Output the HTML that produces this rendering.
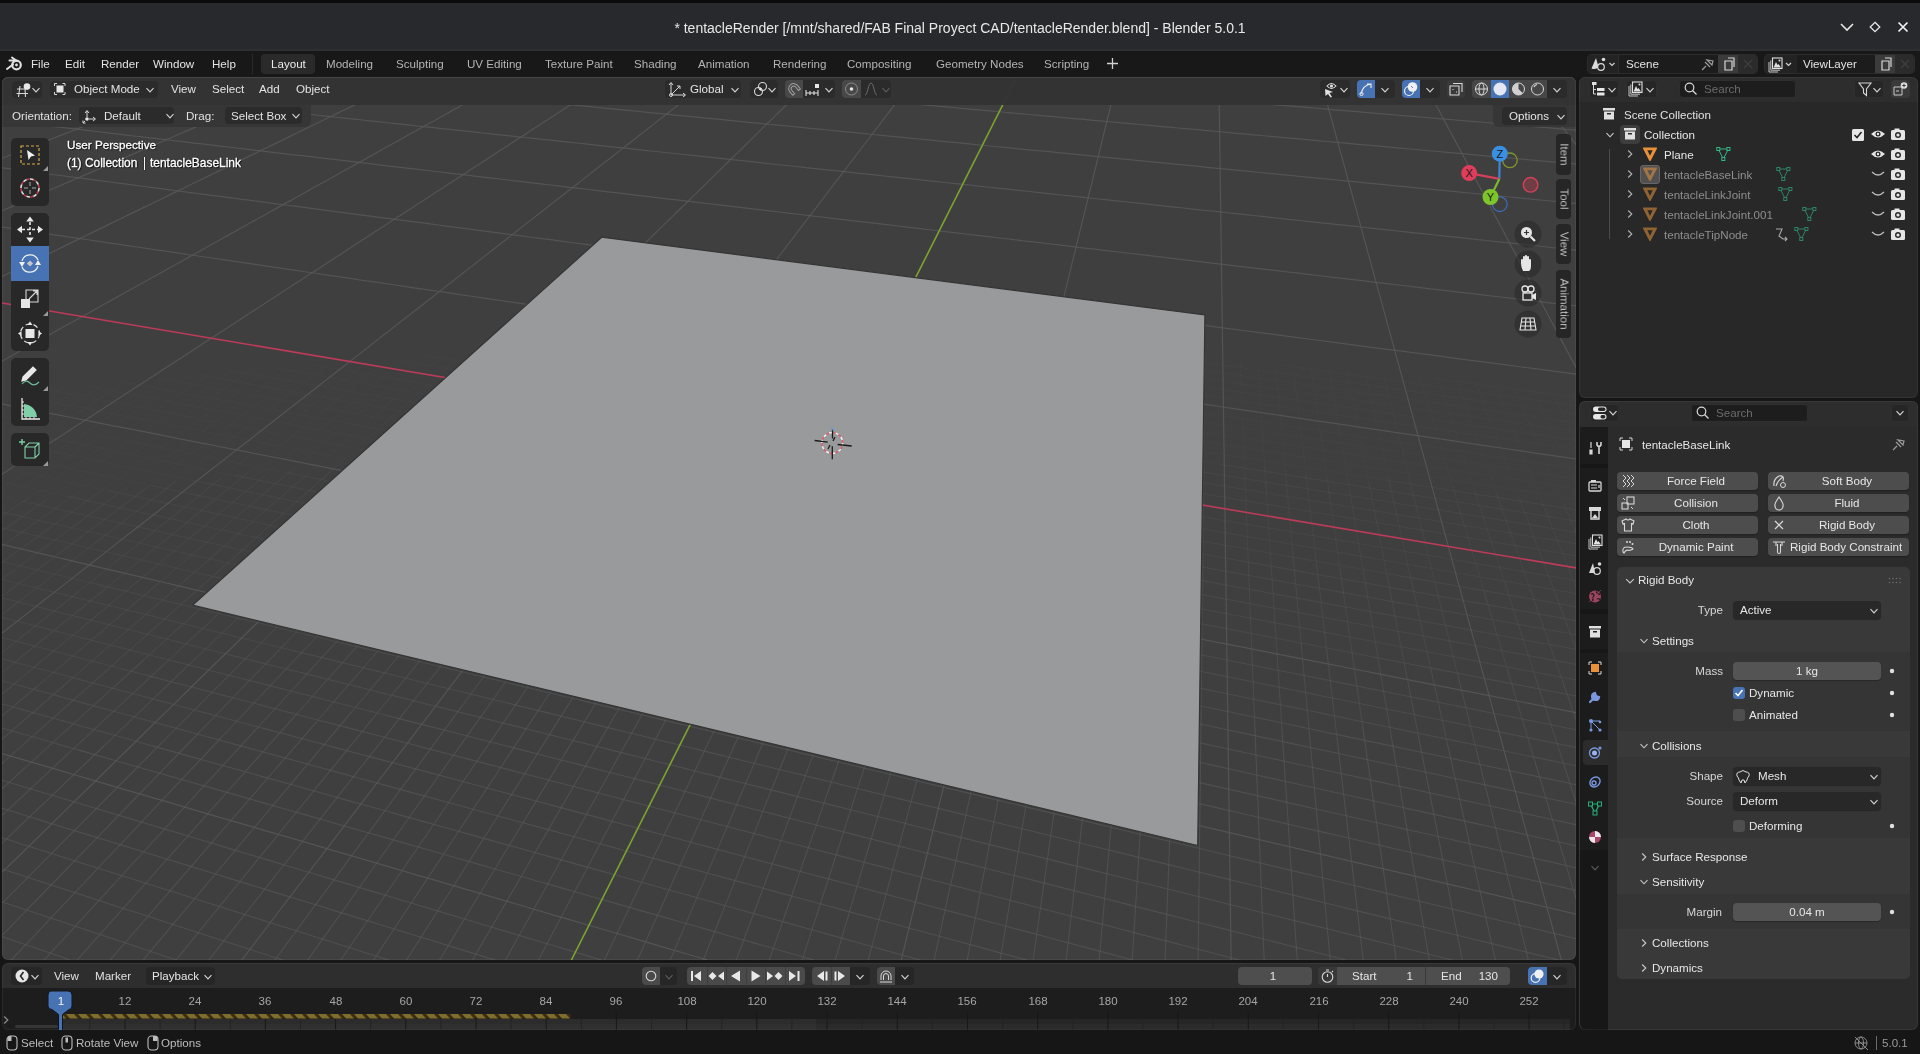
<!DOCTYPE html>
<html><head><meta charset="utf-8"><style>
html,body{margin:0;padding:0;width:1920px;height:1054px;overflow:hidden;background:#161616}
.t{position:absolute;white-space:pre;line-height:20px;font-family:"Liberation Sans", sans-serif;will-change:transform}
svg{overflow:visible}
</style></head><body style="position:relative">
<div style="position:absolute;left:0px;top:0px;width:1920px;height:1054px;background:#161616;border-radius:0px;"></div><div style="position:absolute;left:0px;top:0px;width:1920px;height:51px;background:#27292c;border-radius:0px;"></div><div style="position:absolute;left:0px;top:49px;width:1920px;height:2px;background:#2d2f32;border-radius:0px;"></div><div style="position:absolute;left:0px;top:0px;width:1920px;height:3px;background:#0b0b0b;border-radius:0px;"></div><div class="t" style="left:510.0px;width:900px;text-align:center;top:17.65px;font-size:14px;color:#e8e8e8;">* tentacleRender [/mnt/shared/FAB Final Proyect CAD/tentacleRender.blend] - Blender 5.0.1</div><svg style="position:absolute;left:1838px;top:20px;" width="18" height="14" viewBox="0 0 18 14"><path d="M3 4 L9 10 L15 4" stroke="#e6e6e6" stroke-width="1.6" fill="none"/></svg><svg style="position:absolute;left:1866px;top:18px;" width="18" height="18" viewBox="0 0 18 18"><path d="M9 4.3 L13.8 9 L9 13.7 L4.2 9 Z" stroke="#e6e6e6" stroke-width="1.3" fill="none"/></svg><svg style="position:absolute;left:1894px;top:18px;" width="18" height="18" viewBox="0 0 18 18"><path d="M4.5 4.5 L13.5 13.5 M13.5 4.5 L4.5 13.5" stroke="#f0f0f0" stroke-width="1.7" fill="none"/></svg><div style="position:absolute;left:0px;top:51px;width:1920px;height:26px;background:#181818;border-radius:0px;"></div><svg style="position:absolute;left:5px;top:55px;" width="20" height="18" viewBox="0 0 20 18"><g fill="none" stroke="#e0e0e0"><circle cx="11.5" cy="10" r="4.3" stroke-width="2.2"/><circle cx="11.5" cy="10" r="1.4" fill="#e0e0e0" stroke="none"/><path d="M2 14 L8 9.5 M4.5 5.5 L10 5.5 M7 2.5 L12 6" stroke-width="2" stroke-linecap="round"/></g></svg><div class="t" style="left:31px;top:54.28px;font-size:11.6px;color:#e3e3e3;">File</div><div class="t" style="left:65px;top:54.28px;font-size:11.6px;color:#e3e3e3;">Edit</div><div class="t" style="left:101px;top:54.28px;font-size:11.6px;color:#e3e3e3;">Render</div><div class="t" style="left:153px;top:54.28px;font-size:11.6px;color:#e3e3e3;">Window</div><div class="t" style="left:212px;top:54.28px;font-size:11.6px;color:#e3e3e3;">Help</div><div style="position:absolute;left:252px;top:54px;width:1px;height:20px;background:#2a2a2a;border-radius:0px;"></div><div style="position:absolute;left:261px;top:54px;width:54px;height:20px;background:#2a2a2a;border-radius:4px;"></div><div class="t" style="left:270.6px;top:54.28px;font-size:11.6px;color:#eaeaea;">Layout</div><div class="t" style="left:326.4px;top:54.28px;font-size:11.6px;color:#b4b4b4;">Modeling</div><div class="t" style="left:396.2px;top:54.28px;font-size:11.6px;color:#b4b4b4;">Sculpting</div><div class="t" style="left:467px;top:54.28px;font-size:11.6px;color:#b4b4b4;">UV Editing</div><div class="t" style="left:544.5px;top:54.28px;font-size:11.6px;color:#b4b4b4;">Texture Paint</div><div class="t" style="left:634px;top:54.28px;font-size:11.6px;color:#b4b4b4;">Shading</div><div class="t" style="left:698px;top:54.28px;font-size:11.6px;color:#b4b4b4;">Animation</div><div class="t" style="left:773px;top:54.28px;font-size:11.6px;color:#b4b4b4;">Rendering</div><div class="t" style="left:846.7px;top:54.28px;font-size:11.6px;color:#b4b4b4;">Compositing</div><div class="t" style="left:936.4px;top:54.28px;font-size:11.6px;color:#b4b4b4;">Geometry Nodes</div><div class="t" style="left:1044px;top:54.28px;font-size:11.6px;color:#b4b4b4;">Scripting</div><svg style="position:absolute;left:1106px;top:57px;" width="13" height="13" viewBox="0 0 13 13"><path d="M6.5 1 V12 M1 6.5 H12" stroke="#d0d0d0" stroke-width="1.3"/></svg><div style="position:absolute;left:1587px;top:54px;width:171px;height:20px;background:#232323;border-radius:5px;box-shadow:inset 0 0 0 1px #2c2c2c"></div><div style="position:absolute;left:1619px;top:55px;width:99px;height:18px;background:#1c1c1c;border-radius:0px;"></div><div style="position:absolute;left:1618px;top:55px;width:1px;height:18px;background:#2f2f2f;border-radius:0px;"></div><div style="position:absolute;left:1718px;top:55px;width:20px;height:18px;background:#3b3b3b;border-radius:0px;"></div><div style="position:absolute;left:1738px;top:55px;width:19px;height:18px;background:#2b2b2b;border-radius:0px;border-radius:0 4px 4px 0"></div><div class="t" style="left:1626.4px;top:53.68px;font-size:11.6px;color:#e3e3e3;">Scene</div><div style="position:absolute;left:1764px;top:54px;width:151px;height:20px;background:#232323;border-radius:5px;box-shadow:inset 0 0 0 1px #2c2c2c"></div><div style="position:absolute;left:1797px;top:55px;width:78px;height:18px;background:#1c1c1c;border-radius:0px;"></div><div style="position:absolute;left:1875px;top:55px;width:20px;height:18px;background:#3b3b3b;border-radius:0px;"></div><div style="position:absolute;left:1895px;top:55px;width:19px;height:18px;background:#2b2b2b;border-radius:0px;border-radius:0 4px 4px 0"></div><div class="t" style="left:1802.8px;top:53.68px;font-size:11.6px;color:#e3e3e3;">ViewLayer</div><svg style="position:absolute;left:1590px;top:55px;" width="34" height="18" viewBox="0 0 34 18"><path d="M1.5 13.5 L6 3 L8.5 12 Q6 15 1.5 13.5 Z" fill="#dcdcdc"/><circle cx="11" cy="12" r="3.3" fill="#232323" stroke="#dcdcdc" stroke-width="1.2"/><circle cx="13.5" cy="4.5" r="1.8" fill="#dcdcdc"/><path d="M19.5 8 L22 10.5 L24.5 8" stroke="#d0d0d0" stroke-width="1.2" fill="none"/></svg><svg style="position:absolute;left:1700px;top:56px;" width="16" height="16" viewBox="0 0 16 16"><path d="M2 14 L6 10 M5 6 L10 11 M7 4 L12 9 L13 5 Z" stroke="#9a9a9a" stroke-width="1.2" fill="none"/></svg><svg style="position:absolute;left:1720px;top:56px;" width="17" height="16" viewBox="0 0 17 16"><path d="M5 5 H12 V14 H5 Z M8 2 H14 V11" stroke="#d8d8d8" stroke-width="1.2" fill="none"/></svg><svg style="position:absolute;left:1877px;top:56px;" width="17" height="16" viewBox="0 0 17 16"><path d="M5 5 H12 V14 H5 Z M8 2 H14 V11" stroke="#d8d8d8" stroke-width="1.2" fill="none"/></svg><svg style="position:absolute;left:1741px;top:57px;" width="14" height="14" viewBox="0 0 14 14"><path d="M3 3 L11 11 M11 3 L3 11" stroke="#3e3e3e" stroke-width="1.3"/></svg><svg style="position:absolute;left:1898px;top:57px;" width="14" height="14" viewBox="0 0 14 14"><path d="M3 3 L11 11 M11 3 L3 11" stroke="#3e3e3e" stroke-width="1.3"/></svg><svg style="position:absolute;left:1767px;top:56px;" width="34" height="17" viewBox="0 0 34 17"><path d="M2 6 V16 H11 M3.8 4.5 V14.2 H13" stroke="#d8d8d8" stroke-width="0.9" fill="none"/><rect x="5.5" y="2" width="9.5" height="10.5" stroke="#e0e0e0" stroke-width="1.1" fill="none"/><path d="M6.5 11.5 L9 6 L10.5 9 L11.5 8 L14 11.5 Z" fill="#e0e0e0"/><circle cx="12.5" cy="4.5" r="1" fill="#e0e0e0"/><path d="M19 7 L21.5 9.5 L24 7" stroke="#d0d0d0" stroke-width="1.2" fill="none"/></svg><div style="position:absolute;left:2px;top:77px;width:1574px;height:883px;background:#3f3f3f;border-radius:6px;overflow:hidden"><svg style="position:absolute;left:-2px;top:-77px" width="1580" height="960" viewBox="0 0 1580 960"><path d="M1572.1 394.7L1575.9 402.1L1576.0 402.4M1552.5 392.0L1556.0 399.4L1559.6 406.9L1563.3 414.5L1567.0 422.3L1570.9 430.3L1574.8 438.4L1576.0 441.0M1533.0 389.4L1536.3 396.7L1539.7 404.1L1543.1 411.7L1546.6 419.4L1550.2 427.4L1553.9 435.4L1557.7 443.7L1561.5 452.2L1565.5 460.8L1569.5 469.6L1573.6 478.7L1576.0 484.0M1513.6 386.8L1516.7 394.0L1519.9 401.4L1523.1 408.9L1526.4 416.6L1529.8 424.5L1533.2 432.5L1536.7 440.7L1540.3 449.1L1544.0 457.6L1547.8 466.4L1551.6 475.4L1555.6 484.5L1559.6 493.9L1563.7 503.6M1494.4 384.2L1497.3 391.4L1500.2 398.7L1503.3 406.1L1506.3 413.8L1509.5 421.6L1512.7 429.5L1516.0 437.7L1519.3 446.0L1522.7 454.5L1526.2 463.2L1529.8 472.1L1533.5 481.2L1537.3 490.5L1541.1 500.0M1475.3 381.6L1478.0 388.7L1480.8 396.0L1483.6 403.4L1486.4 411.0L1489.3 418.7L1492.3 426.6L1495.4 434.7L1498.5 442.9L1501.6 451.4L1504.9 460.0L1508.2 468.8L1511.6 477.8L1515.1 487.1L1518.7 496.5M1456.4 379.1L1458.9 386.1L1461.4 393.3L1464.0 400.7L1466.7 408.2L1469.3 415.9L1472.1 423.7L1474.9 431.7L1477.8 439.9L1480.7 448.3L1483.7 456.8L1486.8 465.6L1489.9 474.5L1493.2 483.7L1496.4 493.0M1437.6 376.5L1439.9 383.5L1442.2 390.7L1444.6 398.0L1447.0 405.4L1449.5 413.1L1452.0 420.8L1454.6 428.8L1457.3 436.9L1460.0 445.2L1462.7 453.7L1465.6 462.4L1468.4 471.2L1471.4 480.3L1474.4 489.6M1419.0 374.0L1421.1 381.0L1423.2 388.1L1425.4 395.3L1427.6 402.7L1429.8 410.3L1432.2 418.0L1434.5 425.9L1436.9 433.9L1439.4 442.1L1441.9 450.6L1444.5 459.2L1447.1 468.0L1449.8 477.0L1452.6 486.2M1383.8 375.9L1385.5 382.9L1387.3 390.0L1389.1 397.3L1390.9 404.7L1392.8 412.3L1394.7 420.1L1396.7 428.0L1398.7 436.1L1400.8 444.4L1402.9 452.9L1405.0 461.5L1407.2 470.4L1409.4 479.4M1365.4 373.4L1366.9 380.3L1368.5 387.4L1370.1 394.6L1371.7 402.0L1373.4 409.6L1375.1 417.3L1376.8 425.1L1378.6 433.2L1380.4 441.4L1382.3 449.8L1384.2 458.4L1386.1 467.1L1388.1 476.1M1347.1 370.9L1348.4 377.8L1349.8 384.8L1351.2 392.0L1352.6 399.3L1354.1 406.8L1355.6 414.4L1357.1 422.2L1358.7 430.2L1360.3 438.4L1361.9 446.7L1363.6 455.2L1365.3 463.9L1367.0 472.8L1368.8 481.9M1328.9 368.4L1330.1 375.2L1331.3 382.2L1332.5 389.3L1333.7 396.6L1335.0 404.0L1336.3 411.6L1337.6 419.4L1338.9 427.3L1340.3 435.4L1341.7 443.6L1343.1 452.1L1344.6 460.7L1346.1 469.5L1347.6 478.6M1310.9 365.9L1311.9 372.7L1312.9 379.7L1313.9 386.7L1314.9 394.0L1316.0 401.3L1317.1 408.8L1318.2 416.5L1319.3 424.4L1320.4 432.4L1321.6 440.6L1322.8 449.0L1324.1 457.5L1325.3 466.3L1326.6 475.3M1293.0 363.5L1293.8 370.2L1294.6 377.1L1295.4 384.1L1296.3 391.3L1297.1 398.6L1298.0 406.1L1298.9 413.7L1299.8 421.5L1300.8 429.5L1301.7 437.6L1302.7 445.9L1303.7 454.4L1304.7 463.1L1305.8 472.0M1275.9 367.8L1276.5 374.6L1277.1 381.6L1277.8 388.7L1278.4 395.9L1279.1 403.3L1279.8 410.9L1280.5 418.6L1281.2 426.5L1282.0 434.6L1282.7 442.8L1283.5 451.3L1284.3 459.9L1285.1 468.7M1258.0 365.3L1258.5 372.1L1258.9 379.0L1259.4 386.1L1259.9 393.3L1260.4 400.6L1260.9 408.1L1261.4 415.8L1261.9 423.6L1262.4 431.6L1262.9 439.8L1263.5 448.2L1264.1 456.7L1264.6 465.5M1240.4 362.9L1240.6 369.6L1240.9 376.5L1241.2 383.5L1241.5 390.6L1241.8 397.9L1242.1 405.4L1242.4 413.0L1242.7 420.8L1243.0 428.7L1243.3 436.8L1243.6 445.1L1244.0 453.6L1244.3 462.3L1244.7 471.1M1205.4 358.1L1205.3 364.7L1205.2 371.5L1205.1 378.4L1205.0 385.4L1205.0 392.6L1204.9 399.9L1204.8 407.4L1204.7 415.1L1204.6 422.9L1204.5 430.9L1204.4 439.0L1204.3 447.4L1204.2 455.9L1204.1 464.6M1188.1 355.7L1187.8 362.3L1187.6 369.0L1187.3 375.8L1187.0 382.8L1186.8 390.0L1186.5 397.2L1186.2 404.7L1185.9 412.3L1185.6 420.0L1185.3 428.0L1185.0 436.1L1184.7 444.3L1184.4 452.8L1184.0 461.4M1170.5 359.9L1170.0 366.5L1169.6 373.3L1169.2 380.3L1168.7 387.3L1168.2 394.6L1167.8 402.0L1167.3 409.5L1166.8 417.2L1166.3 425.0L1165.8 433.1L1165.3 441.3L1164.7 449.7L1164.2 458.3M1153.2 357.5L1152.6 364.1L1152.0 370.8L1151.4 377.7L1150.8 384.8L1150.1 391.9L1149.5 399.2L1148.8 406.7L1148.1 414.4L1147.4 422.2L1146.7 430.1L1146.0 438.3L1145.2 446.6L1144.5 455.1M1136.1 355.1L1135.4 361.7L1134.6 368.4L1133.8 375.2L1133.0 382.2L1132.2 389.3L1131.3 396.6L1130.5 404.0L1129.6 411.6L1128.7 419.3L1127.8 427.2L1126.8 435.3L1125.9 443.5L1124.9 452.0L1123.9 460.6M1119.1 352.7L1118.2 359.2L1117.3 365.9L1116.3 372.7L1115.3 379.6L1114.3 386.7L1113.3 393.9L1112.3 401.3L1111.2 408.8L1110.1 416.5L1109.0 424.3L1107.9 432.3L1106.7 440.5L1105.5 448.9L1104.3 457.4M1102.3 350.4L1101.2 356.8L1100.1 363.5L1099.0 370.2L1097.8 377.1L1096.6 384.1L1095.4 391.3L1094.2 398.6L1093.0 406.0L1091.7 413.6L1090.4 421.4L1089.0 429.4L1087.7 437.5L1086.3 445.8L1084.9 454.3M1084.3 354.5L1083.0 361.0L1081.7 367.7L1080.4 374.6L1079.1 381.5L1077.7 388.6L1076.3 395.9L1074.9 403.3L1073.4 410.8L1071.9 418.6L1070.4 426.5L1068.8 434.5L1067.2 442.8L1065.6 451.2M1067.5 352.1L1066.1 358.6L1064.6 365.3L1063.1 372.1L1061.6 379.0L1060.1 386.0L1058.5 393.2L1056.9 400.6L1055.2 408.1L1053.6 415.7L1051.8 423.6L1050.1 431.6L1048.3 439.7L1046.5 448.1L1044.6 456.6M1034.3 347.5L1032.6 353.9L1030.8 360.4L1029.0 367.1L1027.1 373.9L1025.3 380.9L1023.3 388.0L1021.4 395.2L1019.4 402.6L1017.3 410.1L1015.2 417.8L1013.1 425.7L1010.9 433.8L1008.7 442.0L1006.4 450.4M1016.0 351.5L1014.1 358.0L1012.1 364.7L1010.1 371.4L1008.0 378.3L1005.9 385.4L1003.8 392.5L1001.6 399.9L999.4 407.4L997.1 415.0L994.8 422.8L992.4 430.8L990.0 439.0L987.5 447.3M999.5 349.2L997.4 355.6L995.3 362.2L993.2 368.9L990.9 375.8L988.7 382.8L986.4 389.9L984.0 397.2L981.6 404.6L979.2 412.2L976.7 420.0L974.1 427.9L971.5 436.0L968.8 444.2L966.1 452.7M983.2 346.9L981.0 353.3L978.7 359.8L976.3 366.5L974.0 373.3L971.6 380.2L969.1 387.3L966.6 394.5L964.0 401.9L961.4 409.4L958.7 417.1L955.9 425.0L953.1 433.0L950.3 441.2L947.3 449.6M967.0 344.6L964.6 350.9L962.1 357.4L959.7 364.0L957.1 370.8L954.5 377.7L951.9 384.7L949.2 391.9L946.5 399.2L943.7 406.7L940.8 414.3L937.9 422.1L934.9 430.1L931.9 438.2L928.7 446.5M948.3 348.6L945.7 355.0L943.1 361.6L940.4 368.3L937.7 375.1L934.9 382.1L932.0 389.2L929.1 396.5L926.1 403.9L923.1 411.5L920.0 419.2L916.8 427.1L913.6 435.2L910.3 443.5L906.9 451.9M932.2 346.3L929.4 352.7L926.6 359.2L923.8 365.9L920.9 372.6L918.0 379.6L914.9 386.6L911.9 393.8L908.7 401.2L905.5 408.7L902.2 416.4L898.9 424.2L895.5 432.2L892.0 440.4L888.4 448.8M916.1 344.0L913.3 350.3L910.3 356.8L907.3 363.4L904.3 370.2L901.2 377.0L898.0 384.0L894.8 391.2L891.5 398.5L888.1 406.0L884.6 413.6L881.1 421.4L877.5 429.3L873.8 437.4L870.1 445.7M897.2 348.0L894.1 354.4L891.0 361.0L887.8 367.7L884.5 374.5L881.2 381.5L877.8 388.6L874.3 395.8L870.8 403.2L867.2 410.8L863.5 418.5L859.7 426.4L855.8 434.4L851.9 442.7L847.9 451.1M865.4 343.4L862.0 349.7L858.6 356.2L855.1 362.8L851.5 369.5L847.9 376.4L844.2 383.4L840.4 390.5L836.5 397.8L832.6 405.3L828.6 412.9L824.4 420.6L820.2 428.6L815.9 436.7L811.6 444.9M846.2 347.4L842.6 353.8L839.0 360.4L835.2 367.1L831.5 373.9L827.6 380.8L823.6 387.9L819.6 395.1L815.5 402.5L811.3 410.1L807.0 417.8L802.7 425.6L798.2 433.7L793.6 441.9L788.9 450.3M830.4 345.1L826.7 351.5L822.9 358.0L819.1 364.6L815.1 371.4L811.1 378.3L807.0 385.3L802.8 392.5L798.6 399.8L794.2 407.3L789.8 414.9L785.2 422.8L780.6 430.7L775.8 438.9L771.0 447.2M814.8 342.8L810.9 349.1L807.0 355.6L803.0 362.2L798.9 368.9L794.8 375.7L790.5 382.7L786.2 389.9L781.7 397.1L777.2 404.6L772.6 412.1L767.9 419.9L763.1 427.8L758.2 435.9L753.2 444.2M795.2 346.8L791.2 353.2L787.0 359.8L782.8 366.4L778.5 373.2L774.1 380.2L769.6 387.2L765.1 394.5L760.4 401.8L755.6 409.4L750.7 417.0L745.8 424.9L740.7 432.9L735.5 441.1L730.2 449.5M779.7 344.5L775.5 350.9L771.2 357.4L766.8 364.0L762.4 370.7L757.8 377.6L753.2 384.6L748.5 391.8L743.7 399.1L738.7 406.6L733.7 414.2L728.6 422.0L723.3 430.0L717.9 438.1L712.5 446.4M764.2 342.2L759.9 348.6L755.5 355.0L751.0 361.6L746.4 368.3L741.7 375.1L736.9 382.1L732.0 389.2L727.1 396.4L722.0 403.9L716.8 411.4L711.5 419.2L706.1 427.1L700.5 435.1L694.9 443.4L689.1 451.8M744.4 346.2L739.9 352.6L735.2 359.2L730.5 365.8L725.7 372.6L720.8 379.5L715.7 386.6L710.6 393.8L705.4 401.1L700.0 408.7L694.6 416.3L689.0 424.2L683.3 432.2L677.5 440.3L671.5 448.7M729.1 343.9L724.4 350.3L719.6 356.8L714.7 363.4L709.8 370.1L704.7 377.0L699.5 384.0L694.3 391.1L688.9 398.4L683.4 405.9L677.8 413.5L672.0 421.3L666.2 429.2L660.2 437.3L654.1 445.6M693.7 345.7L688.7 352.0L683.5 358.6L678.3 365.2L672.9 372.0L667.5 378.9L661.9 385.9L656.3 393.1L650.5 400.4L644.5 407.9L638.5 415.6L632.3 423.4L626.0 431.4L619.6 439.6L613.0 447.9M678.5 343.4L673.4 349.7L668.1 356.2L662.7 362.8L657.2 369.5L651.7 376.3L646.0 383.3L640.1 390.5L634.2 397.8L628.1 405.2L621.9 412.8L615.6 420.6L609.2 428.5L602.6 436.6L595.8 444.9L588.9 453.3M658.2 347.4L652.8 353.8L647.3 360.3L641.7 367.0L635.9 373.8L630.1 380.8L624.1 387.9L618.1 395.1L611.8 402.5L605.5 410.0L599.0 417.7L592.4 425.6L585.7 433.6L578.8 441.8L571.7 450.2M643.1 345.1L637.6 351.4L631.9 357.9L626.2 364.6L620.3 371.3L614.3 378.2L608.3 385.3L602.0 392.4L595.7 399.8L589.2 407.2L582.6 414.9L575.8 422.7L568.9 430.7L561.8 438.8L554.6 447.1L547.2 455.6M622.4 349.1L616.7 355.6L610.8 362.1L604.8 368.8L598.7 375.7L592.5 382.7L586.1 389.8L579.6 397.1L573.0 404.5L566.2 412.1L559.3 419.8L552.3 427.7L545.1 435.8L537.7 444.1L530.1 452.5M607.4 346.8L601.6 353.2L595.6 359.7L589.4 366.4L583.2 373.2L576.8 380.1L570.3 387.2L563.7 394.4L556.9 401.8L550.0 409.3L543.0 417.0L535.8 424.8L528.4 432.8L520.9 441.0L513.2 449.4L505.3 458.0M586.5 350.9L580.4 357.3L574.2 363.9L567.8 370.7L561.3 377.6L554.7 384.6L547.9 391.8L541.0 399.1L534.0 406.5L526.8 414.2L519.4 421.9L511.9 429.9L504.2 438.0L496.4 446.3L488.3 454.8M571.6 348.5L565.4 355.0L559.0 361.5L552.5 368.2L545.9 375.1L539.1 382.0L532.2 389.1L525.2 396.4L518.0 403.8L510.7 411.4L503.2 419.1L495.5 427.0L487.7 435.1L479.7 443.3L471.5 451.7L463.1 460.3M550.5 352.6L544.0 359.1L537.3 365.8L530.6 372.5L523.7 379.5L516.7 386.5L509.5 393.7L502.2 401.1L494.7 408.6L487.1 416.3L479.3 424.1L471.3 432.1L463.1 440.3L454.8 448.6L446.3 457.2M514.2 354.4L507.3 360.9L500.3 367.6L493.2 374.4L485.9 381.4L478.5 388.5L470.9 395.7L463.1 403.1L455.2 410.7L447.1 418.4L438.9 426.2L430.4 434.3L421.8 442.5L413.0 450.9L404.0 459.5M499.5 352.0L492.5 358.5L485.4 365.1L478.1 371.9L470.7 378.8L463.1 385.9L455.4 393.1L447.5 400.4L439.5 407.9L431.3 415.5L422.9 423.3L414.3 431.3L405.5 439.5L396.6 447.8L387.4 456.4L378.0 465.1M477.7 356.1L470.5 362.7L463.1 369.4L455.6 376.3L447.9 383.3L440.0 390.4L432.0 397.7L423.8 405.1L415.5 412.7L407.0 420.5L398.3 428.4L389.4 436.5L380.3 444.8L371.0 453.2L361.4 461.9M463.1 353.8L455.7 360.3L448.2 367.0L440.6 373.8L432.8 380.7L424.8 387.8L416.7 395.0L408.3 402.4L399.9 409.9L391.2 417.6L382.4 425.5L373.3 433.5L364.1 441.7L354.6 450.1L345.0 458.7L335.1 467.5M441.1 357.9L433.5 364.5L425.7 371.3L417.8 378.2L409.7 385.2L401.4 392.4L393.0 399.7L384.4 407.2L375.6 414.8L366.6 422.6L357.4 430.6L348.0 438.7L338.5 447.0L328.7 455.6L318.6 464.3L308.4 473.2M426.5 355.5L418.8 362.1L410.9 368.8L402.9 375.6L394.6 382.6L386.3 389.7L377.7 397.0L369.0 404.4L360.0 412.0L350.9 419.8L341.6 427.7L332.1 435.7L322.4 444.0L312.5 452.4L302.3 461.1L291.9 469.9M404.2 359.7L396.2 366.3L388.1 373.1L379.7 380.1L371.2 387.1L362.6 394.3L353.7 401.7L344.6 409.2L335.4 416.9L326.0 424.8L316.3 432.8L306.5 441.0L296.4 449.3L286.1 457.9L275.6 466.7L264.8 475.6M389.8 357.3L381.7 363.9L373.4 370.6L364.9 377.5L356.3 384.5L347.5 391.7L338.5 399.0L329.4 406.5L320.0 414.1L310.4 421.9L300.7 429.8L290.7 438.0L280.5 446.3L270.0 454.8L259.4 463.4L248.5 472.3M367.2 361.5L358.8 368.2L350.3 375.0L341.5 382.0L332.6 389.1L323.5 396.3L314.2 403.7L304.7 411.3L295.0 419.0L285.1 426.9L275.0 435.0L264.7 443.2L254.1 451.6L243.3 460.2L232.2 469.1L220.9 478.1M330.0 363.3L321.2 370.0L312.2 376.9L303.1 383.9L293.8 391.0L284.2 398.3L274.5 405.8L264.6 413.4L254.4 421.1L244.0 429.1L233.5 437.2L222.6 445.5L211.6 453.9L200.2 462.6L188.7 471.5L176.8 480.5M306.8 367.6L297.8 374.4L288.5 381.3L279.0 388.4L269.4 395.6L259.6 403.0L249.5 410.6L239.2 418.3L228.7 426.2L218.0 434.2L207.1 442.4L195.9 450.8L184.4 459.4L172.7 468.2L160.7 477.2L148.5 486.4M292.6 365.1L283.4 371.9L274.0 378.8L264.5 385.8L254.7 393.0L244.7 400.3L234.6 407.8L224.2 415.5L213.6 423.3L202.7 431.3L191.7 439.4L180.3 447.8L168.8 456.3L156.9 465.0L144.8 473.9L132.4 483.0L119.7 492.4M269.1 369.4L259.6 376.2L250.0 383.2L240.1 390.4L230.0 397.6L219.7 405.1L209.2 412.7L198.5 420.4L187.5 428.3L176.3 436.4L164.9 444.7L153.2 453.1L141.2 461.8L129.0 470.6L116.5 479.7L103.7 488.9M255.0 366.9L245.4 373.7L235.6 380.7L225.6 387.7L215.4 395.0L205.0 402.3L194.4 409.9L183.6 417.6L172.5 425.4L161.2 433.5L149.6 441.7L137.8 450.0L125.7 458.6L113.3 467.4L100.7 476.4L87.7 485.5L74.5 494.9M231.2 371.2L221.3 378.1L211.2 385.1L200.9 392.3L190.4 399.6L179.7 407.1L168.7 414.7L157.5 422.5L146.1 430.5L134.4 438.6L122.5 447.0L110.3 455.5L97.8 464.2L85.0 473.1L71.9 482.2L58.6 491.5L44.9 501.0M207.2 375.6L197.0 382.6L186.6 389.7L175.9 397.0L165.1 404.4L154.0 411.9L142.7 419.7L131.2 427.6L119.4 435.7L107.3 443.9L95.0 452.3L82.4 461.0L69.5 469.8L56.3 478.8L42.8 488.1L29.0 497.5M193.1 373.1L182.8 380.0L172.3 387.1L161.6 394.3L150.6 401.7L139.4 409.2L128.0 416.8L116.4 424.7L104.4 432.7L92.3 440.9L79.8 449.2L67.1 457.8L54.1 466.6L40.8 475.5L27.1 484.7L13.2 494.0L2.0 501.6M168.7 377.5L158.1 384.5L147.3 391.6L136.2 399.0L124.9 406.4L113.4 414.0L101.7 421.8L89.6 429.8L77.3 437.9L64.8 446.2L51.9 454.7L38.8 463.3L25.4 472.2L11.6 481.3L2.0 487.7M130.1 379.4L119.1 386.4L107.8 393.6L96.3 401.0L84.6 408.5L72.6 416.1L60.3 423.9L47.8 431.9L35.1 440.1L22.0 448.5L8.6 457.0L2.0 461.2M105.1 383.8L93.8 391.0L82.2 398.3L70.3 405.7L58.2 413.3L45.9 421.1L33.3 429.0L20.4 437.1L7.2 445.4L2.0 448.7M79.8 388.4L68.1 395.6L56.2 403.0L44.0 410.5L31.5 418.2L18.8 426.1L5.8 434.1L2.0 436.5M66.0 385.8L54.2 392.9L42.1 400.3L29.8 407.8L17.3 415.4L4.5 423.2L2.0 424.7M40.3 390.3L28.2 397.6L15.8 405.0L3.1 412.6L2.0 413.3M14.4 394.9L2.0 402.2" stroke="#5a5a5a" stroke-opacity="0.120" stroke-width="1.1" fill="none"/>
<path d="M1563.7 503.6L1567.9 513.4L1572.3 523.5L1576.0 532.2M1541.1 500.0L1545.0 509.8L1549.1 519.8L1553.2 530.0L1557.4 540.5L1561.8 551.3L1566.2 562.3L1570.8 573.7L1575.5 585.3L1576.0 586.6M1518.7 496.5L1522.3 506.2L1526.1 516.1L1529.9 526.3L1533.8 536.7L1537.8 547.3L1542.0 558.3L1546.2 569.5L1550.5 581.0L1555.0 592.8M1496.4 493.0L1499.8 502.6L1503.3 512.5L1506.8 522.5L1510.4 532.8L1514.1 543.4L1517.9 554.3L1521.8 565.4L1525.9 576.8L1530.0 588.5M1474.4 489.6L1477.5 499.1L1480.7 508.9L1483.9 518.8L1487.2 529.1L1490.6 539.5L1494.1 550.3L1497.7 561.3L1501.4 572.6L1505.2 584.2M1452.6 486.2L1455.4 495.6L1458.3 505.3L1461.2 515.2L1464.3 525.3L1467.4 535.7L1470.6 546.3L1473.8 557.2L1477.2 568.4L1480.6 579.9L1484.1 591.7M1409.4 479.4L1411.7 488.7L1414.1 498.2L1416.5 507.9L1418.9 517.9L1421.5 528.1L1424.0 538.5L1426.7 549.2L1429.4 560.2L1432.2 571.5L1435.1 583.1M1388.1 476.1L1390.2 485.3L1392.3 494.7L1394.4 504.4L1396.6 514.2L1398.8 524.3L1401.1 534.7L1403.5 545.3L1405.9 556.2L1408.3 567.4L1410.9 578.8M1368.8 481.9L1370.6 491.3L1372.5 500.8L1374.4 510.6L1376.4 520.6L1378.4 530.9L1380.4 541.4L1382.5 552.2L1384.7 563.2L1386.9 574.6M1347.6 478.6L1349.2 487.8L1350.8 497.3L1352.4 507.0L1354.1 516.9L1355.8 527.1L1357.6 537.5L1359.4 548.2L1361.3 559.2L1363.2 570.4M1326.6 475.3L1327.9 484.4L1329.3 493.8L1330.7 503.4L1332.1 513.3L1333.5 523.4L1335.0 533.7L1336.5 544.3L1338.1 555.1L1339.7 566.3M1305.8 472.0L1306.8 481.1L1307.9 490.4L1309.1 499.9L1310.2 509.7L1311.4 519.7L1312.6 529.9L1313.8 540.4L1315.1 551.2L1316.4 562.2M1285.1 468.7L1285.9 477.7L1286.8 487.0L1287.7 496.4L1288.5 506.1L1289.5 516.0L1290.4 526.1L1291.3 536.5L1292.3 547.2L1293.3 558.1M1264.6 465.5L1265.2 474.4L1265.8 483.6L1266.4 492.9L1267.1 502.5L1267.7 512.3L1268.4 522.4L1269.1 532.7L1269.8 543.3L1270.5 554.1L1271.2 565.2M1244.7 471.1L1245.0 480.2L1245.4 489.5L1245.8 499.0L1246.2 508.7L1246.6 518.7L1247.0 528.9L1247.4 539.4L1247.8 550.1L1248.3 561.1M1204.1 464.6L1204.0 473.6L1203.9 482.7L1203.8 492.0L1203.6 501.6L1203.5 511.4L1203.4 521.4L1203.3 531.7L1203.2 542.3L1203.0 553.1M1184.0 461.4L1183.7 470.3L1183.4 479.3L1183.0 488.6L1182.7 498.1L1182.3 507.8L1181.9 517.8L1181.5 527.9L1181.1 538.4L1180.7 549.1M1164.2 458.3L1163.6 467.0L1163.0 476.0L1162.5 485.2L1161.9 494.6L1161.2 504.2L1160.6 514.1L1160.0 524.2L1159.3 534.5L1158.6 545.2L1157.9 556.0M1144.5 455.1L1143.7 463.8L1142.9 472.7L1142.1 481.8L1141.2 491.2L1140.4 500.7L1139.5 510.5L1138.6 520.5L1137.7 530.7L1136.7 541.3L1135.8 552.0M1123.9 460.6L1122.9 469.4L1121.8 478.5L1120.8 487.7L1119.7 497.2L1118.6 506.9L1117.4 516.8L1116.2 527.0L1115.0 537.4L1113.8 548.1M1104.3 457.4L1103.1 466.2L1101.8 475.2L1100.5 484.3L1099.2 493.7L1097.8 503.3L1096.4 513.2L1095.0 523.2L1093.5 533.6L1092.0 544.1M1084.9 454.3L1083.4 463.0L1081.9 471.9L1080.4 481.0L1078.8 490.3L1077.3 499.8L1075.6 509.5L1073.9 519.5L1072.2 529.8L1070.5 540.2M1065.6 451.2L1063.9 459.8L1062.2 468.6L1060.5 477.6L1058.7 486.8L1056.9 496.3L1055.0 506.0L1053.1 515.9L1051.1 526.0L1049.1 536.4L1047.0 547.0M1044.6 456.6L1042.7 465.4L1040.7 474.3L1038.7 483.5L1036.7 492.8L1034.6 502.4L1032.4 512.2L1030.2 522.3L1027.9 532.6L1025.6 543.1M1006.4 450.4L1004.1 459.0L1001.7 467.8L999.2 476.8L996.7 486.0L994.2 495.4L991.6 505.0L988.9 514.9L986.2 525.0L983.3 535.4M987.5 447.3L985.0 455.8L982.4 464.5L979.8 473.5L977.1 482.6L974.3 491.9L971.4 501.5L968.5 511.3L965.5 521.3L962.5 531.6L959.4 542.1M966.1 452.7L963.3 461.3L960.4 470.2L957.5 479.2L954.5 488.5L951.5 498.0L948.3 507.7L945.1 517.6L941.8 527.8L938.5 538.2M947.3 449.6L944.4 458.2L941.3 466.9L938.2 475.9L935.0 485.1L931.7 494.5L928.3 504.1L924.9 514.0L921.4 524.1L917.7 534.4M928.7 446.5L925.6 455.0L922.3 463.7L919.0 472.6L915.5 481.7L912.1 491.0L908.5 500.6L904.8 510.3L901.1 520.4L897.2 530.6L893.3 541.1M906.9 451.9L903.5 460.5L899.9 469.3L896.3 478.4L892.6 487.6L888.8 497.1L884.9 506.8L881.0 516.7L876.9 526.8L872.7 537.2M888.4 448.8L884.8 457.4L881.0 466.1L877.2 475.1L873.3 484.2L869.3 493.6L865.2 503.2L861.0 513.0L856.7 523.1L852.3 533.4M870.1 445.7L866.2 454.2L862.3 462.9L858.3 471.8L854.2 480.9L850.0 490.2L845.7 499.7L841.3 509.4L836.7 519.4L832.1 529.6L827.4 540.1M847.9 451.1L843.7 459.7L839.5 468.5L835.2 477.5L830.8 486.7L826.3 496.2L821.7 505.8L816.9 515.7L812.1 525.9L807.1 536.3M811.6 444.9L807.1 453.4L802.5 462.1L797.8 470.9L793.0 480.0L788.0 489.3L783.0 498.8L777.9 508.5L772.6 518.4L767.2 528.6L761.6 539.1M788.9 450.3L784.2 458.9L779.3 467.7L774.3 476.7L769.2 485.9L763.9 495.3L758.6 504.9L753.1 514.8L747.5 524.9L741.7 535.3M771.0 447.2L766.0 455.7L760.9 464.5L755.8 473.4L750.5 482.5L745.0 491.8L739.5 501.4L733.8 511.2L727.9 521.2L722.0 531.4L715.8 542.0M753.2 444.2L748.0 452.6L742.8 461.3L737.4 470.1L731.9 479.1L726.3 488.4L720.5 497.9L714.6 507.6L708.6 517.5L702.4 527.7L696.0 538.1M730.2 449.5L724.7 458.1L719.2 466.8L713.5 475.8L707.7 485.0L701.7 494.4L695.6 504.0L689.4 513.8L683.0 523.9L676.4 534.3M712.5 446.4L706.8 454.9L701.1 463.6L695.2 472.5L689.2 481.6L683.1 490.9L676.8 500.5L670.4 510.2L663.8 520.2L657.0 530.5L650.1 541.0M689.1 451.8L683.2 460.4L677.2 469.3L671.0 478.3L664.6 487.5L658.2 497.0L651.5 506.6L644.7 516.5L637.8 526.7L630.6 537.1M671.5 448.7L665.4 457.3L659.2 466.0L652.8 475.0L646.3 484.1L639.7 493.5L632.8 503.1L625.8 512.9L618.7 523.0L611.3 533.3L603.8 543.8M654.1 445.6L647.8 454.1L641.4 462.8L634.9 471.7L628.2 480.8L621.3 490.0L614.3 499.6L607.1 509.3L599.8 519.3L592.2 529.5L584.5 540.0M613.0 447.9L606.3 456.5L599.4 465.2L592.3 474.1L585.1 483.2L577.7 492.6L570.2 502.2L562.5 512.0L554.5 522.0L546.4 532.3L538.1 542.8M588.9 453.3L581.9 462.0L574.6 470.8L567.3 479.9L559.7 489.2L552.0 498.6L544.0 508.4L535.9 518.3L527.6 528.5L519.1 539.0L510.4 549.7M571.7 450.2L564.5 458.8L557.1 467.6L549.5 476.6L541.8 485.8L533.9 495.2L525.8 504.8L517.5 514.7L509.0 524.8L500.3 535.1L491.4 545.7M547.2 455.6L539.7 464.4L532.0 473.3L524.1 482.4L516.0 491.7L507.7 501.3L499.2 511.0L490.5 521.0L481.7 531.3L472.5 541.8L463.2 552.6M530.1 452.5L522.4 461.2L514.5 470.0L506.5 479.0L498.2 488.3L489.8 497.7L481.1 507.4L472.3 517.4L463.2 527.5L453.9 538.0L444.3 548.6M505.3 458.0L497.3 466.7L489.0 475.7L480.6 484.9L472.0 494.3L463.2 503.9L454.1 513.7L444.9 523.8L435.4 534.1L425.7 544.7L415.7 555.6M488.3 454.8L480.1 463.5L471.7 472.4L463.2 481.5L454.4 490.8L445.4 500.3L436.2 510.1L426.7 520.1L417.1 530.3L407.1 540.8L397.0 551.6M463.1 460.3L454.6 469.2L445.8 478.2L436.9 487.4L427.7 496.8L418.3 506.5L408.7 516.4L398.9 526.6L388.8 537.0L378.5 547.6L367.9 558.6M446.3 457.2L437.6 465.9L428.7 474.9L419.6 484.0L410.2 493.4L400.7 503.0L390.9 512.8L380.9 522.8L370.6 533.1L360.1 543.7L349.3 554.5M404.0 459.5L394.8 468.3L385.4 477.3L375.7 486.5L365.8 495.9L355.7 505.6L345.4 515.5L334.8 525.6L323.9 536.0L312.7 546.6L301.3 557.5M378.0 465.1L368.5 474.0L358.7 483.1L348.6 492.5L338.4 502.0L327.8 511.8L317.1 521.9L306.0 532.2L294.7 542.7L283.1 553.5L271.2 564.6M361.4 461.9L351.7 470.7L341.8 479.8L331.6 489.0L321.1 498.5L310.5 508.2L299.5 518.2L288.3 528.4L276.8 538.8L265.1 549.5L253.0 560.5L240.6 571.8M335.1 467.5L325.0 476.5L314.7 485.6L304.1 495.0L293.3 504.7L282.2 514.5L270.8 524.6L259.1 535.0L247.2 545.6L235.0 556.5L222.4 567.6M308.4 473.2L297.9 482.3L287.2 491.6L276.2 501.1L264.9 510.9L253.4 520.9L241.6 531.2L229.5 541.7L217.1 552.5L204.4 563.5L191.3 574.8M291.9 469.9L281.3 478.9L270.4 488.2L259.3 497.6L247.9 507.3L236.2 517.2L224.2 527.4L212.0 537.8L199.4 548.5L186.5 559.4L173.3 570.7L159.7 582.2M264.8 475.6L253.8 484.8L242.5 494.2L230.9 503.8L219.1 513.6L207.0 523.7L194.6 534.0L181.8 544.6L168.8 555.4L155.4 566.5L141.7 578.0M248.5 472.3L237.3 481.4L225.9 490.7L214.2 500.2L202.2 510.0L189.9 520.0L177.3 530.2L164.4 540.7L151.2 551.4L137.7 562.5L123.8 573.8L109.5 585.4M220.9 478.1L209.4 487.3L197.5 496.7L185.4 506.4L173.0 516.3L160.3 526.4L147.2 536.8L133.9 547.5L120.1 558.4L106.1 569.6L91.7 581.1L76.9 592.9M176.8 480.5L164.7 489.8L152.3 499.3L139.6 509.0L126.6 519.0L113.2 529.2L99.6 539.7L85.5 550.4L71.2 561.4L56.4 572.7L41.3 584.3L25.8 596.1M148.5 486.4L135.9 495.8L123.1 505.5L109.9 515.3L96.5 525.5L82.6 535.8L68.5 546.5L54.0 557.3L39.1 568.5L23.8 580.0L8.1 591.8L2.0 596.4M119.7 492.4L106.7 501.9L93.5 511.7L79.8 521.7L65.9 532.0L51.6 542.5L36.9 553.3L21.9 564.4L6.5 575.8L2.0 579.1M103.7 488.9L90.6 498.4L77.1 508.1L63.4 518.1L49.3 528.2L34.8 538.7L20.0 549.4L4.8 560.3L2.0 562.4M74.5 494.9L60.9 504.6L47.0 514.4L32.8 524.5L18.2 534.8L3.3 545.4L2.0 546.4M44.9 501.0L30.9 510.8L16.5 520.8L2.0 530.9M29.0 497.5L14.8 507.2L2.0 516.0" stroke="#5a5a5a" stroke-opacity="0.240" stroke-width="1.1" fill="none"/>
<path d="M1555.0 592.8L1559.6 605.0L1564.3 617.4L1569.1 630.3L1574.1 643.4L1576.0 648.5M1530.0 588.5L1534.2 600.5L1538.5 612.9L1543.0 625.5L1547.6 638.6L1552.3 652.0L1557.1 665.8L1562.1 679.9M1505.2 584.2L1509.0 596.1L1513.0 608.3L1517.1 620.9L1521.3 633.8L1525.6 647.0L1530.0 660.7L1534.6 674.7M1484.1 591.7L1487.8 603.8L1491.5 616.2L1495.3 629.0L1499.2 642.2L1503.3 655.7L1507.4 669.5M1435.1 583.1L1438.0 594.9L1441.0 607.1L1444.1 619.7L1447.3 632.5L1450.6 645.8L1453.9 659.4L1457.4 673.4M1410.9 578.8L1413.5 590.6L1416.2 602.6L1418.9 615.0L1421.7 627.8L1424.6 640.9L1427.6 654.3L1430.7 668.2M1386.9 574.6L1389.2 586.2L1391.5 598.2L1393.9 610.5L1396.4 623.1L1398.9 636.1L1401.5 649.4L1404.2 663.1M1363.2 570.4L1365.1 582.0L1367.1 593.8L1369.2 606.0L1371.3 618.5L1373.5 631.3L1375.7 644.5L1378.0 658.0M1339.7 566.3L1341.3 577.7L1343.0 589.4L1344.7 601.5L1346.5 613.9L1348.3 626.6L1350.2 639.6L1352.1 653.0M1316.4 562.2L1317.7 573.5L1319.1 585.1L1320.5 597.1L1321.9 609.3L1323.4 621.9L1324.9 634.8L1326.5 648.1M1293.3 558.1L1294.3 569.3L1295.4 580.9L1296.5 592.7L1297.6 604.8L1298.7 617.2L1299.9 630.0L1301.1 643.2M1271.2 565.2L1271.9 576.6L1272.7 588.3L1273.5 600.3L1274.3 612.7L1275.1 625.3L1276.0 638.4L1276.9 651.7M1248.3 561.1L1248.7 572.4L1249.2 584.0L1249.6 595.9L1250.1 608.1L1250.6 620.7L1251.1 633.6L1251.7 646.8M1203.0 553.1L1202.9 564.2L1202.8 575.5L1202.6 587.2L1202.5 599.2L1202.3 611.5L1202.2 624.1L1202.0 637.1M1180.7 549.1L1180.3 560.1L1179.9 571.3L1179.4 582.9L1179.0 594.8L1178.5 606.9L1178.1 619.5L1177.6 632.3M1157.9 556.0L1157.2 567.2L1156.5 578.6L1155.7 590.4L1155.0 602.5L1154.2 614.8L1153.4 627.6M1135.8 552.0L1134.8 563.1L1133.8 574.4L1132.7 586.1L1131.6 598.0L1130.5 610.3L1129.4 622.9L1128.2 635.8M1113.8 548.1L1112.5 559.0L1111.2 570.3L1109.9 581.8L1108.5 593.6L1107.1 605.8L1105.7 618.3L1104.2 631.1M1092.0 544.1L1090.5 555.0L1088.9 566.1L1087.3 577.5L1085.6 589.3L1083.9 601.3L1082.2 613.7L1080.4 626.4M1070.5 540.2L1068.7 551.0L1066.8 562.0L1064.9 573.3L1063.0 585.0L1061.0 596.9L1058.9 609.1L1056.8 621.7M1047.0 547.0L1044.9 558.0L1042.8 569.2L1040.5 580.7L1038.3 592.5L1035.9 604.6L1033.5 617.0L1031.0 629.8M1025.6 543.1L1023.2 554.0L1020.8 565.1L1018.3 576.4L1015.7 588.1L1013.1 600.1L1010.4 612.5L1007.6 625.1M983.3 535.4L980.5 546.0L977.5 556.9L974.5 568.1L971.4 579.6L968.2 591.3L964.9 603.4L961.5 615.8M959.4 542.1L956.2 552.9L952.9 564.0L949.5 575.4L946.0 587.0L942.5 599.0L938.8 611.3L935.1 623.9M938.5 538.2L935.0 548.9L931.5 559.9L927.8 571.2L924.1 582.7L920.3 594.6L916.3 606.8L912.3 619.3M917.7 534.4L914.0 545.0L910.3 555.9L906.4 567.0L902.4 578.5L898.3 590.2L894.1 602.3L889.7 614.7M893.3 541.1L889.2 551.9L885.1 562.9L880.9 574.3L876.5 585.9L872.0 597.8L867.4 610.1L862.7 622.7M872.7 537.2L868.4 547.9L864.0 558.9L859.5 570.1L854.9 581.6L850.2 593.4L845.3 605.6L840.3 618.0M852.3 533.4L847.8 544.0L843.2 554.8L838.4 566.0L833.6 577.4L828.6 589.1L823.4 601.1L818.2 613.5M827.4 540.1L822.5 550.9L817.5 561.9L812.4 573.2L807.2 584.8L801.8 596.7L796.2 608.9L790.5 621.5M807.1 536.3L802.0 546.9L796.8 557.8L791.4 569.0L785.9 580.5L780.3 592.3L774.5 604.4L768.6 616.8M761.6 539.1L755.9 549.8L750.1 560.8L744.1 572.1L738.0 583.7L731.7 595.5L725.2 607.7L718.6 620.3M741.7 535.3L735.8 545.9L729.7 556.8L723.5 567.9L717.1 579.4L710.6 591.2L703.9 603.2L697.0 615.6M715.8 542.0L709.5 552.8L703.1 563.8L696.5 575.2L689.7 586.8L682.8 598.8L675.6 611.1L668.3 623.7M696.0 538.1L689.5 548.8L682.9 559.8L676.0 571.0L669.0 582.5L661.8 594.4L654.4 606.6L646.8 619.1M676.4 534.3L669.7 544.9L662.8 555.7L655.8 566.9L648.5 578.3L641.1 590.0L633.5 602.1L625.6 614.5L617.6 627.2M650.1 541.0L643.0 551.7L635.7 562.8L628.2 574.1L620.6 585.7L612.7 597.6L604.6 609.9L596.3 622.5M630.6 537.1L623.3 547.8L615.8 558.7L608.1 569.9L600.2 581.4L592.1 593.3L583.8 605.4L575.3 617.8M603.8 543.8L596.1 554.7L588.2 565.8L580.1 577.2L571.8 588.9L563.2 600.9L554.4 613.3L545.4 625.9M584.5 540.0L576.6 550.7L568.5 561.7L560.1 573.0L551.6 584.6L542.8 596.5L533.8 608.7L524.6 621.3M538.1 542.8L529.6 553.6L520.8 564.7L511.8 576.1L502.6 587.8L493.2 599.8L483.5 612.1L473.5 624.7M510.4 549.7L501.4 560.7L492.2 571.9L482.8 583.5L473.1 595.4L463.2 607.5L453.0 620.1L442.5 632.9M491.4 545.7L482.2 556.6L472.8 567.8L463.2 579.2L453.3 591.0L443.2 603.1L432.7 615.5L422.0 628.2M463.2 552.6L453.6 563.7L443.8 575.0L433.7 586.7L423.3 598.6L412.7 610.9L401.7 623.5L390.5 636.5M444.3 548.6L434.6 559.6L424.5 570.8L414.2 582.4L403.7 594.2L392.8 606.4L381.7 618.9L370.2 631.7L358.4 644.9M415.7 555.6L405.5 566.7L395.0 578.1L384.2 589.9L373.1 601.9L361.8 614.3L350.1 627.0L338.1 640.0M397.0 551.6L386.6 562.6L375.9 573.9L364.9 585.5L353.7 597.5L342.1 609.7L330.2 622.3L318.0 635.2L305.5 648.5M367.9 558.6L357.0 569.8L345.8 581.3L334.4 593.1L322.6 605.2L310.5 617.6L298.1 630.4L285.3 643.6M349.3 554.5L338.2 565.6L326.9 577.0L315.2 588.7L303.3 600.7L291.0 613.1L278.4 625.7L265.4 638.8L252.1 652.1M301.3 557.5L289.6 568.7L277.6 580.2L265.2 591.9L252.6 604.0L239.6 616.4L226.2 629.2L212.4 642.3L198.3 655.8M271.2 564.6L259.0 575.9L246.5 587.6L233.6 599.6L220.4 611.9L206.9 624.5L192.9 637.5L178.6 650.8L163.9 664.6M240.6 571.8L227.9 583.3L214.9 595.2L201.5 607.3L187.7 619.9L173.6 632.7L159.1 645.9L144.1 659.5M222.4 567.6L209.5 579.1L196.3 590.8L182.7 602.9L168.8 615.3L154.5 628.0L139.8 641.1L124.6 654.5L109.1 668.3M191.3 574.8L177.9 586.5L164.2 598.4L150.0 610.7L135.5 623.3L120.6 636.2L105.3 649.6L89.5 663.2L73.3 677.3M159.7 582.2L145.8 594.0L131.5 606.2L116.8 618.7L101.7 631.5L86.2 644.6L70.2 658.2L53.8 672.1L37.0 686.5M141.7 578.0L127.6 589.7L113.1 601.7L98.2 614.1L83.0 626.8L67.3 639.8L51.1 653.2L34.5 667.0L17.5 681.2M109.5 585.4L94.9 597.3L79.9 609.5L64.4 622.1L48.5 635.0L32.2 648.3L15.5 661.9L2.0 672.9M76.9 592.9L61.7 605.0L46.1 617.4L30.0 630.2L13.5 643.4L2.0 652.6M25.8 596.1L9.9 608.3L2.0 614.4" stroke="#5a5a5a" stroke-opacity="0.360" stroke-width="1.1" fill="none"/>
<path d="M1562.1 679.9L1567.2 694.5L1572.5 709.6L1576.0 719.6M1534.6 674.7L1539.3 689.2L1544.2 704.0L1549.1 719.4L1554.3 735.2L1559.6 751.4L1565.0 768.2M1507.4 669.5L1511.7 683.8L1516.1 698.6L1520.7 713.7L1525.3 729.3L1530.1 745.4L1535.1 762.0M1457.4 673.4L1461.0 687.8L1464.6 702.6L1468.4 717.9L1472.3 733.6L1476.3 749.9M1430.7 668.2L1433.8 682.5L1437.1 697.1L1440.4 712.2L1443.9 727.8L1447.4 743.9M1404.2 663.1L1407.0 677.2L1409.8 691.7L1412.7 706.7L1415.7 722.1L1418.8 737.9M1378.0 658.0L1380.4 672.0L1382.8 686.4L1385.3 701.2L1387.9 716.4L1390.6 732.1M1352.1 653.0L1354.1 666.9L1356.2 681.1L1358.3 695.7L1360.4 710.8L1362.7 726.3M1326.5 648.1L1328.1 661.8L1329.8 675.8L1331.5 690.3L1333.2 705.2L1335.0 720.6L1336.9 736.4M1301.1 643.2L1302.4 656.7L1303.6 670.7L1305.0 685.0L1306.3 699.7L1307.7 714.9L1309.1 730.6M1276.9 651.7L1277.8 665.5L1278.7 679.7L1279.7 694.3L1280.7 709.3L1281.7 724.8M1251.7 646.8L1252.2 660.4L1252.8 674.5L1253.4 688.9L1253.9 703.8L1254.6 719.1M1202.0 637.1L1201.9 650.5L1201.7 664.2L1201.5 678.3L1201.3 692.9L1201.2 707.8M1177.6 632.3L1177.1 645.5L1176.5 659.1L1176.0 673.1L1175.5 687.5L1174.9 702.3L1174.3 717.6M1153.4 627.6L1152.5 640.7L1151.7 654.1L1150.8 668.0L1149.9 682.2L1148.9 696.9L1148.0 712.0M1128.2 635.8L1127.0 649.2L1125.8 662.9L1124.5 677.0L1123.2 691.5L1121.9 706.4M1104.2 631.1L1102.7 644.3L1101.1 657.8L1099.5 671.8L1097.8 686.1L1096.1 700.9M1080.4 626.4L1078.5 639.4L1076.6 652.8L1074.7 666.6L1072.7 680.8L1070.6 695.4M1056.8 621.7L1054.7 634.6L1052.4 647.9L1050.2 661.5L1047.8 675.6L1045.4 690.1L1042.9 704.9M1031.0 629.8L1028.5 643.0L1025.9 656.5L1023.2 670.4L1020.4 684.7L1017.6 699.5M1007.6 625.1L1004.8 638.1L1001.8 651.5L998.8 665.3L995.7 679.4L992.5 694.0M961.5 615.8L958.1 628.6L954.5 641.7L950.9 655.2L947.1 669.1L943.2 683.3L939.2 698.0M935.1 623.9L931.2 636.9L927.2 650.2L923.2 664.0L919.0 678.1L914.7 692.6M912.3 619.3L908.1 632.1L903.9 645.3L899.5 658.9L895.0 672.9L890.3 687.2M889.7 614.7L885.3 627.4L880.7 640.4L876.1 653.9L871.2 667.7L866.3 681.9L861.2 696.6M862.7 622.7L857.9 635.6L852.9 648.9L847.7 662.6L842.5 676.7L837.0 691.2M840.3 618.0L835.2 630.9L829.9 644.0L824.5 657.6L818.9 671.5L813.2 685.9M818.2 613.5L812.8 626.1L807.2 639.2L801.5 652.6L795.6 666.4L789.5 680.6L783.3 695.2M790.5 621.5L784.7 634.4L778.7 647.7L772.5 661.3L766.2 675.3L759.6 689.8M768.6 616.8L762.4 629.6L756.2 642.8L749.7 656.3L743.0 670.2L736.2 684.5L729.2 699.2M718.6 620.3L711.8 633.1L704.7 646.4L697.5 660.0L690.1 674.0L682.5 688.4M697.0 615.6L689.9 628.4L682.6 641.5L675.1 655.0L667.4 668.8L659.5 683.1L651.3 697.8M668.3 623.7L660.7 636.7L652.9 650.0L645.0 663.7L636.8 677.8L628.3 692.3M646.8 619.1L639.0 631.9L631.0 645.1L622.8 658.7L614.3 672.6L605.5 687.0L596.5 701.8M617.6 627.2L609.3 640.2L600.8 653.7L592.0 667.5L583.0 681.7L573.7 696.3M596.3 622.5L587.8 635.4L579.0 648.7L570.0 662.4L560.7 676.5L551.1 690.9L541.3 705.8M575.3 617.8L566.5 630.7L557.5 643.8L548.2 657.3L538.6 671.3L528.8 685.6L518.7 700.4M545.4 625.9L536.2 639.0L526.6 652.4L516.8 666.1L506.7 680.3L496.3 694.9L485.7 709.9M524.6 621.3L515.1 634.2L505.3 647.4L495.2 661.1L484.9 675.1L474.2 689.5L463.3 704.4M473.5 624.7L463.2 637.7L452.7 651.1L441.8 664.8L430.7 678.9L419.2 693.5L407.4 708.5M442.5 632.9L431.8 646.1L420.7 659.7L409.3 673.7L397.5 688.1L385.5 703.0L373.0 718.2M422.0 628.2L411.0 641.3L399.7 654.7L388.1 668.6L376.1 682.8L363.8 697.5L351.1 712.6M390.5 636.5L379.0 649.8L367.1 663.5L354.9 677.6L342.3 692.1L329.3 707.0L316.0 722.4M358.4 644.9L346.3 658.4L333.9 672.4L321.1 686.7L307.9 701.5L294.3 716.7M338.1 640.0L325.8 653.4L313.1 667.2L300.1 681.4L286.6 696.1L272.8 711.1L258.5 726.6M305.5 648.5L292.6 662.2L279.3 676.2L265.6 690.7L251.5 705.6L237.1 720.9L222.1 736.7M285.3 643.6L272.2 657.1L258.7 671.0L244.8 685.3L230.5 700.1L215.8 715.3L200.6 730.9M252.1 652.1L238.4 665.9L224.3 680.1L209.7 694.6L194.8 709.7L179.4 725.1L163.5 741.1M198.3 655.8L183.8 669.7L168.8 684.0L153.4 698.7L137.6 713.8L121.2 729.4L104.4 745.5M163.9 664.6L148.7 678.7L133.1 693.2L117.0 708.2L100.4 723.6L83.4 739.5L65.8 755.9M144.1 659.5L128.8 673.5L112.9 687.9L96.7 702.7L79.9 717.9L62.6 733.7L44.8 749.9L26.4 766.6M109.1 668.3L93.0 682.6L76.5 697.2L59.6 712.3L42.1 727.9L24.0 743.9L5.4 760.4M73.3 677.3L56.6 691.8L39.5 706.8L21.7 722.1L3.5 738.0L2.0 739.3M37.0 686.5L19.6 701.2L2.0 716.2M17.5 681.2L2.0 694.1" stroke="#5a5a5a" stroke-opacity="0.480" stroke-width="1.1" fill="none"/>
<path d="M1565.0 768.2L1570.7 785.6L1576.0 802.0M1535.1 762.0L1540.2 779.2L1545.5 796.9L1551.0 815.1L1556.7 834.0L1562.5 853.6L1568.6 873.8L1574.8 894.7L1576.0 898.7M1476.3 749.9L1480.5 766.6L1484.7 783.9L1489.2 801.7L1493.7 820.2L1498.4 839.2L1503.3 858.9L1508.3 879.3L1513.6 900.4L1519.0 922.3L1524.6 945.0L1528.3 960.0M1447.4 743.9L1451.1 760.4L1454.9 777.5L1458.8 795.1L1462.8 813.4L1467.0 832.2L1471.3 851.6L1475.7 871.8L1480.4 892.6L1485.1 914.2L1490.1 936.6L1495.2 959.8L1495.3 960.0M1418.8 737.9L1422.0 754.3L1425.3 771.2L1428.8 788.6L1432.3 806.6L1435.9 825.2L1439.7 844.4L1443.6 864.3L1447.6 884.9L1451.7 906.2L1456.1 928.3L1460.5 951.2L1462.3 960.0M1390.6 732.1L1393.3 748.3L1396.2 765.0L1399.1 782.2L1402.1 800.0L1405.2 818.4L1408.4 837.3L1411.8 857.0L1415.2 877.3L1418.8 898.4L1422.5 920.1L1426.3 942.7L1429.2 960.0M1362.7 726.3L1365.0 742.3L1367.3 758.8L1369.8 775.8L1372.3 793.4L1374.9 811.6L1377.6 830.3L1380.4 849.7L1383.3 869.8L1386.2 890.6L1389.3 912.1L1392.5 934.4L1395.9 957.5L1396.2 960.0M1336.9 736.4L1338.8 752.7L1340.8 769.6L1342.8 786.9L1344.9 804.9L1347.1 823.4L1349.4 842.6L1351.7 862.4L1354.1 882.9L1356.6 904.1L1359.2 926.1L1361.9 949.0L1363.2 960.0M1309.1 730.6L1310.6 746.7L1312.1 763.3L1313.7 780.5L1315.3 798.2L1317.0 816.6L1318.8 835.5L1320.6 855.1L1322.4 875.3L1324.3 896.3L1326.3 918.0L1328.4 940.5L1330.2 960.0M1281.7 724.8L1282.7 740.7L1283.8 757.2L1284.9 774.2L1286.1 791.7L1287.3 809.8L1288.5 828.5L1289.8 847.8L1291.1 867.8L1292.5 888.5L1293.9 910.0L1295.3 932.2L1296.9 955.2L1297.2 960.0M1254.6 719.1L1255.2 734.9L1255.8 751.1L1256.5 767.9L1257.2 785.2L1257.9 803.1L1258.6 821.6L1259.4 840.7L1260.2 860.4L1261.0 880.9L1261.8 902.0L1262.7 924.0L1263.6 946.7L1264.2 960.0M1201.2 707.8L1201.0 723.3L1200.8 739.2L1200.6 755.6L1200.4 772.5L1200.2 790.0L1200.0 808.0L1199.7 826.7L1199.5 845.9L1199.3 865.9L1199.0 886.5L1198.8 907.9L1198.5 930.0L1198.2 953.0L1198.1 960.0M1174.3 717.6L1173.7 733.3L1173.1 749.5L1172.5 766.3L1171.8 783.5L1171.2 801.4L1170.5 819.8L1169.7 838.8L1169.0 858.5L1168.2 878.9L1167.4 900.0L1166.6 921.8L1165.7 944.5L1165.1 960.0M1148.0 712.0L1147.0 727.5L1146.0 743.6L1144.9 760.1L1143.8 777.2L1142.7 794.8L1141.5 813.0L1140.3 831.8L1139.1 851.2L1137.8 871.3L1136.5 892.2L1135.1 913.7L1133.7 936.1L1132.2 959.3L1132.1 960.0M1121.9 706.4L1120.5 721.8L1119.1 737.6L1117.6 754.0L1116.1 770.9L1114.6 788.3L1112.9 806.3L1111.3 824.8L1109.5 844.0L1107.8 863.9L1105.9 884.5L1104.0 905.8L1102.0 927.8L1100.0 950.7L1099.1 960.0M1096.1 700.9L1094.4 716.1L1092.5 731.8L1090.7 748.0L1088.7 764.6L1086.7 781.9L1084.7 799.6L1082.6 818.0L1080.4 836.9L1078.1 856.6L1075.8 876.9L1073.3 897.9L1070.8 919.7L1068.2 942.2L1066.1 960.0M1070.6 695.4L1068.5 710.5L1066.3 726.0L1064.0 742.0L1061.7 758.5L1059.3 775.5L1056.8 793.1L1054.2 811.2L1051.6 829.9L1048.8 849.3L1046.0 869.4L1043.0 890.1L1040.0 911.6L1036.8 933.9L1033.6 957.0L1033.1 960.0M1042.9 704.9L1040.3 720.3L1037.7 736.1L1034.9 752.4L1032.1 769.2L1029.2 786.6L1026.2 804.5L1023.1 823.0L1019.9 842.2L1016.6 862.0L1013.1 882.4L1009.6 903.7L1005.9 925.6L1002.1 948.4L1000.1 960.0M1017.6 699.5L1014.6 714.6L1011.6 730.3L1008.5 746.4L1005.3 763.0L1001.9 780.2L998.5 797.9L995.0 816.2L991.3 835.1L987.5 854.6L983.6 874.9L979.6 895.8L975.4 917.5L971.0 940.0L967.2 960.0M992.5 694.0L989.2 709.0L985.8 724.5L982.3 740.4L978.7 756.9L975.0 773.8L971.2 791.3L967.2 809.4L963.1 828.1L958.9 847.4L954.5 867.4L949.9 888.1L945.2 909.5L940.4 931.7L935.3 954.7L934.2 960.0M939.2 698.0L935.1 713.2L930.9 728.7L926.5 744.8L922.1 761.4L917.4 778.5L912.6 796.2L907.7 814.4L902.6 833.2L897.3 852.7L891.8 872.9L886.2 893.8L880.3 915.4L874.2 937.8L868.2 960.0M914.7 692.6L910.2 707.6L905.6 723.0L900.9 738.9L896.0 755.3L891.0 772.2L885.8 789.6L880.5 807.7L874.9 826.3L869.2 845.5L863.3 865.4L857.2 886.0L850.8 907.4L844.3 929.5L837.5 952.4L835.2 960.0M890.3 687.2L885.5 702.1L880.6 717.3L875.5 733.0L870.3 749.2L864.9 765.9L859.3 783.2L853.6 801.0L847.6 819.4L841.5 838.4L835.1 858.1L828.6 878.4L821.8 899.5L814.7 921.3L807.4 943.9L802.2 960.0M861.2 696.6L855.9 711.7L850.5 727.2L844.9 743.3L839.1 759.8L833.2 776.8L827.0 794.4L820.7 812.6L814.1 831.4L807.3 850.8L800.3 870.9L793.1 891.7L785.6 913.2L777.8 935.6L769.7 958.7L769.2 960.0M837.0 691.2L831.4 706.1L825.7 721.5L819.7 737.3L813.6 753.7L807.3 770.5L800.8 787.9L794.0 805.9L787.1 824.5L779.9 843.6L772.4 863.5L764.7 884.0L756.8 905.3L748.5 927.3L739.9 950.2L736.3 960.0M813.2 685.9L807.2 700.6L801.1 715.8L794.9 731.5L788.4 747.7L781.7 764.3L774.8 781.5L767.7 799.3L760.4 817.6L752.8 836.6L744.9 856.1L736.8 876.4L728.4 897.4L719.6 919.2L710.6 941.7L703.3 960.0M783.3 695.2L776.9 710.2L770.3 725.7L763.5 741.7L756.4 758.2L749.2 775.2L741.7 792.7L734.0 810.8L726.0 829.5L717.7 848.9L709.2 868.9L700.3 889.7L691.2 911.1L681.7 933.4L671.8 956.4L670.3 960.0M759.6 689.8L752.9 704.7L746.0 720.0L738.8 735.8L731.4 752.1L723.8 768.9L716.0 786.2L707.9 804.1L699.5 822.6L690.9 841.8L681.9 861.5L672.6 882.0L663.1 903.2L653.1 925.1L642.8 947.9L637.3 960.0M729.2 699.2L721.9 714.3L714.4 730.0L706.7 746.1L698.8 762.7L690.6 779.8L682.1 797.5L673.4 815.8L664.3 834.7L655.0 854.2L645.3 874.4L635.3 895.4L624.9 917.0L614.2 939.5L604.4 960.0M682.5 688.4L674.6 703.2L666.5 718.5L658.1 734.3L649.5 750.5L640.6 767.2L631.5 784.5L622.0 802.4L612.2 820.8L602.1 839.9L591.7 859.6L580.9 880.0L569.7 901.1L558.1 923.0L546.0 945.7L538.4 960.0M651.3 697.8L642.9 712.9L634.3 728.5L625.3 744.5L616.1 761.1L606.6 778.2L596.8 795.8L586.7 814.0L576.2 832.8L565.4 852.3L554.2 872.5L542.6 893.3L530.6 914.9L518.1 937.3L505.5 960.0M628.3 692.3L619.6 707.3L610.6 722.7L601.4 738.6L591.9 755.0L582.0 771.8L571.9 789.3L561.4 807.3L550.6 825.9L539.4 845.1L527.8 865.0L515.8 885.6L503.4 906.9L490.6 929.0L477.2 951.9L472.5 960.0M596.5 701.8L587.3 717.0L577.7 732.7L567.9 748.9L557.7 765.6L547.3 782.8L536.4 800.6L525.3 819.0L513.7 838.0L501.8 857.7L489.4 878.0L476.6 899.0L463.4 920.8L449.6 943.4L439.6 960.0M573.7 696.3L564.2 711.4L554.3 726.9L544.2 742.9L533.7 759.5L522.9 776.5L511.8 794.1L500.3 812.2L488.4 831.0L476.1 850.4L463.3 870.5L450.2 891.2L436.5 912.8L422.4 935.1L407.7 958.2L406.6 960.0M541.3 705.8L531.2 721.2L520.7 737.0L510.0 753.4L498.9 770.2L487.4 787.6L475.6 805.5L463.3 824.1L450.7 843.2L437.6 863.1L424.1 883.6L410.1 904.8L395.5 926.8L380.5 949.6L373.6 960.0M518.7 700.4L508.3 715.5L497.6 731.2L486.5 747.3L475.1 764.0L463.3 781.2L451.1 798.9L438.6 817.2L425.6 836.2L412.2 855.7L398.3 876.0L383.9 897.0L369.0 918.7L353.6 941.2L340.7 960.0M485.7 709.9L474.6 725.4L463.3 741.4L451.6 757.8L439.5 774.8L427.0 792.4L414.1 810.5L400.8 829.2L387.1 848.5L372.8 868.5L358.1 889.2L342.9 910.7L327.0 932.9L310.6 955.9L307.7 960.0M463.3 704.4L452.0 719.7L440.3 735.5L428.3 751.8L416.0 768.6L403.2 785.9L390.0 803.8L376.4 822.3L362.3 841.4L347.7 861.1L332.6 881.6L317.0 902.7L300.9 924.7L284.1 947.4L274.8 960.0M407.4 708.5L395.2 723.9L382.6 739.8L369.7 756.2L356.3 773.2L342.5 790.6L328.3 808.7L313.6 827.3L298.4 846.6L282.7 866.5L266.4 887.2L249.5 908.5L232.0 930.7L213.9 953.6L208.9 960.0M373.0 718.2L360.2 734.0L347.0 750.2L333.3 766.9L319.2 784.2L304.7 802.0L289.7 820.4L274.2 839.5L258.1 859.2L241.5 879.5L224.3 900.6L206.5 922.5L188.1 945.2L176.0 960.0M351.1 712.6L338.0 728.2L324.5 744.2L310.6 760.7L296.2 777.8L281.4 795.4L266.1 813.6L250.3 832.4L233.9 851.9L217.0 872.0L199.5 892.8L181.3 914.4L162.5 936.8L143.1 960.0L143.0 960.0M316.0 722.4L302.3 738.3L288.1 754.6L273.4 771.5L258.4 788.9L242.8 806.9L226.7 825.5L210.0 844.7L192.8 864.6L175.0 885.1L156.5 906.4L137.4 928.5L117.5 951.4L110.1 960.0M294.3 716.7L280.3 732.4L265.8 748.6L250.9 765.3L235.6 782.5L219.7 800.3L203.3 818.6L186.4 837.6L168.9 857.2L150.7 877.5L132.0 898.6L112.5 920.3L92.4 942.9L77.1 960.0M258.5 726.6L243.9 742.6L228.7 759.1L213.1 776.1L196.9 793.7L180.3 811.9L163.1 830.6L145.3 850.0L126.8 870.0L107.8 890.8L88.0 912.3L67.6 934.6L46.3 957.7L44.2 960.0M222.1 736.7L206.7 753.0L190.8 769.9L174.4 787.2L157.5 805.2L140.0 823.7L121.9 842.8L103.2 862.6L83.9 883.1L63.8 904.3L43.1 926.3L21.5 949.1L11.3 960.0M200.6 730.9L185.0 747.0L168.8 763.7L152.2 780.8L135.0 798.5L117.2 816.8L98.9 835.8L79.9 855.3L60.3 875.5L40.0 896.5L18.9 918.2L2.0 935.6M163.5 741.1L147.1 757.5L130.2 774.5L112.8 792.0L94.8 810.1L76.1 828.8L56.9 848.1L37.0 868.1L16.4 888.8L2.0 903.2M104.4 745.5L87.0 762.0L69.1 779.1L50.6 796.8L31.5 815.0L11.7 833.9L2.0 843.2M65.8 755.9L47.6 772.8L28.9 790.3L9.5 808.3L2.0 815.3M26.4 766.6L7.4 783.8L2.0 788.8M5.4 760.4L2.0 763.5" stroke="#5a5a5a" stroke-opacity="0.600" stroke-width="1.1" fill="none"/>
<path d="M1576.0 397.5L1562.5 395.7L1545.9 393.4L1529.3 391.2L1512.8 389.0L1496.5 386.7L1480.2 384.5L1464.1 382.4L1448.1 380.2L1432.1 378.0M1576.0 405.7L1566.8 404.4L1550.0 402.1L1533.2 399.8L1516.5 397.5L1499.9 395.3L1483.5 393.0L1467.1 390.8L1450.9 388.5L1434.7 386.3L1418.7 384.1L1402.8 381.9L1386.9 379.8L1371.2 377.6L1355.5 375.5L1340.0 373.3L1324.6 371.2L1309.2 369.1L1293.9 367.0L1278.8 365.0M1576.0 414.1L1571.3 413.4L1554.1 411.0L1537.1 408.7L1520.3 406.3L1503.5 404.0L1486.8 401.7L1470.2 399.4L1453.8 397.1L1437.4 394.8L1421.2 392.6L1405.1 390.4L1389.0 388.1L1373.1 385.9L1357.2 383.7L1341.5 381.5L1325.9 379.4L1310.3 377.2L1294.9 375.1L1279.6 372.9L1264.3 370.8L1249.2 368.7L1234.1 366.6L1219.1 364.6L1204.3 362.5L1189.5 360.5L1174.8 358.4L1160.2 356.4M1576.0 422.6L1575.8 422.6L1558.4 420.2L1541.2 417.7L1524.1 415.3L1507.1 413.0L1490.2 410.6L1473.4 408.2L1456.8 405.9L1440.2 403.6L1423.8 401.3L1407.4 399.0L1391.2 396.7L1375.0 394.4L1359.0 392.2L1343.1 389.9L1327.2 387.7L1311.5 385.5L1295.9 383.3L1280.3 381.1L1264.9 379.0L1249.6 376.8L1234.3 374.7L1219.2 372.6L1204.1 370.4L1189.2 368.3L1174.3 366.3L1159.6 364.2L1144.9 362.1L1130.3 360.1L1115.8 358.0L1101.4 356.0L1087.0 354.0L1072.8 352.0M1576.0 431.4L1562.9 429.5L1545.4 427.1L1528.0 424.6L1510.8 422.1L1493.7 419.7L1476.7 417.3L1459.8 414.9L1443.0 412.5L1426.4 410.1L1409.8 407.8L1393.4 405.5L1377.0 403.1L1360.8 400.8L1344.7 398.5L1328.6 396.3L1312.7 394.0L1296.9 391.8L1281.2 389.5L1265.5 387.3L1250.0 385.1L1234.6 382.9L1219.3 380.7L1204.0 378.6L1188.9 376.4L1173.9 374.3L1158.9 372.2L1144.1 370.1L1129.3 368.0L1114.6 365.9L1100.1 363.8L1085.6 361.7L1071.2 359.7L1056.8 357.7L1042.6 355.6L1028.5 353.6L1014.4 351.6L1000.5 349.7L986.6 347.7M1576.0 440.4L1567.4 439.1L1549.7 436.6L1532.1 434.1L1514.6 431.6L1497.3 429.1L1480.1 426.6L1462.9 424.1L1445.9 421.7L1429.0 419.3L1412.3 416.8L1395.6 414.4L1379.1 412.1L1362.6 409.7L1346.3 407.4L1330.0 405.0L1313.9 402.7L1297.9 400.4L1282.0 398.1L1266.2 395.8L1250.5 393.6L1234.8 391.3L1219.3 389.1L1203.9 386.9L1188.6 384.7L1173.4 382.5L1158.3 380.3L1143.2 378.2L1128.3 376.0L1113.5 373.9L1098.7 371.8L1084.1 369.7L1069.5 367.6L1055.0 365.5L1040.6 363.4L1026.3 361.4L1012.1 359.3L998.0 357.3L984.0 355.3L970.0 353.3L956.1 351.3L942.4 349.3L928.7 347.3M1576.0 449.6L1572.0 449.0L1554.1 446.4L1536.2 443.8L1518.5 441.2L1501.0 438.7L1483.5 436.1L1466.1 433.6L1448.9 431.1L1431.8 428.6L1414.8 426.1L1397.9 423.7L1381.2 421.2L1364.5 418.8L1347.9 416.4L1331.5 414.0L1315.2 411.6L1299.0 409.3L1282.8 406.9L1266.8 404.6L1250.9 402.3L1235.1 400.0L1219.4 397.7L1203.8 395.4L1188.3 393.2L1172.9 390.9L1157.6 388.7L1142.4 386.5L1127.3 384.3L1112.3 382.1L1097.4 379.9L1082.5 377.8L1067.8 375.6L1053.2 373.5L1038.6 371.4L1024.1 369.3L1009.8 367.2L995.5 365.1L981.3 363.0L967.2 361.0L953.2 358.9L939.2 356.9L925.4 354.9L911.6 352.9L897.9 350.9L884.3 348.9L870.8 347.0L857.4 345.0M1576.0 468.7L1563.2 466.8L1544.9 464.0L1526.7 461.3L1508.6 458.6L1490.6 455.9L1472.8 453.3L1455.1 450.6L1437.5 448.0L1420.1 445.4L1402.7 442.8L1385.5 440.3L1368.4 437.7L1351.4 435.2L1334.5 432.6L1317.8 430.1L1301.1 427.7L1284.6 425.2L1268.2 422.7L1251.9 420.3L1235.7 417.9L1219.6 415.5L1203.6 413.1L1187.7 410.7L1171.9 408.4L1156.2 406.0L1140.6 403.7L1125.2 401.4L1109.8 399.1L1094.5 396.8L1079.3 394.6L1064.3 392.3L1049.3 390.1L1034.4 387.9L1019.6 385.7L1004.9 383.5L990.3 381.3L975.8 379.1L961.3 377.0L947.0 374.8L932.8 372.7L918.6 370.6L904.5 368.5L890.6 366.4L876.7 364.3L862.9 362.3L849.1 360.2L835.5 358.2L821.9 356.2L808.5 354.2L795.1 352.2L781.7 350.2L768.5 348.2L755.4 346.2L742.3 344.3M1576.0 478.6L1568.0 477.4L1549.4 474.6L1530.9 471.8L1512.6 469.0L1494.3 466.2L1476.3 463.5L1458.3 460.8L1440.5 458.1L1422.8 455.4L1405.2 452.8L1387.8 450.1L1370.4 447.5L1353.2 444.9L1336.1 442.3L1319.1 439.8L1302.3 437.2L1285.5 434.7L1268.9 432.2L1252.4 429.7L1235.9 427.2L1219.6 424.7L1203.4 422.3L1187.4 419.9L1171.4 417.4L1155.5 415.0L1139.7 412.7L1124.1 410.3L1108.5 407.9L1093.0 405.6L1077.7 403.3L1062.4 401.0L1047.3 398.7L1032.2 396.4L1017.2 394.2L1002.4 391.9L987.6 389.7L972.9 387.5L958.3 385.3L943.8 383.1L929.4 380.9L915.1 378.7L900.9 376.6L886.7 374.4L872.7 372.3L858.7 370.2L844.9 368.1L831.1 366.0L817.4 364.0L803.8 361.9L790.2 359.9L776.8 357.8L763.4 355.8L750.1 353.8L736.9 351.8L723.8 349.8L710.7 347.8L697.7 345.9M1576.0 488.7L1572.9 488.3L1554.0 485.4L1535.2 482.5L1516.6 479.7L1498.2 476.8L1479.8 474.0L1461.6 471.2L1443.5 468.5L1425.6 465.7L1407.8 463.0L1390.1 460.3L1372.5 457.6L1355.1 454.9L1337.7 452.3L1320.5 449.6L1303.4 447.0L1286.5 444.4L1269.6 441.9L1252.9 439.3L1236.2 436.7L1219.7 434.2L1203.3 431.7L1187.0 429.2L1170.8 426.7L1154.8 424.3L1138.8 421.8L1122.9 419.4L1107.2 417.0L1091.5 414.6L1076.0 412.2L1060.6 409.9L1045.2 407.5L1030.0 405.2L1014.8 402.9L999.8 400.6L984.8 398.3L970.0 396.0L955.2 393.7L940.6 391.5L926.0 389.3L911.5 387.0L897.1 384.8L882.8 382.7L868.6 380.5L854.5 378.3L840.5 376.2L826.6 374.0L812.7 371.9L799.0 369.8L785.3 367.7L771.7 365.6L758.2 363.6L744.7 361.5L731.4 359.5L718.1 357.4L704.9 355.4L691.8 353.4L678.8 351.4L665.9 349.4L653.0 347.5M1576.0 499.2L1558.7 496.5L1539.7 493.5L1520.8 490.6L1502.1 487.7L1483.5 484.8L1465.0 482.0L1446.7 479.1L1428.5 476.3L1410.4 473.5L1392.5 470.7L1374.6 468.0L1356.9 465.2L1339.4 462.5L1321.9 459.8L1304.6 457.1L1287.4 454.4L1270.3 451.8L1253.4 449.2L1236.5 446.5L1219.8 443.9L1203.2 441.4L1186.7 438.8L1170.3 436.3L1154.0 433.7L1137.9 431.2L1121.8 428.7L1105.8 426.3L1090.0 423.8L1074.3 421.4L1058.6 419.0L1043.1 416.5L1027.7 414.2L1012.4 411.8L997.1 409.4L982.0 407.1L967.0 404.7L952.0 402.4L937.2 400.1L922.5 397.8L907.8 395.6L893.3 393.3L878.8 391.1L864.5 388.8L850.2 386.6L836.0 384.4L821.9 382.3L807.9 380.1L794.0 377.9L780.2 375.8L766.5 373.7L752.8 371.5L739.2 369.4L725.8 367.3L712.4 365.3L699.0 363.2L685.8 361.1L672.6 359.1L659.6 357.1L646.6 355.1L633.6 353.1L620.8 351.1L608.0 349.1M1394.9 481.4L1376.8 478.6L1358.9 475.8L1341.1 473.0L1323.4 470.2L1305.8 467.4L1288.4 464.7L1271.1 462.0L1253.9 459.3L1236.8 456.6L1219.9 453.9L1203.0 451.3L1186.3 448.7L1169.7 446.0L1153.2 443.5L1136.9 440.9L1120.6 438.3L1104.5 435.8L1088.4 433.3L1072.5 430.8L1056.7 428.3L1040.9 425.8L1025.3 423.4L1009.8 420.9L994.4 418.5L979.1 416.1L963.9 413.7L948.8 411.3L933.8 409.0L918.9 406.6L904.1 404.3L889.4 402.0L874.7 399.7L860.2 397.4L845.8 395.2L831.5 392.9L817.2 390.7L803.1 388.4L789.0 386.2L775.0 384.0L761.1 381.8L747.3 379.7L733.6 377.5L720.0 375.4L706.4 373.3L693.0 371.1L679.6 369.0L666.3 367.0L653.1 364.9L640.0 362.8L626.9 360.8L614.0 358.7L601.1 356.7L588.3 354.7L575.5 352.7L562.9 350.7M1220.0 464.2L1202.9 461.5L1186.0 458.8L1169.2 456.1L1152.5 453.4L1135.9 450.8L1119.4 448.2L1103.0 445.6L1086.8 443.0L1070.7 440.4L1054.6 437.9L1038.7 435.3L1022.9 432.8L1007.2 430.3L991.6 427.8L976.1 425.3L960.7 422.9L945.5 420.5L930.3 418.0L915.2 415.6L900.2 413.3L885.3 410.9L870.5 408.5L855.9 406.2L841.3 403.9L826.8 401.6L812.4 399.3L798.0 397.0L783.8 394.7L769.7 392.5L755.7 390.2L741.7 388.0L727.9 385.8L714.1 383.6L700.4 381.4L686.8 379.3L673.3 377.1L659.9 375.0L646.5 372.9L633.2 370.8L620.1 368.7L607.0 366.6L593.9 364.5L581.0 362.4L568.1 360.4L555.4 358.4L542.7 356.3L530.0 354.3L517.5 352.3M1101.6 455.6L1085.1 452.9L1068.8 450.3L1052.6 447.7L1036.4 445.1L1020.4 442.5L1004.5 439.9L988.8 437.4L973.1 434.8L957.5 432.3L942.0 429.8L926.7 427.4L911.4 424.9L896.3 422.4L881.2 420.0L866.2 417.6L851.4 415.2L836.6 412.8L822.0 410.5L807.4 408.1L792.9 405.8L778.5 403.4L764.3 401.1L750.1 398.8L736.0 396.6L722.0 394.3L708.0 392.1L694.2 389.8L680.5 387.6L666.8 385.4L653.2 383.2L639.7 381.0L626.3 378.9L613.0 376.7L599.8 374.6L586.6 372.5L573.6 370.4L560.6 368.3L547.7 366.2L534.9 364.1L522.1 362.1L509.4 360.0L496.8 358.0L484.3 356.0L471.9 353.9M1017.9 452.4L1001.8 449.8L985.8 447.2L969.9 444.6L954.2 442.0L938.5 439.4L923.0 436.9L907.5 434.4L892.2 431.9L877.0 429.4L861.8 426.9L846.8 424.4L831.9 422.0L817.0 419.6L802.3 417.1L787.7 414.8L773.1 412.4L758.7 410.0L744.3 407.7L730.1 405.3L715.9 403.0L701.8 400.7L687.9 398.4L674.0 396.1L660.2 393.9L646.4 391.6L632.8 389.4L619.3 387.2L605.8 385.0L592.5 382.8L579.2 380.6L566.0 378.5L552.9 376.3L539.8 374.2L526.9 372.1L514.0 370.0L501.2 367.9L488.5 365.8L475.8 363.7L463.3 361.7L450.8 359.6L438.4 357.6L426.1 355.6M934.9 449.3L919.2 446.7L903.6 444.1L888.0 441.5L872.6 439.0L857.3 436.4L842.1 433.9L827.0 431.4L812.0 428.9L797.1 426.4L782.3 424.0L767.6 421.5L753.0 419.1L738.4 416.7L724.0 414.3L709.7 411.9L695.5 409.6L681.3 407.2L667.3 404.9L653.4 402.6L639.5 400.3L625.7 398.0L612.0 395.7L598.5 393.5L585.0 391.2L571.5 389.0L558.2 386.8L544.9 384.6L531.8 382.4L518.7 380.2L505.7 378.1L492.8 375.9L479.9 373.8L467.2 371.7L454.5 369.6L441.9 367.5L429.4 365.4L416.9 363.3L404.6 361.3L392.3 359.3M786.2 445.7L771.1 443.1L756.0 440.6L741.1 438.0L726.2 435.5L711.5 432.9L696.8 430.4L682.3 428.0L667.8 425.5L653.5 423.0L639.2 420.6L625.1 418.2L611.0 415.8L597.0 413.4L583.2 411.0L569.4 408.7L555.7 406.4L542.1 404.0L528.5 401.7L515.1 399.4L501.7 397.1L488.5 394.9L475.3 392.6L462.2 390.4L449.2 388.2L436.3 386.0L423.4 383.8L410.7 381.6L398.0 379.4L385.4 377.3L372.8 375.1L360.4 373.0L348.0 370.9L335.7 368.8L323.5 366.7L311.4 364.6M734.9 447.8L719.9 445.2L705.0 442.6L690.2 440.1L675.4 437.5L660.8 435.0L646.3 432.5L631.9 430.0L617.6 427.5L603.4 425.0L589.2 422.6L575.2 420.2L561.3 417.7L547.4 415.3L533.7 413.0L520.0 410.6L506.4 408.3L493.0 405.9L479.6 403.6L466.3 401.3L453.0 399.0L439.9 396.7L426.8 394.5L413.9 392.2L401.0 390.0L388.2 387.8L375.4 385.6L362.8 383.4L350.2 381.2L337.7 379.0L325.3 376.9L313.0 374.7L300.8 372.6L288.6 370.5L276.5 368.4M668.4 447.3L653.6 444.7L639.0 442.1L624.4 439.6L609.9 437.0L595.5 434.5L581.3 432.0L567.1 429.5L553.0 427.0L539.0 424.6L525.1 422.1L511.3 419.7L497.6 417.3L484.0 414.9L470.4 412.5L457.0 410.2L443.6 407.8L430.3 405.5L417.2 403.2L404.1 400.9L391.0 398.6L378.1 396.3L365.3 394.0L352.5 391.8L339.8 389.6L327.2 387.4L314.7 385.2L302.2 383.0L289.9 380.8L277.6 378.6L265.4 376.5L253.2 374.4L241.2 372.2L229.2 370.1M616.7 449.4L602.0 446.8L587.5 444.2L573.1 441.7L558.7 439.1L544.5 436.6L530.3 434.0L516.3 431.5L502.3 429.0L488.5 426.6L474.7 424.1L461.0 421.7L447.5 419.3L434.0 416.8L420.6 414.5L407.2 412.1L394.0 409.7L380.9 407.4L367.8 405.0L354.8 402.7L342.0 400.4L329.1 398.1L316.4 395.9L303.8 393.6L291.2 391.4L278.7 389.2L266.3 386.9L254.0 384.7L241.8 382.6L229.6 380.4L217.5 378.2L205.5 376.1L193.6 374.0M564.7 451.6L550.2 449.0L535.8 446.3L521.5 443.8L507.3 441.2L493.2 438.6L479.2 436.1L465.2 433.6L451.4 431.1L437.7 428.6L424.1 426.1L410.5 423.7L397.1 421.2L383.7 418.8L370.4 416.4L357.3 414.0L344.2 411.6L331.1 409.3L318.2 406.9L305.4 404.6L292.6 402.3L279.9 400.0L267.3 397.7L254.8 395.5L242.4 393.2L230.0 391.0L217.8 388.7L205.6 386.5L193.4 384.3L181.4 382.2L169.4 380.0L157.5 377.8M512.3 453.7L498.0 451.1L483.7 448.5L469.6 445.9L455.5 443.3L441.6 440.7L427.7 438.1L413.9 435.6L400.2 433.1L386.6 430.6L373.2 428.1L359.7 425.6L346.4 423.2L333.2 420.8L320.1 418.3L307.0 415.9L294.0 413.6L281.2 411.2L268.4 408.8L255.7 406.5L243.0 404.2L230.5 401.9L218.0 399.6L205.6 397.3L193.3 395.0L181.1 392.8L168.9 390.6L156.9 388.3L144.9 386.1L132.9 383.9L121.1 381.8M474.1 458.5L459.8 455.9L445.5 453.2L431.4 450.6L417.4 448.0L403.5 445.4L389.7 442.8L376.0 440.2L362.3 437.7L348.8 435.1L335.3 432.6L322.0 430.1L308.7 427.7L295.5 425.2L282.4 422.7L269.4 420.3L256.5 417.9L243.7 415.5L230.9 413.1L218.3 410.8L205.7 408.4L193.2 406.1L180.8 403.7L168.4 401.4L156.2 399.2L144.0 396.9L131.9 394.6L119.9 392.4L107.9 390.1L96.0 387.9L84.2 385.7M421.0 460.7L406.9 458.0L392.8 455.4L378.8 452.7L365.0 450.1L351.2 447.5L337.5 444.9L323.9 442.3L310.4 439.7L297.0 437.2L283.7 434.7L270.5 432.2L257.4 429.7L244.3 427.2L231.4 424.7L218.5 422.3L205.7 419.9L193.0 417.4L180.4 415.1L167.9 412.7L155.4 410.3L143.1 408.0L130.8 405.6L118.6 403.3L106.5 401.0L94.4 398.7L82.4 396.5L70.5 394.2L58.7 392.0L47.0 389.7M367.7 462.9L353.7 460.2L339.8 457.5L326.0 454.9L312.3 452.2L298.6 449.6L285.1 447.0L271.6 444.4L258.3 441.8L245.0 439.3L231.9 436.7L218.8 434.2L205.8 431.7L192.9 429.2L180.1 426.7L167.4 424.3L154.7 421.8L142.1 419.4L129.7 417.0L117.3 414.6L105.0 412.2L92.7 409.9L80.6 407.5L68.5 405.2L56.5 402.9L44.6 400.6L32.7 398.3L21.0 396.0L9.3 393.8M287.9 472.9L274.0 470.1L260.2 467.3L246.5 464.6L232.9 461.9L219.4 459.2L205.9 456.5L192.6 453.9L179.4 451.2L166.2 448.6L153.1 446.0L140.2 443.4L127.3 440.8L114.5 438.3L101.8 435.8L89.2 433.2L76.7 430.7L64.2 428.3L51.8 425.8L39.6 423.3L27.4 420.9L15.2 418.5L3.2 416.1L2.0 415.9M233.4 475.1L219.7 472.3L206.0 469.6L192.4 466.8L179.0 464.1L165.6 461.4L152.3 458.7L139.2 456.0L126.1 453.4L113.1 450.7L100.2 448.1L87.3 445.5L74.6 442.9L62.0 440.4L49.4 437.8L36.9 435.3L24.5 432.8L12.2 430.3L2.0 428.2M192.3 480.2L178.6 477.4L165.0 474.6L151.5 471.8L138.1 469.1L124.8 466.3L111.6 463.6L98.4 460.9L85.4 458.2L72.5 455.5L59.6 452.9L46.9 450.2L34.2 447.6L21.6 445.0L9.1 442.4L2.0 441.0M150.6 485.4L137.0 482.5L123.4 479.7L110.0 476.9L96.7 474.1L83.4 471.3L70.3 468.5L57.2 465.8L44.3 463.1L31.4 460.4L18.6 457.7L5.9 455.0L2.0 454.2M108.4 490.6L94.8 487.7L81.4 484.9L68.0 482.0L54.7 479.2L41.6 476.3L28.5 473.5L15.5 470.8L2.6 468.0L2.0 467.9M65.7 495.9L52.2 493.0L38.8 490.1L25.5 487.2L12.2 484.3L2.0 482.1M22.3 501.3L8.9 498.3L2.0 496.8" stroke="#5a5a5a" stroke-opacity="0.120" stroke-width="1.1" fill="none"/>
<path d="M1576.0 509.9L1563.6 507.9L1544.3 504.9L1525.1 501.9L1506.1 498.9L1487.2 495.9L1468.5 493.0L1449.9 490.1L1431.4 487.2L1413.1 484.3L1394.9 481.4M1576.0 520.9L1568.6 519.7L1549.0 516.6L1529.6 513.5L1510.3 510.4L1491.1 507.4L1472.1 504.3L1453.2 501.3L1434.5 498.3L1415.9 495.4L1397.4 492.4L1379.1 489.5L1360.9 486.6L1342.8 483.7L1324.9 480.9L1307.1 478.1L1289.4 475.2L1271.9 472.4L1254.4 469.7L1237.1 466.9L1220.0 464.2M1576.0 532.2L1573.8 531.8L1553.9 528.6L1534.1 525.4L1514.5 522.2L1495.1 519.1L1475.8 516.0L1456.6 512.9L1437.6 509.8L1418.7 506.8L1400.0 503.7L1381.4 500.7L1363.0 497.8L1344.6 494.8L1326.4 491.9L1308.4 489.0L1290.5 486.1L1272.7 483.2L1255.0 480.3L1237.5 477.5L1220.1 474.7L1202.8 471.9L1185.6 469.1L1168.6 466.4L1151.6 463.7L1134.8 460.9L1118.1 458.3L1101.6 455.6M1576.0 543.7L1558.9 540.9L1538.8 537.7L1518.9 534.4L1499.2 531.2L1479.6 528.0L1460.1 524.8L1440.8 521.6L1421.7 518.5L1402.7 515.4L1383.8 512.3L1365.1 509.2L1346.5 506.2L1328.0 503.2L1309.7 500.2L1291.5 497.2L1273.5 494.3L1255.6 491.3L1237.8 488.4L1220.1 485.5L1202.6 482.7L1185.2 479.8L1168.0 477.0L1150.8 474.2L1133.8 471.4L1116.9 468.6L1100.1 465.9L1083.4 463.1L1066.9 460.4L1050.4 457.7L1034.1 455.1L1017.9 452.4M1576.0 555.7L1564.0 553.7L1543.7 550.3L1523.4 546.9L1503.4 543.6L1483.5 540.3L1463.7 537.0L1444.1 533.8L1424.7 530.6L1405.4 527.4L1386.2 524.2L1367.2 521.0L1348.4 517.9L1329.7 514.8L1311.1 511.7L1292.6 508.7L1274.3 505.6L1256.2 502.6L1238.1 499.6L1220.2 496.6L1202.5 493.7L1184.8 490.8L1167.3 487.9L1149.9 485.0L1132.7 482.1L1115.6 479.3L1098.5 476.4L1081.7 473.6L1064.9 470.9L1048.2 468.1L1031.7 465.4L1015.3 462.6L999.0 459.9L982.8 457.2L966.7 454.6L950.8 451.9L934.9 449.3M1576.0 580.5L1574.8 580.3L1553.8 576.7L1532.9 573.2L1512.2 569.6L1491.7 566.1L1471.3 562.6L1451.1 559.2L1431.0 555.8L1411.1 552.4L1391.4 549.0L1371.8 545.7L1352.4 542.3L1333.1 539.1L1313.9 535.8L1294.9 532.5L1276.1 529.3L1257.4 526.1L1238.9 523.0L1220.4 519.8L1202.2 516.7L1184.0 513.6L1166.0 510.5L1148.2 507.5L1130.4 504.5L1112.8 501.5L1095.3 498.5L1078.0 495.5L1060.8 492.6L1043.7 489.7L1026.7 486.8L1009.9 483.9L993.1 481.0L976.5 478.2L960.0 475.4L943.7 472.6L927.4 469.8L911.3 467.1L895.3 464.3L879.4 461.6L863.6 458.9L847.9 456.2L832.3 453.6L816.8 450.9L801.5 448.3L786.2 445.7M1576.0 593.5L1559.1 590.6L1537.8 586.9L1516.8 583.2L1495.9 579.6L1475.2 576.0L1454.7 572.5L1434.3 569.0L1414.1 565.5L1394.1 562.0L1374.2 558.5L1354.4 555.1L1334.8 551.7L1315.4 548.4L1296.2 545.0L1277.0 541.7L1258.1 538.4L1239.2 535.2L1220.5 531.9L1202.0 528.7L1183.6 525.5L1165.3 522.4L1147.2 519.2L1129.2 516.1L1111.4 513.0L1093.7 510.0L1076.1 506.9L1058.6 503.9L1041.3 500.9L1024.1 497.9L1007.0 495.0L990.1 492.0L973.3 489.1L956.6 486.2L940.0 483.3L923.5 480.5L907.2 477.7L891.0 474.8L874.9 472.1L858.9 469.3L843.0 466.5L827.2 463.8L811.6 461.1L796.0 458.4L780.6 455.7L765.2 453.1L750.0 450.4L734.9 447.8M1396.8 575.4L1376.6 571.8L1356.6 568.3L1336.7 564.8L1317.0 561.3L1297.4 557.9L1278.0 554.5L1258.7 551.1L1239.6 547.7L1220.6 544.4L1201.8 541.1L1183.2 537.8L1164.6 534.5L1146.3 531.3L1128.0 528.1L1109.9 524.9L1091.9 521.8L1074.1 518.6L1056.4 515.5L1038.9 512.4L1021.4 509.4L1004.1 506.3L987.0 503.3L969.9 500.3L953.0 497.3L936.2 494.4L919.5 491.5L903.0 488.6L886.5 485.7L870.2 482.8L854.0 479.9L837.9 477.1L822.0 474.3L806.1 471.5L790.4 468.8L774.8 466.0L759.3 463.3L743.8 460.6L728.6 457.9L713.4 455.2L698.3 452.6L683.3 449.9L668.4 447.3M1220.8 557.2L1201.7 553.8L1182.7 550.4L1163.9 547.1L1145.3 543.8L1126.8 540.5L1108.4 537.2L1090.2 533.9L1072.1 530.7L1054.2 527.5L1036.3 524.3L1018.7 521.2L1001.1 518.0L983.7 514.9L966.5 511.9L949.3 508.8L932.3 505.8L915.4 502.7L898.6 499.7L882.0 496.8L865.5 493.8L849.1 490.9L832.8 488.0L816.6 485.1L800.6 482.3L784.6 479.4L768.8 476.6L753.1 473.8L737.5 471.0L722.0 468.2L706.7 465.5L691.4 462.8L676.2 460.1L661.2 457.4L646.3 454.7L631.4 452.1L616.7 449.4M1088.4 546.4L1070.0 543.1L1051.8 539.8L1033.8 536.5L1015.8 533.3L998.1 530.1L980.4 526.9L962.9 523.7L945.5 520.6L928.3 517.4L911.2 514.3L894.2 511.3L877.3 508.2L860.6 505.2L844.0 502.2L827.5 499.2L811.1 496.2L794.8 493.3L778.7 490.4L762.7 487.5L746.8 484.6L731.0 481.7L715.4 478.9L699.8 476.1L684.4 473.3L669.0 470.5L653.8 467.7L638.7 465.0L623.7 462.3L608.8 459.6L593.9 456.9L579.3 454.2L564.7 451.6M977.0 539.2L959.2 535.9L941.6 532.7L924.1 529.5L906.8 526.3L889.6 523.1L872.5 520.0L855.5 516.8L838.7 513.8L822.0 510.7L805.4 507.6L789.0 504.6L772.6 501.6L756.4 498.6L740.3 495.7L724.3 492.7L708.5 489.8L692.7 486.9L677.1 484.0L661.6 481.2L646.2 478.3L630.9 475.5L615.7 472.7L600.6 470.0L585.6 467.2L570.8 464.5L556.0 461.8L541.4 459.1L526.8 456.4L512.3 453.7M902.3 538.6L884.9 535.3L867.5 532.1L850.4 528.9L833.3 525.7L816.4 522.5L799.6 519.4L782.9 516.3L766.4 513.2L750.0 510.1L733.7 507.0L717.5 504.0L701.4 501.0L685.5 498.0L669.7 495.1L654.0 492.2L638.4 489.2L622.9 486.4L607.5 483.5L592.3 480.6L577.1 477.8L562.1 475.0L547.1 472.2L532.3 469.4L517.6 466.7L503.0 464.0L488.5 461.2L474.1 458.5M827.7 537.9L810.6 534.7L793.6 531.4L776.7 528.2L759.9 525.1L743.3 521.9L726.8 518.8L710.4 515.7L694.2 512.6L678.0 509.5L662.0 506.5L646.1 503.5L630.3 500.5L614.7 497.5L599.1 494.5L583.7 491.6L568.4 488.7L553.1 485.8L538.0 482.9L523.0 480.1L508.2 477.3L493.4 474.5L478.7 471.7L464.1 468.9L449.7 466.2L435.3 463.4L421.0 460.7M753.3 537.3L736.5 534.1L719.7 530.8L703.1 527.6L686.7 524.5L670.3 521.3L654.1 518.2L638.0 515.1L622.1 512.0L606.2 508.9L590.5 505.9L574.8 502.9L559.3 499.9L544.0 496.9L528.7 494.0L513.5 491.0L498.5 488.1L483.5 485.3L468.7 482.4L453.9 479.6L439.3 476.7L424.8 473.9L410.4 471.2L396.1 468.4L381.8 465.6L367.7 462.9M621.2 539.3L604.8 536.1L588.6 532.8L572.4 529.6L556.4 526.4L540.5 523.2L524.8 520.1L509.1 517.0L493.6 513.9L478.2 510.8L462.9 507.8L447.7 504.7L432.7 501.7L417.7 498.8L402.9 495.8L388.1 492.9L373.5 489.9L359.0 487.0L344.6 484.2L330.3 481.3L316.0 478.5L301.9 475.7L287.9 472.9M563.0 542.0L546.8 538.7L530.7 535.4L514.8 532.2L499.0 529.0L483.3 525.8L467.7 522.6L452.2 519.5L436.8 516.4L421.6 513.3L406.5 510.2L391.5 507.2L376.6 504.2L361.8 501.2L347.1 498.2L332.5 495.2L318.0 492.3L303.7 489.4L289.4 486.5L275.3 483.6L261.2 480.8L247.3 477.9L233.4 475.1M504.5 544.7L488.5 541.3L472.6 538.1L456.8 534.8L441.1 531.6L425.6 528.4L410.2 525.2L394.9 522.0L379.7 518.9L364.6 515.8L349.7 512.7L334.8 509.7L320.1 506.6L305.5 503.6L291.0 500.6L276.6 497.6L262.3 494.7L248.1 491.7L234.0 488.8L220.0 485.9L206.1 483.1L192.3 480.2M461.6 550.7L445.6 547.3L429.8 544.0L414.1 540.7L398.5 537.4L383.0 534.2L367.6 531.0L352.4 527.8L337.3 524.6L322.2 521.4L307.4 518.3L292.6 515.2L277.9 512.1L263.3 509.1L248.9 506.0L234.5 503.0L220.3 500.0L206.1 497.1L192.1 494.1L178.2 491.2L164.3 488.3L150.6 485.4M402.2 553.4L386.4 550.0L370.7 546.7L355.2 543.4L339.8 540.1L324.5 536.8L309.3 533.6L294.2 530.4L279.3 527.2L264.4 524.0L249.7 520.8L235.1 517.7L220.6 514.6L206.2 511.5L191.9 508.5L177.8 505.5L163.7 502.4L149.7 499.5L135.8 496.5L122.1 493.6L108.4 490.6M342.4 556.2L326.8 552.8L311.3 549.4L296.0 546.1L280.7 542.7L265.6 539.5L250.6 536.2L235.7 533.0L221.0 529.7L206.3 526.5L191.8 523.4L177.3 520.2L163.0 517.1L148.8 514.0L134.7 511.0L120.7 507.9L106.8 504.9L93.0 501.9L79.3 498.9L65.7 495.9M297.7 562.4L282.2 558.9L266.8 555.5L251.5 552.1L236.4 548.8L221.3 545.4L206.4 542.1L191.6 538.8L176.9 535.6L162.3 532.3L147.8 529.1L133.4 525.9L119.2 522.8L105.0 519.6L91.0 516.5L77.1 513.4L63.2 510.4L49.5 507.3L35.9 504.3L22.3 501.3M252.5 568.7L237.0 565.2L221.7 561.7L206.5 558.3L191.4 554.9L176.4 551.5L161.5 548.1L146.8 544.8L132.2 541.5L117.7 538.2L103.2 534.9L89.0 531.7L74.8 528.5L60.7 525.3L46.7 522.2L32.9 519.0L19.1 515.9L5.4 512.9L2.0 512.1M206.6 575.0L191.2 571.5L175.9 568.0L160.8 564.5L145.7 561.0L130.8 557.6L116.1 554.2L101.4 550.8L86.8 547.5L72.4 544.1L58.1 540.8L43.9 537.6L29.8 534.3L15.8 531.1L2.0 527.9M97.5 584.4L82.4 580.8L67.4 577.2L52.5 573.7L37.8 570.1L23.2 566.6L8.7 563.2L2.0 561.6M49.6 591.1L34.6 587.4L19.7 583.7L4.9 580.1L2.0 579.4" stroke="#5a5a5a" stroke-opacity="0.240" stroke-width="1.1" fill="none"/>
<path d="M1576.0 606.8L1564.5 604.8L1542.9 601.0L1521.6 597.3L1500.3 593.5L1479.3 589.9L1458.4 586.2L1437.7 582.5L1417.2 578.9L1396.8 575.4M1576.0 620.6L1570.2 619.6L1548.2 615.6L1526.5 611.8L1504.9 607.9L1483.5 604.1L1462.3 600.3L1441.2 596.6L1420.4 592.8L1399.7 589.1L1379.1 585.5L1358.8 581.8L1338.6 578.2L1318.5 574.7L1298.7 571.1L1279.0 567.6L1259.4 564.1L1240.0 560.7L1220.8 557.2M1576.0 634.8L1576.0 634.8L1553.6 630.7L1531.5 626.7L1509.6 622.7L1487.8 618.8L1466.2 614.9L1444.8 611.0L1423.6 607.2L1402.6 603.4L1381.7 599.6L1361.0 595.8L1340.5 592.1L1320.2 588.4L1300.0 584.8L1280.0 581.1L1260.1 577.5L1240.4 574.0L1220.9 570.4L1201.5 566.9L1182.3 563.4L1163.2 560.0L1144.2 556.6L1125.5 553.2L1106.8 549.8L1088.4 546.4M1576.0 649.4L1559.3 646.3L1536.7 642.2L1514.4 638.0L1492.3 634.0L1470.3 629.9L1448.6 625.9L1427.0 622.0L1405.6 618.0L1384.4 614.1L1363.4 610.3L1342.5 606.4L1321.9 602.6L1301.3 598.9L1281.0 595.1L1260.8 591.4L1240.8 587.7L1221.0 584.1L1201.3 580.4L1181.8 576.9L1162.4 573.3L1143.2 569.8L1124.1 566.3L1105.2 562.8L1086.5 559.3L1067.9 555.9L1049.4 552.5L1031.1 549.1L1012.9 545.8L994.9 542.5L977.0 539.2M1576.0 664.4L1565.1 662.4L1542.1 658.1L1519.4 653.9L1496.9 649.7L1474.6 645.5L1452.4 641.4L1430.5 637.3L1408.8 633.2L1387.2 629.2L1365.8 625.2L1344.6 621.2L1323.6 617.3L1302.7 613.4L1282.1 609.5L1261.6 605.7L1241.3 601.9L1221.1 598.1L1201.1 594.4L1181.3 590.7L1161.6 587.0L1142.1 583.4L1122.8 579.8L1103.6 576.2L1084.5 572.6L1065.7 569.1L1046.9 565.6L1028.4 562.1L1009.9 558.7L991.6 555.3L973.5 551.9L955.5 548.5L937.6 545.2L919.9 541.8L902.3 538.6M1576.0 680.0L1571.1 679.0L1547.7 674.6L1524.6 670.2L1501.7 665.9L1479.0 661.6L1456.4 657.3L1434.1 653.0L1412.0 648.8L1390.1 644.7L1368.3 640.5L1346.7 636.5L1325.4 632.4L1304.2 628.4L1283.2 624.4L1262.4 620.4L1241.7 616.5L1221.2 612.6L1200.9 608.8L1180.8 605.0L1160.8 601.2L1141.0 597.4L1121.4 593.7L1101.9 590.0L1082.6 586.3L1063.4 582.7L1044.4 579.1L1025.5 575.5L1006.8 571.9L988.3 568.4L969.9 564.9L951.6 561.4L933.5 558.0L915.5 554.6L897.7 551.2L880.0 547.9L862.4 544.5L845.0 541.2L827.7 537.9M1370.9 656.5L1349.0 652.2L1327.2 648.0L1305.7 643.9L1284.3 639.8L1263.2 635.7L1242.2 631.6L1221.3 627.6L1200.7 623.6L1180.3 619.7L1160.0 615.8L1139.8 611.9L1119.9 608.0L1100.1 604.2L1080.5 600.4L1061.0 596.7L1041.7 593.0L1022.6 589.3L1003.6 585.6L984.8 582.0L966.1 578.4L947.6 574.8L929.2 571.2L911.0 567.7L892.9 564.2L875.0 560.8L857.2 557.3L839.5 553.9L822.0 550.6L804.6 547.2L787.4 543.9L770.3 540.6L753.3 537.3M1056.1 626.0L1036.2 622.1L1016.5 618.1L996.9 614.2L977.5 610.4L958.3 606.5L939.2 602.7L920.3 599.0L901.6 595.2L883.0 591.5L864.5 587.8L846.2 584.2L828.1 580.6L810.0 577.0L792.2 573.4L774.5 569.9L756.9 566.4L739.5 562.9L722.2 559.5L705.0 556.0L688.0 552.6L671.1 549.3L654.3 545.9L637.7 542.6L621.2 539.3M954.2 621.3L934.9 617.4L915.7 613.5L896.6 609.6L877.7 605.8L859.0 602.0L840.5 598.2L822.0 594.5L803.8 590.8L785.7 587.1L767.7 583.5L749.9 579.9L732.2 576.3L714.7 572.7L697.3 569.2L680.0 565.7L662.9 562.2L645.9 558.8L629.1 555.4L612.4 552.0L595.8 548.6L579.3 545.3L563.0 542.0M853.4 616.6L834.5 612.7L815.8 608.9L797.3 605.1L778.9 601.3L760.7 597.5L742.7 593.8L724.7 590.1L707.0 586.4L689.3 582.8L671.9 579.2L654.5 575.6L637.3 572.1L620.2 568.5L603.3 565.0L586.5 561.6L569.8 558.1L553.3 554.7L536.9 551.3L520.6 548.0L504.5 544.7M772.0 615.9L753.5 612.0L735.2 608.1L717.0 604.3L699.0 600.5L681.1 596.8L663.4 593.1L645.8 589.4L628.4 585.7L611.1 582.1L594.0 578.5L576.9 574.9L560.1 571.4L543.3 567.9L526.7 564.4L510.2 560.9L493.9 557.5L477.7 554.1L461.6 550.7M709.1 619.0L690.8 615.1L672.7 611.2L654.7 607.4L636.9 603.6L619.2 599.8L601.7 596.1L584.3 592.4L567.1 588.7L550.0 585.0L533.0 581.4L516.2 577.8L499.5 574.2L483.0 570.7L466.5 567.2L450.3 563.7L434.1 560.2L418.1 556.8L402.2 553.4M645.7 622.2L627.7 618.3L609.8 614.4L592.0 610.5L574.4 606.7L556.9 602.9L539.6 599.1L522.4 595.4L505.4 591.6L488.5 588.0L471.7 584.3L455.1 580.7L438.6 577.1L422.2 573.5L406.0 570.0L389.9 566.5L373.9 563.0L358.1 559.6L342.4 556.2M564.1 621.4L546.4 617.5L528.9 613.6L511.5 609.8L494.2 605.9L477.1 602.1L460.1 598.4L443.3 594.6L426.6 590.9L410.0 587.3L393.6 583.6L377.3 580.0L361.1 576.4L345.1 572.9L329.2 569.3L313.4 565.8L297.7 562.4M517.8 628.6L500.1 624.6L482.7 620.7L465.3 616.7L448.1 612.9L431.1 609.0L414.1 605.2L397.4 601.4L380.7 597.6L364.2 593.9L347.9 590.2L331.7 586.6L315.6 582.9L299.6 579.3L283.8 575.7L268.1 572.2L252.5 568.7M453.2 631.8L435.7 627.8L418.5 623.8L401.3 619.9L384.3 616.0L367.5 612.1L350.8 608.3L334.2 604.5L317.8 600.7L301.5 596.9L285.4 593.2L269.3 589.5L253.5 585.8L237.7 582.2L222.1 578.6L206.6 575.0M339.7 642.5L322.6 638.4L305.6 634.3L288.8 630.3L272.1 626.3L255.6 622.3L239.1 618.4L222.9 614.5L206.7 610.6L190.7 606.8L174.9 603.0L159.1 599.2L143.5 595.5L128.1 591.8L112.7 588.1L97.5 584.4M290.6 650.0L273.6 645.8L256.7 641.7L239.9 637.6L223.3 633.5L206.8 629.5L190.5 625.5L174.3 621.5L158.3 617.6L142.4 613.7L126.6 609.9L110.9 606.0L95.4 602.3L80.0 598.5L64.7 594.8L49.6 591.1M223.8 653.4L206.9 649.2L190.3 645.0L173.8 640.9L157.4 636.8L141.1 632.7L125.0 628.7L109.1 624.7L93.2 620.8L77.6 616.9L62.0 613.0L46.6 609.1L31.3 605.3L16.1 601.5L2.0 598.0M173.2 661.0L156.4 656.8L139.9 652.5L123.4 648.4L107.1 644.2L91.0 640.1L75.0 636.0L59.1 632.0L43.4 627.9L27.8 624.0L12.3 620.0L2.0 617.4M121.8 668.8L105.1 664.5L88.7 660.2L72.3 655.9L56.1 651.7L40.1 647.5L24.2 643.4L8.4 639.3L2.0 637.6M69.5 676.7L53.0 672.3L36.6 668.0L20.4 663.6L4.3 659.4L2.0 658.7M16.5 684.8L2.0 680.8" stroke="#5a5a5a" stroke-opacity="0.360" stroke-width="1.1" fill="none"/>
<path d="M1576.0 696.0L1553.5 691.7L1530.0 687.1L1506.6 682.6L1483.5 678.2L1460.6 673.7L1437.8 669.4L1415.3 665.0L1393.0 660.7L1370.9 656.5M1576.0 729.7L1565.7 727.7L1541.2 722.8L1517.0 718.0L1493.0 713.2L1469.2 708.4L1445.7 703.7L1422.4 699.1L1399.2 694.5L1376.3 689.9L1353.6 685.4L1331.1 680.9L1308.8 676.4L1286.7 672.0L1264.8 667.7L1243.1 663.3L1221.6 659.0L1200.3 654.8L1179.2 650.6L1158.2 646.4L1137.4 642.3L1116.8 638.2L1096.4 634.1L1076.2 630.1L1056.1 626.0M1576.0 747.4L1572.1 746.6L1547.2 741.6L1522.5 736.6L1498.0 731.6L1473.8 726.7L1449.8 721.8L1426.1 717.0L1402.5 712.2L1379.2 707.5L1356.1 702.8L1333.2 698.2L1310.5 693.6L1288.0 689.0L1265.7 684.5L1243.6 680.0L1221.8 675.6L1200.1 671.2L1178.6 666.8L1157.3 662.5L1136.2 658.2L1115.2 654.0L1094.5 649.8L1073.9 645.6L1053.5 641.5L1033.3 637.4L1013.3 633.3L993.4 629.3L973.7 625.3L954.2 621.3M1576.0 765.7L1553.4 761.1L1528.2 755.9L1503.3 750.7L1478.6 745.6L1454.1 740.6L1429.9 735.6L1405.9 730.6L1382.1 725.7L1358.6 720.9L1335.3 716.1L1312.2 711.3L1289.3 706.6L1266.6 701.9L1244.2 697.3L1221.9 692.7L1199.8 688.1L1178.0 683.6L1156.3 679.1L1134.8 674.7L1113.6 670.3L1092.5 666.0L1071.6 661.7L1050.9 657.4L1030.3 653.1L1010.0 648.9L989.8 644.8L969.8 640.7L950.0 636.6L930.3 632.5L910.8 628.5L891.5 624.5L872.4 620.6L853.4 616.6M1290.7 724.8L1267.6 719.9L1244.7 715.1L1222.0 710.4L1199.6 705.7L1177.4 701.0L1155.3 696.4L1133.5 691.8L1111.9 687.2L1090.4 682.7L1069.2 678.3L1048.1 673.8L1027.2 669.5L1006.6 665.1L986.1 660.8L965.7 656.6L945.6 652.3L925.6 648.1L905.9 644.0L886.2 639.9L866.8 635.8L847.5 631.7L828.4 627.7L809.4 623.7L790.6 619.8L772.0 615.9M1110.1 704.7L1088.3 700.1L1066.7 695.5L1045.3 690.9L1024.0 686.3L1003.0 681.9L982.2 677.4L961.6 673.0L941.1 668.6L920.8 664.3L900.7 660.0L880.8 655.7L861.0 651.5L841.5 647.3L822.1 643.2L802.8 639.1L783.8 635.0L764.8 630.9L746.1 626.9L727.5 623.0L709.1 619.0M999.4 699.2L978.2 694.6L957.2 690.0L936.4 685.5L915.8 681.0L895.4 676.5L875.2 672.1L855.1 667.8L835.2 663.4L815.5 659.2L796.0 654.9L776.6 650.7L757.4 646.5L738.4 642.4L719.6 638.3L700.9 634.2L682.3 630.2L664.0 626.2L645.7 622.2M889.9 693.7L869.3 689.1L849.0 684.6L828.8 680.1L808.8 675.7L788.9 671.3L769.3 666.9L749.8 662.6L730.5 658.3L711.4 654.1L692.4 649.9L673.6 645.7L654.9 641.6L636.5 637.5L618.1 633.4L600.0 629.4L582.0 625.4L564.1 621.4M801.8 692.8L781.6 688.2L761.7 683.7L741.9 679.2L722.3 674.8L702.9 670.4L683.6 666.1L664.5 661.8L645.6 657.5L626.9 653.3L608.3 649.1L589.9 644.9L571.6 640.8L553.5 636.7L535.6 632.6L517.8 628.6M713.8 691.9L694.1 687.3L674.6 682.8L655.2 678.4L636.0 673.9L617.0 669.6L598.1 665.2L579.5 660.9L560.9 656.7L542.6 652.4L524.4 648.2L506.3 644.1L488.5 640.0L470.7 635.9L453.2 631.8M576.7 699.3L557.5 694.7L538.4 690.1L519.6 685.6L500.8 681.1L482.3 676.6L463.9 672.2L445.7 667.9L427.6 663.5L409.8 659.3L392.0 655.0L374.4 650.8L357.0 646.6L339.7 642.5M507.4 703.0L488.5 698.4L469.6 693.8L451.0 689.2L432.5 684.7L414.2 680.2L396.1 675.8L378.1 671.4L360.3 667.0L342.7 662.7L325.2 658.4L307.8 654.2L290.6 650.0M437.7 706.8L418.9 702.1L400.4 697.4L382.0 692.9L363.8 688.3L345.7 683.8L327.8 679.3L310.1 674.9L292.5 670.5L275.1 666.2L257.8 661.9L240.7 657.6L223.8 653.4M386.0 715.3L367.4 710.5L348.9 705.8L330.6 701.2L312.5 696.5L294.5 692.0L276.7 687.4L259.0 682.9L241.5 678.5L224.2 674.0L207.0 669.7L190.0 665.3L173.2 661.0M314.9 719.2L296.5 714.4L278.3 709.6L260.3 704.9L242.4 700.3L224.7 695.6L207.2 691.1L189.8 686.5L172.5 682.1L155.5 677.6L138.5 673.2L121.8 668.8M261.6 727.9L243.3 723.0L225.2 718.2L207.3 713.4L189.5 708.7L171.9 704.0L154.4 699.4L137.1 694.7L120.0 690.2L103.0 685.7L86.2 681.2L69.5 676.7M207.4 736.8L189.2 731.9L171.2 726.9L153.4 722.1L135.7 717.3L118.2 712.5L100.8 707.8L83.7 703.1L66.6 698.4L49.8 693.8L33.0 689.3L16.5 684.8M152.3 745.9L134.2 740.8L116.3 735.8L98.5 730.9L81.0 726.0L63.6 721.1L46.4 716.3L29.3 711.6L12.4 706.8L2.0 704.0M78.2 749.9L60.4 744.9L42.8 739.8L25.3 734.8L8.1 729.9L2.0 728.2" stroke="#5a5a5a" stroke-opacity="0.480" stroke-width="1.1" fill="none"/>
<path d="M1576.0 784.7L1559.8 781.3L1534.1 775.9L1508.7 770.5L1483.5 765.3L1458.6 760.0L1433.9 754.8L1409.4 749.7L1385.2 744.6L1361.2 739.6L1337.5 734.6L1314.0 729.7L1290.7 724.8M1576.0 804.3L1566.4 802.3L1540.2 796.7L1514.3 791.1L1488.6 785.6L1463.2 780.2L1438.0 774.8L1413.1 769.5L1388.4 764.2L1364.0 759.0L1339.8 753.8L1315.8 748.7L1292.1 743.6L1268.5 738.6L1245.3 733.6L1222.2 728.7L1199.4 723.8L1176.7 719.0L1154.3 714.2L1132.1 709.4L1110.1 704.7M1576.0 824.7L1573.3 824.1L1546.6 818.3L1520.1 812.5L1493.9 806.8L1468.0 801.2L1442.3 795.6L1416.9 790.0L1391.7 784.6L1366.8 779.1L1342.1 773.8L1317.7 768.5L1293.5 763.2L1269.6 758.0L1245.8 752.8L1222.4 747.7L1199.1 742.6L1176.1 737.6L1153.2 732.7L1130.6 727.7L1108.2 722.9L1086.1 718.0L1064.1 713.3L1042.3 708.5L1020.7 703.8L999.4 699.2M1576.0 845.8L1553.2 840.7L1526.1 834.7L1499.4 828.8L1472.9 822.9L1446.7 817.1L1420.8 811.4L1395.1 805.7L1369.7 800.0L1344.6 794.5L1319.7 789.0L1295.0 783.5L1270.6 778.1L1246.5 772.7L1222.5 767.4L1198.8 762.2L1175.4 757.0L1152.1 751.8L1129.1 746.7L1106.3 741.6L1083.8 736.6L1061.4 731.7L1039.2 726.8L1017.3 721.9L995.6 717.1L974.0 712.3L952.7 707.6L931.6 702.9L910.6 698.3L889.9 693.7M1576.0 867.7L1560.1 864.1L1532.4 857.8L1505.1 851.7L1478.1 845.6L1451.4 839.5L1424.9 833.5L1398.7 827.6L1372.8 821.8L1347.1 816.0L1321.7 810.2L1296.6 804.6L1271.7 798.9L1247.1 793.4L1222.7 787.9L1198.6 782.4L1174.7 777.0L1151.0 771.7L1127.6 766.4L1104.4 761.1L1081.4 755.9L1058.6 750.8L1036.1 745.7L1013.8 740.7L991.6 735.7L969.7 730.7L948.1 725.8L926.6 721.0L905.3 716.2L884.2 711.4L863.3 706.7L842.6 702.0L822.1 697.4L801.8 692.8M1576.0 890.4L1567.2 888.4L1539.0 881.9L1511.1 875.5L1483.5 869.1L1456.2 862.8L1429.1 856.6L1402.4 850.5L1375.9 844.4L1349.8 838.3L1323.9 832.4L1298.2 826.5L1272.8 820.6L1247.7 814.8L1222.9 809.1L1198.3 803.4L1173.9 797.8L1149.8 792.3L1125.9 786.8L1102.3 781.3L1078.9 776.0L1055.7 770.6L1032.8 765.3L1010.1 760.1L987.6 754.9L965.3 749.8L943.2 744.7L921.4 739.7L899.7 734.7L878.3 729.8L857.1 724.9L836.0 720.0L815.2 715.2L794.5 710.5L774.1 705.7L753.8 701.1L733.7 696.5L713.8 691.9M1576.0 938.7L1553.0 933.1L1523.8 926.2L1494.9 919.2L1466.4 912.4L1438.2 905.7L1410.3 899.0L1382.7 892.4L1355.4 885.8L1328.4 879.3L1301.7 872.9L1275.3 866.6L1249.1 860.4L1223.3 854.2L1197.7 848.0L1172.3 842.0L1147.3 836.0L1122.5 830.0L1098.0 824.1L1073.7 818.3L1049.6 812.6L1025.8 806.9L1002.3 801.2L979.0 795.6L955.9 790.1L933.0 784.6L910.4 779.2L888.0 773.8L865.8 768.5L843.9 763.3L822.1 758.1L800.6 752.9L779.2 747.8L758.1 742.7L737.2 737.7L716.5 732.7L695.9 727.8L675.6 722.9L655.5 718.1L635.5 713.3L615.7 708.6L596.1 703.9L576.7 699.3M1558.6 960.0L1530.5 953.1L1501.0 945.9L1471.8 938.8L1443.0 931.7L1414.5 924.8L1386.3 917.9L1358.4 911.1L1330.8 904.3L1303.5 897.6L1276.5 891.0L1249.9 884.5L1223.5 878.1L1197.3 871.7L1171.5 865.4L1146.0 859.1L1120.7 852.9L1095.6 846.8L1070.9 840.8L1046.4 834.8L1022.2 828.8L998.2 823.0L974.4 817.2L950.9 811.4L927.6 805.7L904.6 800.1L881.8 794.5L859.2 789.0L836.9 783.5L814.8 778.1L792.9 772.8L771.2 767.5L749.7 762.2L728.4 757.0L707.4 751.9L686.5 746.8L665.9 741.7L645.4 736.7L625.1 731.8L605.0 726.9L585.2 722.0L565.5 717.2L545.9 712.4L526.6 707.7L507.4 703.0M1452.1 960.0L1448.0 959.0L1418.8 951.7L1390.0 944.5L1361.5 937.4L1333.3 930.3L1305.4 923.4L1277.9 916.5L1250.6 909.7L1223.7 903.0L1197.0 896.3L1170.6 889.7L1144.6 883.2L1118.8 876.8L1093.3 870.4L1068.0 864.1L1043.0 857.9L1018.3 851.7L993.9 845.6L969.7 839.6L945.7 833.6L922.0 827.7L898.6 821.8L875.4 816.0L852.4 810.3L829.7 804.6L807.2 799.0L784.9 793.4L762.8 787.9L741.0 782.5L719.3 777.1L697.9 771.7L676.7 766.4L655.7 761.2L635.0 756.0L614.4 750.9L594.0 745.8L573.8 740.7L553.8 735.7L534.0 730.8L514.3 725.9L494.9 721.0L475.6 716.2L456.6 711.5L437.7 706.8M1345.7 960.0L1335.9 957.5L1307.4 950.2L1279.3 943.1L1251.4 936.0L1223.9 928.9L1196.7 922.0L1169.7 915.1L1143.1 908.4L1116.8 901.6L1090.8 895.0L1065.0 888.4L1039.5 881.9L1014.3 875.5L989.4 869.2L964.7 862.9L940.3 856.6L916.2 850.5L892.3 844.4L868.7 838.4L845.3 832.4L822.1 826.5L799.2 820.7L776.6 814.9L754.1 809.2L731.9 803.5L709.9 797.9L688.1 792.3L666.6 786.8L645.3 781.4L624.1 776.0L603.2 770.7L582.5 765.4L562.0 760.2L541.7 755.0L521.6 749.9L501.6 744.8L481.9 739.8L462.4 734.8L443.0 729.8L423.8 724.9L404.8 720.1L386.0 715.3M1239.3 960.0L1224.1 956.0L1196.3 948.8L1168.8 941.6L1141.6 934.6L1114.7 927.5L1088.2 920.6L1061.9 913.8L1035.9 907.0L1010.2 900.3L984.8 893.7L959.6 887.1L934.7 880.7L910.1 874.2L885.8 867.9L861.7 861.6L837.9 855.4L814.3 849.3L791.0 843.2L767.9 837.2L745.1 831.2L722.5 825.3L700.1 819.5L678.0 813.7L656.1 808.0L634.4 802.4L612.9 796.8L591.6 791.2L570.6 785.8L549.7 780.3L529.1 775.0L508.7 769.6L488.5 764.4L468.4 759.1L448.6 754.0L428.9 748.9L409.5 743.8L390.2 738.8L371.1 733.8L352.2 728.9L333.5 724.0L314.9 719.2M1132.9 960.0L1112.6 954.6L1085.4 947.4L1058.6 940.2L1032.1 933.1L1005.8 926.2L979.9 919.2L954.3 912.4L928.9 905.7L903.8 899.0L879.0 892.4L854.5 885.8L830.2 879.4L806.2 873.0L782.4 866.6L758.9 860.4L735.7 854.2L712.7 848.1L689.9 842.0L667.4 836.0L645.1 830.1L623.0 824.2L601.2 818.4L579.6 812.6L558.2 806.9L537.0 801.3L516.1 795.7L495.3 790.2L474.8 784.7L454.4 779.3L434.3 773.9L414.4 768.6L394.6 763.3L375.1 758.1L355.7 753.0L336.5 747.9L317.5 742.8L298.7 737.8L280.1 732.8L261.6 727.9M1026.5 960.0L1001.3 953.1L974.9 945.9L948.7 938.8L922.8 931.7L897.2 924.8L871.9 917.9L846.9 911.1L822.2 904.3L797.7 897.7L773.5 891.1L749.6 884.5L725.9 878.1L702.5 871.7L679.3 865.4L656.4 859.1L633.7 853.0L611.3 846.9L589.1 840.8L567.1 834.8L545.3 828.9L523.8 823.0L502.5 817.2L481.4 811.5L460.6 805.8L439.9 800.2L419.5 794.6L399.2 789.1L379.2 783.6L359.3 778.2L339.7 772.9L320.2 767.5L301.0 762.3L281.9 757.1L263.0 752.0L244.3 746.9L225.8 741.8L207.4 736.8M920.2 960.0L916.5 959.0L890.4 951.7L864.6 944.5L839.0 937.4L813.8 930.3L788.9 923.4L764.2 916.5L739.8 909.7L715.7 903.0L691.9 896.3L668.3 889.8L644.9 883.2L621.9 876.8L599.0 870.4L576.4 864.1L554.1 857.9L532.0 851.7L510.1 845.6L488.4 839.6L467.0 833.6L445.8 827.7L424.8 821.9L404.1 816.1L383.5 810.3L363.2 804.7L343.0 799.1L323.1 793.5L303.3 788.0L283.8 782.5L264.4 777.1L245.3 771.8L226.3 766.5L207.5 761.3L188.9 756.1L170.5 750.9L152.3 745.9M813.9 960.0L805.1 957.5L779.7 950.2L754.5 943.1L729.7 936.0L705.1 928.9L680.8 922.0L656.8 915.1L633.0 908.4L609.5 901.6L586.3 895.0L563.3 888.4L540.5 882.0L518.1 875.5L495.8 869.2L473.8 862.9L452.0 856.7L430.5 850.5L409.1 844.4L388.1 838.4L367.2 832.5L346.5 826.6L326.1 820.7L305.8 814.9L285.8 809.2L266.0 803.6L246.3 797.9L226.9 792.4L207.7 786.9L188.6 781.5L169.8 776.1L151.1 770.8L132.6 765.5L114.3 760.2L96.2 755.1L78.2 749.9M601.3 960.0L583.2 954.6L559.1 947.3L535.3 940.2L511.7 933.1L488.4 926.2L465.4 919.2L442.6 912.4L420.1 905.7L397.9 899.0L375.8 892.4L354.0 885.9L332.5 879.4L311.2 873.0L290.1 866.7L269.2 860.4L248.6 854.2L228.2 848.1L208.0 842.0L188.0 836.0L168.2 830.1L148.6 824.2L129.2 818.4L110.0 812.7L91.0 807.0L72.2 801.3L53.6 795.7L35.2 790.2L16.9 784.7L2.0 780.3M495.0 960.0L472.7 953.1L449.2 945.9L426.1 938.8L403.2 931.7L380.5 924.8L358.1 917.9L336.0 911.1L314.1 904.3L292.4 897.7L271.0 891.1L249.8 884.6L228.8 878.1L208.1 871.7L187.6 865.4L167.3 859.2L147.2 853.0L127.4 846.9L107.7 840.8L88.2 834.9L69.0 828.9L49.9 823.1L31.1 817.3L12.4 811.5L2.0 808.3M388.8 960.0L385.4 958.9L362.4 951.7L339.6 944.5L317.1 937.4L294.9 930.3L272.8 923.4L251.1 916.5L229.6 909.7L208.3 903.0L187.2 896.3L166.4 889.8L145.8 883.3L125.4 876.8L105.3 870.5L85.3 864.2L65.6 857.9L46.1 851.8L26.8 845.7L7.7 839.6L2.0 837.9M282.6 960.0L274.8 957.5L252.4 950.2L230.3 943.0L208.4 936.0L186.8 928.9L165.4 922.0L144.3 915.1L123.4 908.4L102.7 901.7L82.3 895.0L62.1 888.5L42.0 882.0L22.3 875.6L2.7 869.2L2.0 869.0M176.4 960.0L164.4 956.0L142.7 948.8L121.3 941.6L100.0 934.5L79.1 927.5L58.3 920.6L37.8 913.8L17.5 907.0L2.0 901.9M70.2 960.0L54.4 954.6L33.3 947.3L12.5 940.2L2.0 936.6" stroke="#5a5a5a" stroke-opacity="0.600" stroke-width="1.1" fill="none"/>
<path d="M1522.5 77.0L1524.0 78.9L1525.7 81.1L1527.6 83.4L1529.4 85.7L1531.2 88.1L1533.1 90.4L1535.0 92.8L1536.9 95.2L1538.9 97.7L1540.8 100.2L1542.8 102.7L1544.8 105.2L1546.9 107.8L1548.9 110.4L1551.0 113.0L1553.1 115.7L1555.3 118.4L1557.4 121.1L1559.6 123.9L1561.8 126.7L1564.1 129.5L1566.4 132.4L1568.7 135.3L1571.0 138.3L1573.4 141.3L1575.8 144.3L1576.0 144.5M1421.2 77.0L1421.5 77.5L1422.7 79.7L1423.9 82.0L1425.1 84.3L1426.3 86.6L1427.6 88.9L1428.8 91.3L1430.1 93.7L1431.4 96.1L1432.7 98.6L1434.0 101.1L1435.4 103.6L1436.7 106.2L1438.1 108.7L1439.5 111.4L1440.9 114.0L1442.3 116.7L1443.8 119.4L1445.2 122.1L1446.7 124.9L1448.2 127.7L1449.8 130.6L1451.3 133.5L1452.9 136.4L1454.4 139.4L1456.0 142.4L1457.7 145.4L1459.3 148.5L1461.0 151.6L1462.7 154.8L1464.4 158.0L1466.1 161.3L1467.9 164.6L1469.7 168.0L1471.5 171.4L1473.3 174.8L1475.2 178.3L1477.1 181.9L1479.0 185.5L1480.9 189.1L1482.9 192.8L1484.9 196.6L1487.0 200.4L1489.0 204.3L1491.1 208.2L1493.2 212.2L1495.4 216.3L1497.6 220.4L1499.8 224.6L1502.1 228.8L1504.4 233.1L1506.7 237.5L1509.1 242.0L1511.5 246.5L1514.0 251.1L1516.5 255.8L1519.0 260.6L1521.6 265.4L1524.2 270.3L1526.9 275.3L1529.6 280.4L1532.4 285.6L1535.2 290.9L1538.0 296.3L1541.0 301.7L1543.9 307.3L1546.9 313.0L1550.0 318.8L1553.2 324.6L1556.3 330.6L1559.6 336.7L1562.9 342.9L1566.3 349.3L1569.7 355.8L1573.3 362.3L1576.0 367.5M1320.0 77.0L1320.4 78.3L1321.0 80.6L1321.6 82.9L1322.2 85.2L1322.9 87.5L1323.5 89.8L1324.2 92.2L1324.8 94.6L1325.5 97.1L1326.2 99.5L1326.8 102.0L1327.5 104.6L1328.2 107.1L1328.9 109.7L1329.7 112.3L1330.4 115.0L1331.1 117.7L1331.9 120.4L1332.6 123.2L1333.4 126.0L1334.2 128.8L1334.9 131.7L1335.7 134.6L1336.5 137.5L1337.3 140.5L1338.2 143.5L1339.0 146.6L1339.9 149.7L1340.7 152.8L1341.6 156.0L1342.5 159.2L1343.4 162.5L1344.3 165.8L1345.2 169.2L1346.1 172.6L1347.1 176.1L1348.0 179.6L1349.0 183.2L1350.0 186.8L1351.0 190.5L1352.0 194.2L1353.1 198.0L1354.1 201.8L1355.2 205.7L1356.3 209.7L1357.3 213.7L1358.5 217.8L1359.6 221.9L1360.7 226.1L1361.9 230.4L1363.1 234.7L1364.3 239.1L1365.5 243.6L1366.8 248.2L1368.0 252.8L1369.3 257.5L1370.6 262.3L1372.0 267.2L1373.3 272.1L1374.7 277.2L1376.1 282.3L1377.5 287.5L1379.0 292.8L1380.5 298.2L1382.0 303.7L1383.5 309.3L1385.1 315.0L1386.6 320.9L1388.3 326.8L1389.9 332.8L1391.6 338.9L1393.3 345.2L1395.0 351.6L1396.8 358.1L1398.6 364.7L1400.5 371.5L1402.4 378.4L1404.3 385.5L1406.3 392.7L1408.3 400.0L1410.3 407.5L1412.4 415.2L1414.6 423.0L1416.7 431.0L1419.0 439.1L1421.2 447.5L1423.6 456.0L1426.0 464.7L1428.4 473.7L1430.9 482.8L1433.5 492.2L1436.1 501.7L1438.8 511.5L1441.5 521.6L1444.3 531.9L1447.2 542.4L1450.2 553.2L1453.2 564.3L1456.3 575.7L1459.5 587.4L1462.8 599.4L1466.1 611.7L1469.6 624.3L1473.1 637.3L1476.8 650.7L1480.5 664.4L1484.4 678.6L1488.4 693.1L1492.5 708.1L1496.7 723.6L1501.1 739.5L1505.5 755.9L1510.2 772.9L1515.0 790.3L1519.9 808.4L1525.0 827.1L1530.3 846.3L1535.7 866.3L1541.4 886.9L1547.2 908.3L1553.3 930.5L1559.5 953.5L1561.3 960.0M1218.9 77.0L1218.9 79.2L1218.9 81.5L1218.9 83.7L1219.0 86.0L1219.0 88.4L1219.0 90.7L1219.1 93.1L1219.1 95.6L1219.1 98.0L1219.2 100.5L1219.2 103.0L1219.2 105.5L1219.3 108.1L1219.3 110.7L1219.4 113.3L1219.4 116.0L1219.4 118.7L1219.5 121.4L1219.5 124.2L1219.5 127.0L1219.6 129.9L1219.6 132.7L1219.7 135.7L1219.7 138.6L1219.8 141.6L1219.8 144.7L1219.8 147.7L1219.9 150.8L1219.9 154.0L1220.0 157.2L1220.0 160.5L1220.1 163.7L1220.1 167.1L1220.2 170.5L1220.2 173.9L1220.2 177.4L1220.3 180.9L1220.3 184.5L1220.4 188.1L1220.4 191.8L1220.5 195.6L1220.6 199.4L1220.6 203.2L1220.7 207.2L1220.7 211.1L1220.8 215.2L1220.8 219.3L1220.9 223.4L1220.9 227.7L1221.0 232.0L1221.1 236.3L1221.1 240.8L1221.2 245.3L1221.3 249.9L1221.3 254.5L1221.4 259.3L1221.5 264.1L1221.5 269.0L1221.6 274.0L1221.7 279.0L1221.7 284.2L1221.8 289.4L1221.9 294.8L1222.0 300.2L1222.0 305.8L1222.1 311.4L1222.2 317.1L1222.3 323.0L1222.4 328.9L1222.4 335.0L1222.5 341.2L1222.6 347.5L1222.7 353.9L1222.8 360.5L1222.9 367.1L1223.0 374.0L1223.1 380.9L1223.2 388.0L1223.3 395.3L1223.4 402.7L1223.5 410.2L1223.6 417.9L1223.7 425.8L1223.8 433.8L1223.9 442.1L1224.1 450.5L1224.2 459.1L1224.3 467.9L1224.4 476.9L1224.5 486.1L1224.7 495.5L1224.8 505.2L1225.0 515.0L1225.1 525.2L1225.2 535.5L1225.4 546.2L1225.5 557.1L1225.7 568.3L1225.9 579.7L1226.0 591.5L1226.2 603.6L1226.4 616.0L1226.5 628.8L1226.7 641.9L1226.9 655.4L1227.1 669.3L1227.3 683.6L1227.5 698.3L1227.7 713.4L1227.9 729.0L1228.2 745.1L1228.4 761.7L1228.6 778.8L1228.9 796.5L1229.1 814.8L1229.4 833.6L1229.7 853.1L1229.9 873.3L1230.2 894.2L1230.5 915.9L1230.8 938.3L1231.1 960.0M1117.8 77.0L1117.6 77.8L1117.0 80.1L1116.5 82.3L1115.9 84.6L1115.3 86.9L1114.8 89.3L1114.2 91.6L1113.6 94.1L1113.0 96.5L1112.4 98.9L1111.8 101.4L1111.2 104.0L1110.5 106.5L1109.9 109.1L1109.3 111.7L1108.6 114.3L1108.0 117.0L1107.3 119.7L1106.6 122.5L1105.9 125.3L1105.2 128.1L1104.5 130.9L1103.8 133.8L1103.1 136.8L1102.4 139.7L1101.6 142.7L1100.9 145.8L1100.1 148.9L1099.4 152.0L1098.6 155.2L1097.8 158.4L1097.0 161.7L1096.2 165.0L1095.4 168.3L1094.5 171.7L1093.7 175.2L1092.8 178.7L1092.0 182.2L1091.1 185.8L1090.2 189.5L1089.3 193.2L1088.3 197.0L1087.4 200.8L1086.5 204.7L1085.5 208.6L1084.5 212.6L1083.5 216.7L1082.5 220.8L1081.5 225.0L1080.4 229.2L1079.4 233.6L1078.3 237.9L1077.2 242.4L1076.1 246.9L1075.0 251.6L1073.8 256.2L1072.6 261.0L1071.4 265.9L1070.2 270.8L1069.0 275.8L1067.8 280.9L1066.5 286.1L1065.2 291.4L1063.9 296.7L1062.5 302.2L1061.2 307.8L1059.8 313.4L1058.4 319.2L1056.9 325.1L1055.4 331.1L1053.9 337.2L1052.4 343.4L1050.9 349.8L1049.3 356.2L1047.7 362.8L1046.0 369.6L1044.3 376.4L1042.6 383.4L1040.9 390.6L1039.1 397.9L1037.2 405.3L1035.4 412.9L1033.5 420.7L1031.5 428.6L1029.5 436.7L1027.5 445.0L1025.4 453.5L1023.3 462.2L1021.1 471.0L1018.9 480.1L1016.6 489.4L1014.3 498.9L1011.9 508.6L1009.5 518.6L1006.9 528.8L1004.4 539.2L1001.8 550.0L999.1 561.0L996.3 572.3L993.4 583.8L990.5 595.7L987.5 607.9L984.5 620.5L981.3 633.3L978.1 646.6L974.7 660.2L971.3 674.2L967.7 688.6L964.1 703.5L960.3 718.8L956.5 734.6L952.5 750.8L948.4 767.6L944.1 784.9L939.7 802.7L935.2 821.2L930.5 840.3L925.7 860.0L920.7 880.4L915.5 901.6L910.1 923.5L904.6 946.2L901.2 960.0M915.8 77.0L915.6 77.3L913.9 79.5L912.2 81.8L910.4 84.1L908.6 86.4L906.9 88.7L905.1 91.1L903.2 93.5L901.4 95.9L899.5 98.3L897.6 100.8L895.7 103.3L893.8 105.9L891.8 108.4L889.8 111.1L887.8 113.7L885.8 116.4L883.7 119.1L881.6 121.8L879.5 124.6L877.4 127.4L875.2 130.2L873.0 133.1L870.8 136.0L868.5 139.0L866.2 142.0L863.9 145.0L861.5 148.1L859.2 151.2L856.7 154.4L854.3 157.6L851.8 160.8L849.3 164.1L846.8 167.5L844.2 170.9L841.5 174.3L838.9 177.8L836.2 181.3L833.4 184.9L830.7 188.5L827.9 192.2L825.0 196.0L822.1 199.8L819.1 203.6L816.2 207.6L813.1 211.5L810.0 215.6L806.9 219.7L803.7 223.9L800.5 228.1L797.2 232.4L793.9 236.8L790.5 241.2L787.0 245.7L783.5 250.3L780.0 255.0L776.4 259.7L772.7 264.5L768.9 269.4L765.1 274.4L761.3 279.5L757.3 284.6L753.3 289.9L749.2 295.2L745.1 300.7L740.9 306.2L736.5 311.9L732.2 317.6L727.7 323.4L723.2 329.4L718.5 335.5L713.8 341.7L709.0 348.0L704.1 354.4L699.1 361.0L694.0 367.6L688.8 374.5L683.5 381.4L678.0 388.5L672.5 395.8L666.9 403.2L661.1 410.7L655.2 418.4L649.2 426.3L643.0 434.4L636.8 442.6L630.3 451.0L623.8 459.6L617.1 468.4L610.2 477.4L603.1 486.6L596.0 496.1L588.6 505.7L581.0 515.6L573.3 525.7L565.4 536.1L557.3 546.8L548.9 557.7L540.4 568.9L531.6 580.3L522.6 592.1L513.4 604.2L503.9 616.6L494.2 629.4L484.1 642.5L473.8 656.0L463.2 669.9L452.3 684.2L441.1 698.9L429.6 714.1L417.6 729.7L405.4 745.8L392.7 762.4L379.6 779.5L366.1 797.2L352.2 815.4L337.8 834.3L322.9 853.8L307.5 874.0L291.5 894.9L275.0 916.5L257.9 939.0L241.8 960.0M814.9 77.0L813.8 78.1L811.5 80.4L809.1 82.6L806.8 84.9L804.4 87.3L802.0 89.6L799.6 92.0L797.1 94.4L794.7 96.8L792.1 99.3L789.6 101.8L787.0 104.3L784.4 106.8L781.8 109.4L779.1 112.0L776.4 114.7L773.7 117.4L770.9 120.1L768.1 122.8L765.2 125.6L762.3 128.4L759.4 131.3L756.5 134.2L753.5 137.1L750.4 140.1L747.4 143.1L744.2 146.2L741.1 149.3L737.9 152.4L734.6 155.6L731.3 158.8L728.0 162.0L724.6 165.4L721.2 168.7L717.7 172.1L714.2 175.6L710.6 179.1L707.0 182.6L703.3 186.2L699.5 189.9L695.7 193.6L691.9 197.4L688.0 201.2L684.0 205.1L680.0 209.0L675.9 213.0L671.8 217.1L667.5 221.2L663.3 225.4L658.9 229.6L654.5 234.0L650.0 238.4L645.4 242.8L640.8 247.4L636.1 252.0L631.3 256.7L626.4 261.4L621.5 266.3L616.4 271.2L611.3 276.2L606.1 281.3L600.8 286.5L595.4 291.8L589.9 297.2L584.3 302.7L578.6 308.2L572.8 313.9L566.9 319.7L560.9 325.6L554.7 331.6L548.5 337.7L542.1 343.9L535.6 350.3L529.0 356.7L522.3 363.3L515.4 370.1L508.4 376.9L501.2 383.9L493.9 391.1L486.5 398.4L478.8 405.8L471.1 413.4L463.1 421.2L455.0 429.2L446.7 437.3L438.2 445.6L429.6 454.0L420.7 462.7L411.7 471.6L402.4 480.6L392.9 489.9L383.2 499.4L373.2 509.2L363.0 519.1L352.6 529.4L341.9 539.8L330.9 550.5L319.7 561.6L308.2 572.8L296.3 584.4L284.2 596.3L271.7 608.5L258.9 621.1L245.7 634.0L232.2 647.2L218.2 660.8L203.9 674.8L189.2 689.3L174.0 704.1L158.3 719.4L142.2 735.2L125.6 751.5L108.5 768.2L90.8 785.5L72.5 803.4L53.7 821.9L34.2 841.0L14.0 860.7L2.0 872.4M714.1 77.0L711.5 79.0L708.7 81.2L705.7 83.5L702.8 85.8L699.8 88.1L696.8 90.5L693.7 92.9L690.7 95.3L687.5 97.7L684.4 100.2L681.2 102.7L677.9 105.2L674.6 107.8L671.3 110.4L667.9 113.0L664.5 115.7L661.1 118.4L657.6 121.1L654.1 123.9L650.5 126.7L646.8 129.5L643.2 132.4L639.4 135.3L635.7 138.2L631.9 141.2L628.0 144.2L624.1 147.3L620.1 150.4L616.0 153.6L612.0 156.8L607.8 160.0L603.6 163.3L599.3 166.6L595.0 170.0L590.6 173.4L586.2 176.9L581.7 180.4L577.1 184.0L572.5 187.6L567.8 191.3L563.0 195.0L558.1 198.8L553.2 202.6L548.2 206.5L543.2 210.5L538.0 214.5L532.8 218.6L527.5 222.7L522.1 226.9L516.6 231.2L511.0 235.6L505.4 240.0L499.6 244.5L493.8 249.0L487.8 253.7L481.8 258.4L475.7 263.2L469.4 268.1L463.1 273.0L456.6 278.1L450.0 283.2L443.3 288.4L436.5 293.7L429.6 299.2L422.5 304.7L415.4 310.3L408.1 316.0L400.6 321.8L393.0 327.7L385.3 333.8L377.4 339.9L369.4 346.2L361.2 352.6L352.9 359.1L344.4 365.7L335.7 372.5L326.8 379.4L317.8 386.5L308.6 393.7L299.2 401.0L289.5 408.5L279.7 416.2L269.7 424.0L259.5 432.0L249.0 440.2L238.3 448.5L227.4 457.1L216.2 465.8L204.7 474.8L193.0 483.9L181.0 493.3L168.8 502.8L156.2 512.7L143.3 522.7L130.1 533.0L116.6 543.6L102.8 554.4L88.6 565.5L74.0 576.9L59.0 588.6L43.6 600.5L27.9 612.9L11.7 625.5L2.0 633.1M613.3 77.0L612.4 77.6L609.0 79.8L605.5 82.1L602.0 84.4L598.4 86.7L594.8 89.0L591.2 91.4L587.5 93.8L583.7 96.2L580.0 98.7L576.1 101.2L572.3 103.7L568.4 106.2L564.4 108.8L560.4 111.4L556.3 114.0L552.2 116.7L548.1 119.4L543.8 122.1L539.6 124.9L535.2 127.7L530.9 130.6L526.4 133.5L521.9 136.4L517.4 139.3L512.8 142.3L508.1 145.4L503.3 148.5L498.5 151.6L493.7 154.7L488.7 158.0L483.7 161.2L478.7 164.5L473.5 167.8L468.3 171.2L463.0 174.7L457.6 178.2L452.2 181.7L446.7 185.3L441.1 188.9L435.4 192.6L429.6 196.4L423.8 200.2L417.8 204.0L411.8 208.0L405.6 211.9L399.4 216.0L393.1 220.1L386.7 224.3L380.2 228.5L373.5 232.8L366.8 237.2L360.0 241.6L353.0 246.1L346.0 250.7L338.8 255.4L331.5 260.1L324.1 265.0L316.5 269.9L308.8 274.8L301.0 279.9L293.1 285.1L285.0 290.3L276.8 295.7L268.4 301.1L259.9 306.7L251.2 312.3L242.3 318.1L233.3 323.9L224.1 329.9L214.8 336.0L205.3 342.1L195.6 348.5L185.7 354.9L175.6 361.4L165.3 368.1L154.8 375.0L144.1 381.9L133.1 389.0L122.0 396.3L110.6 403.7L98.9 411.2L87.1 419.0L74.9 426.8L62.5 434.9L49.9 443.1L36.9 451.5L23.7 460.2L10.1 469.0L2.0 474.2M512.6 77.0L510.0 78.5L506.0 80.7L501.9 83.0L497.8 85.3L493.6 87.6L489.4 89.9L485.1 92.3L480.8 94.7L476.4 97.1L472.0 99.6L467.5 102.1L463.0 104.6L458.4 107.2L453.7 109.8L449.0 112.4L444.3 115.0L439.4 117.7L434.6 120.4L429.6 123.2L424.6 126.0L419.5 128.8L414.4 131.7L409.2 134.5L403.9 137.5L398.6 140.5L393.2 143.5L387.7 146.5L382.1 149.6L376.5 152.8L370.8 155.9L365.0 159.2L359.1 162.4L353.1 165.7L347.1 169.1L341.0 172.5L334.8 176.0L328.5 179.5L322.1 183.0L315.6 186.6L309.0 190.3L302.3 194.0L295.6 197.8L288.7 201.6L281.7 205.5L274.6 209.4L267.4 213.4L260.1 217.5L252.7 221.6L245.2 225.8L237.5 230.1L229.7 234.4L221.8 238.8L213.8 243.3L205.7 247.8L197.4 252.4L188.9 257.1L180.4 261.9L171.6 266.7L162.8 271.7L153.7 276.7L144.6 281.8L135.2 287.0L125.7 292.3L116.1 297.6L106.2 303.1L96.2 308.7L86.0 314.4L75.6 320.2L65.0 326.0L54.2 332.0L43.3 338.2L32.1 344.4L20.6 350.7L9.0 357.2L2.0 361.1M412.0 77.0L411.8 77.1L407.3 79.3L402.6 81.6L397.9 83.8L393.2 86.1L388.4 88.5L383.6 90.8L378.7 93.2L373.7 95.6L368.7 98.1L363.6 100.5L358.4 103.1L353.2 105.6L348.0 108.2L342.6 110.7L337.2 113.4L331.7 116.0L326.2 118.7L320.6 121.5L314.9 124.2L309.2 127.0L303.3 129.9L297.4 132.7L291.5 135.6L285.4 138.6L279.3 141.6L273.0 144.6L266.7 147.7L260.3 150.8L253.9 153.9L247.3 157.1L240.6 160.4L233.9 163.6L227.1 167.0L220.1 170.4L213.1 173.8L205.9 177.2L198.7 180.8L191.4 184.3L183.9 188.0L176.3 191.6L168.7 195.4L160.9 199.2L153.0 203.0L145.0 206.9L136.8 210.9L128.5 214.9L120.1 219.0L111.6 223.1L102.9 227.4L94.1 231.6L85.2 236.0L76.1 240.4L66.9 244.9L57.5 249.5L48.0 254.1L38.3 258.8L28.4 263.6L18.4 268.5L8.2 273.5L2.0 276.5M311.4 77.0L309.3 77.9L304.1 80.2L298.9 82.4L293.6 84.7L288.2 87.0L282.8 89.4L277.3 91.7L271.8 94.1L266.2 96.6L260.5 99.0L254.8 101.5L248.9 104.0L243.1 106.5L237.1 109.1L231.1 111.7L225.0 114.4L218.8 117.0L212.5 119.8L206.2 122.5L199.7 125.3L193.2 128.1L186.7 130.9L180.0 133.8L173.2 136.7L166.4 139.7L159.4 142.7L152.4 145.7L145.3 148.8L138.0 151.9L130.7 155.1L123.3 158.3L115.8 161.6L108.1 164.9L100.4 168.2L92.5 171.6L84.6 175.1L76.5 178.5L68.3 182.1L60.0 185.7L51.6 189.3L43.0 193.0L34.4 196.8L25.5 200.6L16.6 204.4L7.5 208.4L2.0 210.8M210.9 77.0L206.3 78.8L200.6 81.0L194.7 83.3L188.8 85.6L182.9 87.9L176.8 90.3L170.7 92.6L164.5 95.0L158.2 97.5L151.9 99.9L145.5 102.4L139.0 105.0L132.4 107.5L125.8 110.1L119.1 112.7L112.2 115.4L105.3 118.1L98.3 120.8L91.3 123.5L84.1 126.3L76.8 129.1L69.5 132.0L62.0 134.9L54.5 137.8L46.8 140.8L39.1 143.8L31.2 146.9L23.3 150.0L15.2 153.1L7.0 156.3L2.0 158.3M110.5 77.0L109.3 77.4L103.0 79.6L96.7 81.9L90.2 84.2L83.7 86.5L77.1 88.8L70.4 91.2L63.7 93.5L56.8 96.0L49.9 98.4L42.9 100.9L35.8 103.4L28.6 105.9L21.4 108.5L14.0 111.1L6.6 113.7L2.0 115.3M10.1 77.0L6.2 78.2L2.0 79.6" stroke="#5a5a5a" stroke-opacity="0.780" stroke-width="1.2" fill="none"/>
<path d="M1576.0 100.8L1571.9 100.4L1562.2 99.7L1552.4 98.9L1542.7 98.2L1533.1 97.4L1523.5 96.6L1513.9 95.9L1504.4 95.1L1494.9 94.4L1485.4 93.7L1475.9 92.9L1466.5 92.2L1457.2 91.4L1447.8 90.7L1438.5 90.0L1429.3 89.3L1420.0 88.5L1410.8 87.8L1401.7 87.1L1392.6 86.4L1383.5 85.7L1374.4 84.9L1365.4 84.2L1356.4 83.5L1347.4 82.8L1338.5 82.1L1329.6 81.4L1320.7 80.7L1311.8 80.0L1303.0 79.4L1294.3 78.7L1285.5 78.0L1276.8 77.3L1273.1 77.0M1576.0 130.1L1567.8 129.5L1557.4 128.6L1547.0 127.7L1536.7 126.8L1526.3 126.0L1516.1 125.1L1505.8 124.2L1495.7 123.4L1485.5 122.5L1475.4 121.7L1465.3 120.8L1455.3 120.0L1445.3 119.2L1435.4 118.3L1425.5 117.5L1415.6 116.7L1405.8 115.8L1396.0 115.0L1386.2 114.2L1376.5 113.4L1366.8 112.6L1357.2 111.7L1347.6 110.9L1338.0 110.1L1328.5 109.3L1319.0 108.5L1309.5 107.7L1300.1 106.9L1290.7 106.2L1281.4 105.4L1272.1 104.6L1262.8 103.8L1253.5 103.0L1244.3 102.3L1235.1 101.5L1226.0 100.7L1216.9 100.0L1207.8 99.2L1198.8 98.4L1189.8 97.7L1180.8 96.9L1171.9 96.2L1163.0 95.4L1154.1 94.7L1145.3 93.9L1136.5 93.2L1127.7 92.5L1118.9 91.7L1110.2 91.0L1101.6 90.3L1092.9 89.5L1084.3 88.8L1075.7 88.1L1067.2 87.4L1058.6 86.6L1050.2 85.9L1041.7 85.2L1033.3 84.5L1024.9 83.8L1016.5 83.1L1008.2 82.4L999.9 81.7L991.6 81.0L983.3 80.3L975.1 79.6L966.9 78.9L958.8 78.2L950.6 77.6L943.9 77.0M1576.0 164.0L1574.4 163.9L1563.1 162.9L1551.9 161.8L1540.8 160.8L1529.6 159.8L1518.6 158.8L1507.6 157.8L1496.6 156.8L1485.7 155.8L1474.8 154.9L1464.0 153.9L1453.2 152.9L1442.4 151.9L1431.7 151.0L1421.1 150.0L1410.5 149.0L1399.9 148.1L1389.4 147.1L1378.9 146.2L1368.5 145.2L1358.1 144.3L1347.8 143.3L1337.5 142.4L1327.2 141.5L1317.0 140.6L1306.9 139.6L1296.7 138.7L1286.6 137.8L1276.6 136.9L1266.6 136.0L1256.6 135.1L1246.7 134.2L1236.8 133.3L1227.0 132.4L1217.2 131.5L1207.4 130.6L1197.7 129.7L1188.0 128.9L1178.3 128.0L1168.7 127.1L1159.2 126.3L1149.6 125.4L1140.1 124.5L1130.7 123.7L1121.3 122.8L1111.9 122.0L1102.5 121.1L1093.2 120.3L1084.0 119.4L1074.7 118.6L1065.5 117.8L1056.4 116.9L1047.2 116.1L1038.1 115.3L1029.1 114.5L1020.1 113.7L1011.1 112.8L1002.1 112.0L993.2 111.2L984.3 110.4L975.5 109.6L966.7 108.8L957.9 108.0L949.1 107.2L940.4 106.4L931.7 105.7L923.1 104.9L914.5 104.1L905.9 103.3L897.3 102.5L888.8 101.8L880.3 101.0L871.9 100.2L863.5 99.5L855.1 98.7L846.7 97.9L838.4 97.2L830.1 96.4L821.8 95.7L813.6 94.9L805.4 94.2L797.2 93.5L789.1 92.7L780.9 92.0L772.8 91.3L764.8 90.5L756.8 89.8L748.8 89.1L740.8 88.4L732.9 87.6L725.0 86.9L717.1 86.2L709.2 85.5L701.4 84.8L693.6 84.1L685.8 83.4L678.1 82.7L670.4 82.0L662.7 81.3L655.0 80.6L647.4 79.9L639.8 79.2L632.2 78.5L624.7 77.8L617.2 77.2L615.5 77.0M1576.0 203.5L1569.8 202.9L1557.7 201.7L1545.5 200.5L1533.5 199.3L1521.5 198.2L1509.6 197.0L1497.7 195.8L1485.8 194.7L1474.1 193.5L1462.4 192.3L1450.7 191.2L1439.1 190.1L1427.5 188.9L1416.0 187.8L1404.5 186.7L1393.1 185.6L1381.8 184.4L1370.5 183.3L1359.2 182.2L1348.0 181.1L1336.9 180.0L1325.8 178.9L1314.7 177.9L1303.7 176.8L1292.8 175.7L1281.9 174.6L1271.0 173.6L1260.2 172.5L1249.5 171.4L1238.8 170.4L1228.1 169.3L1217.5 168.3L1206.9 167.3L1196.4 166.2L1185.9 165.2L1175.5 164.2L1165.1 163.2L1154.7 162.1L1144.4 161.1L1134.2 160.1L1124.0 159.1L1113.8 158.1L1103.7 157.1L1093.6 156.1L1083.6 155.1L1073.6 154.2L1063.6 153.2L1053.7 152.2L1043.8 151.2L1034.0 150.3L1024.2 149.3L1014.5 148.4L1004.8 147.4L995.1 146.5L985.5 145.5L975.9 144.6L966.3 143.6L956.8 142.7L947.4 141.8L937.9 140.9L928.6 139.9L919.2 139.0L909.9 138.1L900.6 137.2L891.4 136.3L882.2 135.4L873.0 134.5L863.9 133.6L854.8 132.7L845.8 131.8L836.8 130.9L827.8 130.0L818.9 129.2L809.9 128.3L801.1 127.4L792.2 126.5L783.4 125.7L774.7 124.8L766.0 124.0L757.3 123.1L748.6 122.3L740.0 121.4L731.4 120.6L722.8 119.7L714.3 118.9L705.8 118.1L697.4 117.2L688.9 116.4L680.5 115.6L672.2 114.8L663.9 113.9L655.6 113.1L647.3 112.3L639.1 111.5L630.9 110.7L622.7 109.9L614.6 109.1L606.5 108.3L598.4 107.5L590.3 106.7L582.3 105.9L574.4 105.1L566.4 104.4L558.5 103.6L550.6 102.8L542.7 102.0L534.9 101.3L527.1 100.5L519.3 99.7L511.6 99.0L503.9 98.2L496.2 97.5L488.5 96.7L480.9 96.0L473.3 95.2L465.7 94.5L458.2 93.7L450.6 93.0L443.2 92.3L435.7 91.5L428.3 90.8L420.8 90.1L413.5 89.3L406.1 88.6L398.8 87.9L391.5 87.2L384.2 86.5L377.0 85.8L369.7 85.1L362.5 84.3L355.4 83.6L348.2 82.9L341.1 82.2L334.0 81.5L326.9 80.9L319.9 80.2L312.9 79.5L305.9 78.8L298.9 78.1L292.0 77.4L287.7 77.0M1576.0 250.1L1564.4 248.9L1551.2 247.5L1538.1 246.0L1525.0 244.6L1511.9 243.2L1499.0 241.9L1486.1 240.5L1473.2 239.1L1460.5 237.7L1447.7 236.4L1435.1 235.0L1422.5 233.7L1410.0 232.3L1397.6 231.0L1385.2 229.7L1372.8 228.3L1360.5 227.0L1348.3 225.7L1336.2 224.4L1324.1 223.1L1312.1 221.8L1300.1 220.5L1288.2 219.3L1276.3 218.0L1264.5 216.7L1252.7 215.5L1241.1 214.2L1229.4 213.0L1217.8 211.7L1206.3 210.5L1194.8 209.3L1183.4 208.0L1172.1 206.8L1160.8 205.6L1149.5 204.4L1138.3 203.2L1127.2 202.0L1116.1 200.8L1105.0 199.6L1094.0 198.5L1083.1 197.3L1072.2 196.1L1061.3 195.0L1050.6 193.8L1039.8 192.6L1029.1 191.5L1018.5 190.4L1007.9 189.2L997.3 188.1L986.8 187.0L976.4 185.9L966.0 184.7L955.6 183.6L945.3 182.5L935.0 181.4L924.8 180.3L914.6 179.2L904.5 178.2L894.4 177.1L884.4 176.0L874.4 174.9L864.5 173.9L854.5 172.8L844.7 171.7L834.9 170.7L825.1 169.6L815.4 168.6L805.7 167.6L796.0 166.5L786.4 165.5L776.9 164.5L767.3 163.5L757.9 162.4L748.4 161.4L739.0 160.4L729.7 159.4L720.3 158.4L711.1 157.4L701.8 156.4L692.6 155.4L683.4 154.5L674.3 153.5L665.2 152.5L656.2 151.5L647.2 150.6L638.2 149.6L629.3 148.7L620.4 147.7L611.5 146.8L602.7 145.8L593.9 144.9L585.2 143.9L576.5 143.0L567.8 142.1L559.1 141.1L550.5 140.2L542.0 139.3L533.4 138.4L524.9 137.5L516.5 136.6L508.0 135.7L499.6 134.8L491.3 133.9L483.0 133.0L474.7 132.1L466.4 131.2L458.2 130.3L450.0 129.4L441.8 128.6L433.7 127.7L425.6 126.8L417.5 126.0L409.5 125.1L401.5 124.2L393.5 123.4L385.6 122.5L377.7 121.7L369.8 120.9L362.0 120.0L354.2 119.2L346.4 118.3L338.6 117.5L330.9 116.7L323.2 115.9L315.5 115.0L307.9 114.2L300.3 113.4L292.7 112.6L285.2 111.8L277.7 111.0L270.2 110.2L262.7 109.4L255.3 108.6L247.9 107.8L240.5 107.0L233.2 106.2L225.9 105.4L218.6 104.6L211.3 103.9L204.1 103.1L196.9 102.3L189.7 101.6L182.5 100.8L175.4 100.0L168.3 99.3L161.2 98.5L154.2 97.7L147.2 97.0L140.2 96.2L133.2 95.5L126.3 94.8L119.3 94.0L112.5 93.3L105.6 92.5L98.7 91.8L91.9 91.1L85.1 90.3L78.4 89.6L71.6 88.9L64.9 88.2L58.2 87.5L51.6 86.7L44.9 86.0L38.3 85.3L31.7 84.6L25.1 83.9L18.6 83.2L12.0 82.5L5.5 81.8L2.0 81.4M1576.0 305.9L1572.6 305.5L1558.0 303.8L1543.5 302.1L1529.1 300.4L1514.8 298.7L1500.5 297.0L1486.3 295.4L1472.2 293.7L1458.2 292.1L1444.2 290.4L1430.4 288.8L1416.6 287.1L1402.8 285.5L1389.2 283.9L1375.6 282.3L1362.1 280.7L1348.7 279.1L1335.3 277.6L1322.0 276.0L1308.8 274.4L1295.7 272.9L1282.6 271.4L1269.6 269.8L1256.7 268.3L1243.8 266.8L1231.0 265.3L1218.3 263.8L1205.6 262.3L1193.0 260.8L1180.5 259.3L1168.0 257.8L1155.6 256.4L1143.3 254.9L1131.0 253.5L1118.8 252.0L1106.6 250.6L1094.5 249.2L1082.5 247.8L1070.5 246.3L1058.6 244.9L1046.8 243.5L1035.0 242.2L1023.3 240.8L1011.6 239.4L1000.0 238.0L988.5 236.7L977.0 235.3L965.5 234.0L954.1 232.6L942.8 231.3L931.6 230.0L920.3 228.6L909.2 227.3L898.1 226.0L887.0 224.7L876.0 223.4L865.1 222.1L854.2 220.8L843.4 219.6L832.6 218.3L821.9 217.0L811.2 215.8L800.6 214.5L790.0 213.3L779.5 212.0L769.0 210.8L758.6 209.6L748.2 208.3L737.8 207.1L727.6 205.9L717.3 204.7L707.2 203.5L697.0 202.3L686.9 201.1L676.9 199.9L666.9 198.8L656.9 197.6L647.0 196.4L637.2 195.3L627.4 194.1L617.6 192.9L607.9 191.8L598.2 190.7L588.6 189.5L579.0 188.4L569.4 187.3L559.9 186.2L550.5 185.0L541.1 183.9L531.7 182.8L522.4 181.7L513.1 180.6L503.8 179.5L494.6 178.4L485.5 177.4L476.3 176.3L467.2 175.2L458.2 174.2L449.2 173.1L440.2 172.0L431.3 171.0L422.4 169.9L413.6 168.9L404.8 167.9L396.0 166.8L387.3 165.8L378.6 164.8L369.9 163.7L361.3 162.7L352.7 161.7L344.2 160.7L335.6 159.7L327.2 158.7L318.7 157.7L310.3 156.7L302.0 155.7L293.6 154.8L285.3 153.8L277.1 152.8L268.9 151.8L260.7 150.9L252.5 149.9L244.4 148.9L236.3 148.0L228.3 147.0L220.2 146.1L212.2 145.2L204.3 144.2L196.4 143.3L188.5 142.4L180.6 141.4L172.8 140.5L165.0 139.6L157.3 138.7L149.5 137.8L141.8 136.9L134.2 136.0L126.5 135.1L118.9 134.2L111.4 133.3L103.8 132.4L96.3 131.5L88.8 130.6L81.4 129.7L74.0 128.9L66.6 128.0L59.2 127.1L51.9 126.3L44.6 125.4L37.3 124.5L30.0 123.7L22.8 122.8L15.6 122.0L8.5 121.1L2.0 120.4M1576.0 374.1L1566.4 372.8L1550.2 370.7L1534.2 368.6L1518.2 366.5L1502.4 364.4L1486.6 362.3L1471.0 360.3L1455.4 358.3L1440.0 356.2L1424.6 354.2L1409.3 352.2L1394.1 350.2L1379.0 348.3L1364.0 346.3L1349.1 344.3L1334.3 342.4L1319.6 340.5L1304.9 338.5L1290.3 336.6L1275.9 334.7L1261.5 332.9L1247.2 331.0L1233.0 329.1L1218.8 327.3L1204.8 325.4L1190.8 323.6L1176.9 321.8L1163.1 320.0L1149.3 318.2L1135.7 316.4L1122.1 314.6L1108.6 312.8L1095.2 311.1L1081.8 309.3L1068.5 307.6L1055.3 305.9L1042.2 304.1L1029.2 302.4L1016.2 300.7L1003.3 299.0L990.4 297.4L977.7 295.7L965.0 294.0L952.4 292.4L939.8 290.7L927.3 289.1L914.9 287.5L902.5 285.8L890.3 284.2L878.0 282.6L865.9 281.0L853.8 279.5L841.8 277.9L829.8 276.3L817.9 274.8L806.1 273.2L794.3 271.7L782.6 270.1L771.0 268.6L759.4 267.1L747.9 265.6L736.4 264.1L725.0 262.6L713.7 261.1L702.4 259.6L691.2 258.2L680.0 256.7L668.9 255.2L657.9 253.8L646.9 252.3L635.9 250.9L625.1 249.5L614.2 248.1L603.5 246.7L592.7 245.3L582.1 243.9L571.5 242.5L560.9 241.1L550.4 239.7L540.0 238.3L529.6 237.0L519.2 235.6L508.9 234.3L498.7 232.9L488.5 231.6L478.4 230.3L468.3 228.9L458.2 227.6L448.2 226.3L438.3 225.0L428.4 223.7L418.5 222.4L408.7 221.2L399.0 219.9L389.3 218.6L379.6 217.3L370.0 216.1L360.4 214.8L350.9 213.6L341.5 212.3L332.0 211.1L322.6 209.9L313.3 208.6L304.0 207.4L294.7 206.2L285.5 205.0L276.4 203.8L267.2 202.6L258.2 201.4L249.1 200.2L240.1 199.1L231.2 197.9L222.3 196.7L213.4 195.6L204.6 194.4L195.8 193.3L187.0 192.1L178.3 191.0L169.6 189.8L161.0 188.7L152.4 187.6L143.9 186.5L135.3 185.3L126.9 184.2L118.4 183.1L110.0 182.0L101.7 180.9L93.3 179.8L85.0 178.7L76.8 177.7L68.6 176.6L60.4 175.5L52.3 174.5L44.2 173.4L36.1 172.3L28.1 171.3L20.1 170.2L12.1 169.2L4.2 168.2L2.0 167.9M1576.0 459.0L1558.6 456.4L1540.5 453.8L1522.5 451.1L1504.7 448.5L1487.0 445.9L1469.4 443.3L1452.0 440.7L1434.6 438.2L1417.4 435.6L1400.3 433.1L1383.3 430.6L1366.4 428.1L1349.7 425.7L1333.0 423.2L1316.5 420.8L1300.0 418.4L1283.7 415.9L1267.5 413.6L1251.4 411.2L1235.4 408.8L1219.5 406.5L1203.7 404.2L1188.0 401.8L1172.4 399.5L1156.9 397.3L1141.5 395.0L1126.2 392.7L1111.0 390.5L1096.0 388.3L1081.0 386.1L1066.0 383.9L1051.2 381.7L1036.5 379.5L1021.9 377.4L1007.4 375.2L992.9 373.1L978.6 371.0L964.3 368.9L950.1 366.8L936.0 364.7L922.0 362.7L908.1 360.6L894.3 358.6L880.5 356.5L866.9 354.5L853.3 352.5L839.8 350.5L826.4 348.6L813.0 346.6L799.8 344.6L786.6 342.7L773.5 340.8L760.5 338.9L747.5 336.9L734.7 335.1L721.9 333.2L709.2 331.3L696.5 329.4L683.9 327.6L671.4 325.7L659.0 323.9L646.7 322.1L634.4 320.3L622.2 318.5L610.0 316.7L597.9 314.9L585.9 313.1L574.0 311.4L562.1 309.6L550.3 307.9L538.6 306.2L526.9 304.4L515.3 302.7L503.8 301.0L492.3 299.3L480.9 297.7L469.5 296.0L458.3 294.3L447.0 292.7L435.9 291.0L424.8 289.4L413.7 287.8L402.7 286.1L391.8 284.5L381.0 282.9L370.2 281.3L359.4 279.8L348.7 278.2L338.1 276.6L327.5 275.1L317.0 273.5L306.5 272.0L296.1 270.4L285.8 268.9L275.5 267.4L265.2 265.9L255.0 264.4L244.9 262.9L234.8 261.4L224.8 259.9L214.8 258.5L204.9 257.0L195.0 255.5L185.2 254.1L175.4 252.7L165.7 251.2L156.0 249.8L146.4 248.4L136.8 247.0L127.3 245.6L117.8 244.2L108.4 242.8L99.0 241.4L89.6 240.0L80.3 238.6L71.1 237.3L61.9 235.9L52.7 234.6L43.6 233.2L34.6 231.9L25.6 230.6L16.6 229.3L7.7 227.9L2.0 227.1M1576.0 712.6L1559.5 709.4L1535.5 704.6L1511.7 700.0L1488.2 695.4L1464.8 690.8L1441.7 686.3L1418.8 681.8L1396.1 677.3L1373.6 672.9L1351.3 668.5L1329.1 664.2L1307.2 659.9L1285.5 655.6L1264.0 651.4L1242.6 647.2L1221.5 643.1L1200.5 639.0L1179.7 634.9L1159.1 630.8L1138.7 626.8L1118.4 622.9L1098.3 618.9L1078.4 615.0L1058.6 611.1L1039.0 607.3L1019.6 603.5L1000.3 599.7L981.2 596.0L962.3 592.2L943.5 588.6L924.8 584.9L906.4 581.3L888.0 577.7L869.8 574.1L851.8 570.6L833.9 567.1L816.1 563.6L798.5 560.1L781.0 556.7L763.7 553.3L746.5 549.9L729.4 546.6L712.5 543.2L695.7 540.0L679.0 536.7L662.4 533.4L646.0 530.2L629.7 527.0L613.6 523.9L597.5 520.7L581.6 517.6L565.8 514.5L550.1 511.4L534.5 508.3L519.0 505.3L503.7 502.3L488.5 499.3L473.4 496.4L458.4 493.4L443.5 490.5L428.7 487.6L414.0 484.7L399.4 481.9L384.9 479.0L370.6 476.2L356.3 473.4L342.1 470.6L328.1 467.9L314.1 465.1L300.3 462.4L286.5 459.7L272.8 457.0L259.2 454.4L245.8 451.7L232.4 449.1L219.1 446.5L205.9 443.9L192.7 441.3L179.7 438.8L166.8 436.2L153.9 433.7L141.2 431.2L128.5 428.7L115.9 426.3L103.4 423.8L91.0 421.4L78.6 419.0L66.4 416.5L54.2 414.2L42.1 411.8L30.1 409.4L18.1 407.1L6.3 404.8L2.0 403.9M1576.0 914.1L1574.7 913.8L1545.8 907.0L1517.3 900.3L1489.1 893.7L1461.2 887.1L1433.6 880.6L1406.3 874.2L1379.2 867.9L1352.5 861.6L1326.1 855.4L1299.9 849.2L1274.0 843.2L1248.4 837.1L1223.1 831.2L1198.0 825.3L1173.1 819.5L1148.6 813.7L1124.2 808.0L1100.2 802.3L1076.3 796.7L1052.7 791.2L1029.4 785.7L1006.2 780.3L983.4 774.9L960.7 769.6L938.2 764.3L916.0 759.1L894.0 753.9L872.2 748.8L850.6 743.7L829.2 738.7L808.0 733.7L787.0 728.8L766.2 723.9L745.6 719.1L725.2 714.3L705.0 709.5L685.0 704.8L665.2 700.2L645.5 695.6L626.0 691.0L606.7 686.4L587.6 682.0L568.7 677.5L549.9 673.1L531.3 668.7L512.8 664.4L494.5 660.1L476.4 655.8L458.4 651.6L440.6 647.4L423.0 643.3L405.5 639.2L388.1 635.1L370.9 631.1L353.8 627.1L336.9 623.1L320.2 619.1L303.5 615.2L287.0 611.4L270.7 607.5L254.5 603.7L238.4 599.9L222.5 596.2L206.6 592.5L191.0 588.8L175.4 585.1L160.0 581.5L144.7 577.9L129.5 574.4L114.4 570.8L99.5 567.3L84.7 563.8L69.9 560.4L55.4 557.0L40.9 553.6L26.5 550.2L12.3 546.8L2.0 544.4M707.6 960.0L694.0 956.0L669.2 948.8L644.8 941.6L620.6 934.5L596.6 927.5L573.0 920.6L549.6 913.8L526.4 907.0L503.6 900.3L480.9 893.7L458.5 887.1L436.4 880.7L414.5 874.3L392.8 867.9L371.4 861.7L350.2 855.4L329.2 849.3L308.4 843.2L287.9 837.2L267.6 831.3L247.4 825.4L227.5 819.6L207.8 813.8L188.3 808.1L169.0 802.4L149.9 796.8L130.9 791.3L112.2 785.8L93.6 780.4L75.3 775.0L57.1 769.7L39.1 764.4L21.2 759.2L3.6 754.1L2.0 753.6" stroke="#5a5a5a" stroke-opacity="0.780" stroke-width="1.2" fill="none"/><line x1="1576.0" y1="567.9" x2="2.0" y2="303.0" stroke="#bd3b5a" stroke-width="1.6"/><line x1="1016.8" y1="77.0" x2="571.4" y2="960.0" stroke="#7ea32e" stroke-width="1.6"/><path d="M601.7 237.2 L1204.9 314.9 L1197.7 845.5 L192.5 605.2 Z" fill="#999a9c" stroke="#353535" stroke-width="1.2" stroke-linejoin="round"/></svg></div><div style="position:absolute;left:2px;top:77px;width:1574px;height:28px;background:rgba(51,51,51,0.97);border-radius:6px 6px 0 0;box-shadow:inset 0 1px 0 #3c3c3c"></div><div style="position:absolute;left:2px;top:105px;width:309px;height:22px;background:rgba(54,54,54,0.96);border-radius:0px;border-radius:0 0 6px 0"></div><div style="position:absolute;left:1493px;top:105px;width:83px;height:22px;background:rgba(54,54,54,0.96);border-radius:0px;border-radius:0 0 0 6px"></div><div style="position:absolute;left:12px;top:81px;width:30px;height:17px;background:#2b2b2b;border-radius:4px;"></div><svg style="position:absolute;left:14px;top:81px;" width="20" height="17" viewBox="0 0 20 17"><path d="M3 8 H14 M2.5 12.5 H14 M6 5 L4.5 16 M11 8 L11.5 16" stroke="#d8d8d8" stroke-width="1.1" fill="none"/><circle cx="13" cy="5.5" r="3.3" fill="#e8e8e8"/></svg><svg style="position:absolute;left:31px;top:85.5px;" width="10" height="8" viewBox="0 0 10 8"><path d="M1.5 2.2 L5 5.8 L8.5 2.2" stroke="#d0d0d0" stroke-width="1.2" fill="none"/></svg><div style="position:absolute;left:50px;top:81px;width:108px;height:17px;background:#2b2b2b;border-radius:4px;"></div><svg style="position:absolute;left:52px;top:81px;" width="18" height="17" viewBox="0 0 18 17"><path d="M2.5 5 V2.5 H5 M10.5 2.5 H13 V5 M13 11 V13.5 H10.5 M5 13.5 H2.5 V11" stroke="#d8d8d8" stroke-width="1" fill="none"/><rect x="4.5" y="4.5" width="7" height="7" fill="#e6e6e6"/></svg><div class="t" style="left:74.4px;top:79.28px;font-size:11.6px;color:#e3e3e3;">Object Mode</div><svg style="position:absolute;left:145px;top:85.5px;" width="10" height="8" viewBox="0 0 10 8"><path d="M1.5 2.2 L5 5.8 L8.5 2.2" stroke="#d0d0d0" stroke-width="1.2" fill="none"/></svg><div class="t" style="left:171px;top:79.28px;font-size:11.6px;color:#e3e3e3;">View</div><div class="t" style="left:212px;top:79.28px;font-size:11.6px;color:#e3e3e3;">Select</div><div class="t" style="left:259px;top:79.28px;font-size:11.6px;color:#e3e3e3;">Add</div><div class="t" style="left:296px;top:79.28px;font-size:11.6px;color:#e3e3e3;">Object</div><div style="position:absolute;left:665px;top:80px;width:76px;height:18px;background:#2b2b2b;border-radius:4px;"></div><svg style="position:absolute;left:667px;top:80px;" width="22" height="18" viewBox="0 0 22 18"><path d="M4 15 V3 M2 5 L4 2.5 L6 5 M4 15 H18 M16 13 L18.5 15 L16 17 M4 15 L13 6 M10 6 H13 V9" stroke="#d8d8d8" stroke-width="1" fill="none"/><circle cx="4" cy="15" r="1.5" fill="none" stroke="#d8d8d8"/></svg><div class="t" style="left:690px;top:79.28px;font-size:11.6px;color:#e3e3e3;">Global</div><svg style="position:absolute;left:730px;top:85.5px;" width="10" height="8" viewBox="0 0 10 8"><path d="M1.5 2.2 L5 5.8 L8.5 2.2" stroke="#d0d0d0" stroke-width="1.2" fill="none"/></svg><div style="position:absolute;left:750px;top:80px;width:28px;height:18px;background:#2b2b2b;border-radius:4px;"></div><svg style="position:absolute;left:750px;top:80px;" width="20" height="18" viewBox="0 0 20 18"><circle cx="8.5" cy="11.5" r="4" stroke="#d8d8d8" stroke-width="1.1" fill="none"/><circle cx="12.5" cy="6.5" r="4" stroke="#d8d8d8" stroke-width="1.1" fill="none"/><circle cx="10.5" cy="9" r="1.2" fill="#e8e8e8"/></svg><svg style="position:absolute;left:767px;top:85.5px;" width="10" height="8" viewBox="0 0 10 8"><path d="M1.5 2.2 L5 5.8 L8.5 2.2" stroke="#d0d0d0" stroke-width="1.2" fill="none"/></svg><div style="position:absolute;left:785px;top:80px;width:50px;height:18px;background:#2b2b2b;border-radius:4px;"></div><div style="position:absolute;left:785px;top:80px;width:18px;height:18px;background:#484848;border-radius:0px;border-radius:4px 0 0 4px"></div><svg style="position:absolute;left:785px;top:80px;" width="18" height="18" viewBox="0 0 18 18"><g transform="rotate(-40 9 9)"><path d="M4 13 V8.5 A5 5 0 0 1 14 8.5 V13 H11.5 V8.5 A2.5 2.5 0 0 0 6.5 8.5 V13 Z" stroke="#a0a0a0" stroke-width="1" fill="none"/></g></svg><svg style="position:absolute;left:803px;top:80px;" width="22" height="18" viewBox="0 0 22 18"><path d="M3 10 V16 M3 13 H15 M7 11 V15 M11 11 V15 M15 10 V16" stroke="#e0e0e0" stroke-width="1.1" fill="none"/><rect x="12" y="4" width="4" height="4" fill="#e6e6e6"/></svg><svg style="position:absolute;left:824px;top:85.5px;" width="10" height="8" viewBox="0 0 10 8"><path d="M1.5 2.2 L5 5.8 L8.5 2.2" stroke="#d0d0d0" stroke-width="1.2" fill="none"/></svg><div style="position:absolute;left:842px;top:80px;width:49px;height:18px;background:#2b2b2b;border-radius:4px;"></div><div style="position:absolute;left:842px;top:80px;width:19px;height:18px;background:#484848;border-radius:0px;border-radius:4px 0 0 4px"></div><svg style="position:absolute;left:842px;top:80px;" width="19" height="18" viewBox="0 0 19 18"><circle cx="9.5" cy="9" r="6" stroke="#8a8a8a" stroke-width="1" fill="none"/><circle cx="9.5" cy="9" r="1.8" fill="#e6e6e6"/></svg><svg style="position:absolute;left:862px;top:80px;" width="20" height="18" viewBox="0 0 20 18"><path d="M3 15 C6 15 6 3 9 3 C12 3 12 15 15 15" stroke="#6a6a6a" stroke-width="1" fill="none"/></svg><svg style="position:absolute;left:881px;top:85.5px;" width="10" height="8" viewBox="0 0 10 8"><path d="M1.5 2.2 L5 5.8 L8.5 2.2" stroke="#5a5a5a" stroke-width="1.2" fill="none"/></svg><div style="position:absolute;left:1320px;top:80px;width:30px;height:18px;background:#2b2b2b;border-radius:4px;"></div><svg style="position:absolute;left:1320px;top:80px;" width="22" height="18" viewBox="0 0 22 18"><path d="M5 9 L13 12 L9.5 13 L12 17 L10.5 17.5 L8 14 L5.5 16 Z" fill="#e0e0e0"/><path d="M7 6 Q11.5 1 16 6 Q11.5 11 7 6 Z" stroke="#e0e0e0" stroke-width="1.1" fill="none"/><circle cx="11.5" cy="6" r="1.6" fill="#e0e0e0"/></svg><svg style="position:absolute;left:1339px;top:85.5px;" width="10" height="8" viewBox="0 0 10 8"><path d="M1.5 2.2 L5 5.8 L8.5 2.2" stroke="#d0d0d0" stroke-width="1.2" fill="none"/></svg><div style="position:absolute;left:1357px;top:80px;width:38px;height:18px;background:#2b2b2b;border-radius:4px;"></div><div style="position:absolute;left:1357px;top:80px;width:18px;height:18px;background:#4772b3;border-radius:0px;border-radius:4px 0 0 4px"></div><svg style="position:absolute;left:1357px;top:80px;" width="18" height="18" viewBox="0 0 18 18"><path d="M4 14 Q6 5 14 4 M10 4 H14 V8" stroke="#f0f0f0" stroke-width="1.1" fill="none"/><circle cx="4.5" cy="14" r="1.6" stroke="#f0f0f0" stroke-width="1" fill="none"/></svg><svg style="position:absolute;left:1380px;top:85.5px;" width="10" height="8" viewBox="0 0 10 8"><path d="M1.5 2.2 L5 5.8 L8.5 2.2" stroke="#d0d0d0" stroke-width="1.2" fill="none"/></svg><div style="position:absolute;left:1402px;top:80px;width:38px;height:18px;background:#2b2b2b;border-radius:4px;"></div><div style="position:absolute;left:1402px;top:80px;width:18px;height:18px;background:#4772b3;border-radius:0px;border-radius:4px 0 0 4px"></div><svg style="position:absolute;left:1402px;top:80px;" width="18" height="18" viewBox="0 0 18 18"><circle cx="7" cy="11" r="4.5" stroke="#f0f0f0" stroke-width="1.2" fill="none"/><circle cx="10.5" cy="7" r="4.8" fill="#f0f0f0"/><path d="M9 6 L11 8" stroke="#4772b3" stroke-width="0.8"/></svg><svg style="position:absolute;left:1425px;top:85.5px;" width="10" height="8" viewBox="0 0 10 8"><path d="M1.5 2.2 L5 5.8 L8.5 2.2" stroke="#d0d0d0" stroke-width="1.2" fill="none"/></svg><div style="position:absolute;left:1447px;top:80px;width:18px;height:18px;background:#3a3a3a;border-radius:4px;"></div><svg style="position:absolute;left:1447px;top:80px;" width="18" height="18" viewBox="0 0 18 18"><path d="M6 3.5 H15 V12 M3 6 H12 V15 H3 Z" stroke="#d8d8d8" stroke-width="1.1" fill="none"/><path d="M6 9 V10 M9 12 H10" stroke="#d8d8d8" stroke-width="1"/></svg><div style="position:absolute;left:1472px;top:80px;width:95px;height:18px;background:#2b2b2b;border-radius:4px;"></div><div style="position:absolute;left:1472px;top:80px;width:19px;height:18px;background:#474747;border-radius:0px;border-radius:4px 0 0 4px"></div><div style="position:absolute;left:1491px;top:80px;width:18px;height:18px;background:#4772b3;border-radius:0px;"></div><div style="position:absolute;left:1509px;top:80px;width:19px;height:18px;background:#474747;border-radius:0px;"></div><div style="position:absolute;left:1528px;top:80px;width:19px;height:18px;background:#474747;border-radius:0px;"></div><svg style="position:absolute;left:1472px;top:80px;" width="19" height="18" viewBox="0 0 19 18"><circle cx="9.5" cy="9" r="6" stroke="#d8d8d8" stroke-width="1" fill="none"/><ellipse cx="9.5" cy="9" rx="2.5" ry="6" stroke="#d8d8d8" stroke-width="1" fill="none"/><path d="M3.5 9 H15.5" stroke="#d8d8d8" stroke-width="1"/></svg><svg style="position:absolute;left:1491px;top:80px;" width="18" height="18" viewBox="0 0 18 18"><circle cx="9" cy="9" r="6.5" fill="#e4e8f4"/></svg><svg style="position:absolute;left:1509px;top:80px;" width="19" height="18" viewBox="0 0 19 18"><circle cx="9.5" cy="9" r="6" stroke="#d8d8d8" stroke-width="1" fill="none"/><path d="M9.5 3 V9 L13.8 13.2 A6 6 0 0 1 3.5 9 A6 6 0 0 1 9.5 3" fill="#d0d0d0"/></svg><svg style="position:absolute;left:1528px;top:80px;" width="19" height="18" viewBox="0 0 19 18"><circle cx="9.5" cy="9" r="6" stroke="#d8d8d8" stroke-width="1" fill="none"/><path d="M6 7 Q7 5 9 4.5" stroke="#e0e0e0" stroke-width="1.2" fill="none"/></svg><svg style="position:absolute;left:1552px;top:85.5px;" width="10" height="8" viewBox="0 0 10 8"><path d="M1.5 2.2 L5 5.8 L8.5 2.2" stroke="#d0d0d0" stroke-width="1.2" fill="none"/></svg><div class="t" style="left:11.5px;top:106.08px;font-size:11.6px;color:#e0e0e0;">Orientation:</div><div style="position:absolute;left:79px;top:107px;width:95px;height:17px;background:#2b2b2b;border-radius:4px;"></div><svg style="position:absolute;left:80px;top:107px;" width="22" height="19" viewBox="0 0 22 19"><path d="M7 4 V10 M5 6 L7 3.5 L9 6 M9 12 H15 M13 10 L15.5 12 L13 14 M5 14 L3 16 M3 13.5 V16 H5.5" stroke="#d8d8d8" stroke-width="1" fill="none"/><circle cx="7" cy="12" r="1.8" fill="#e8e8e8"/></svg><div class="t" style="left:103.5px;top:106.08px;font-size:11.6px;color:#e3e3e3;">Default</div><svg style="position:absolute;left:165px;top:112px;" width="10" height="8" viewBox="0 0 10 8"><path d="M1.5 2.2 L5 5.8 L8.5 2.2" stroke="#d0d0d0" stroke-width="1.2" fill="none"/></svg><div class="t" style="left:186px;top:106.08px;font-size:11.6px;color:#e0e0e0;">Drag:</div><div style="position:absolute;left:225px;top:107px;width:77px;height:17px;background:#2b2b2b;border-radius:4px;"></div><div class="t" style="left:231px;top:106.08px;font-size:11.6px;color:#e3e3e3;">Select Box</div><svg style="position:absolute;left:291px;top:112px;" width="10" height="8" viewBox="0 0 10 8"><path d="M1.5 2.2 L5 5.8 L8.5 2.2" stroke="#d0d0d0" stroke-width="1.2" fill="none"/></svg><div style="position:absolute;left:1502px;top:107px;width:65px;height:18px;background:#2b2b2b;border-radius:4px;"></div><div class="t" style="left:1509px;top:106.08px;font-size:11.6px;color:#e3e3e3;">Options</div><svg style="position:absolute;left:1556px;top:112.5px;" width="10" height="8" viewBox="0 0 10 8"><path d="M1.5 2.2 L5 5.8 L8.5 2.2" stroke="#d0d0d0" stroke-width="1.2" fill="none"/></svg><div class="t" style="left:67px;top:134.55px;font-size:11.7px;color:#ffffff;text-shadow:0 0 1.5px #000,1px 1px 1px rgba(0,0,0,0.7);-webkit-text-stroke:0.3px #fff">User Perspective</div><div class="t" style="left:67px;top:152.66px;font-size:11.95px;color:#ffffff;text-shadow:0 0 1.5px #000,1px 1px 1px rgba(0,0,0,0.7);-webkit-text-stroke:0.3px #fff">(1) Collection</div><div style="position:absolute;left:144px;top:156.5px;width:1.4px;height:13.5px;background:#f4f4f4;border-radius:0px;box-shadow:0 0 1.5px #000"></div><div class="t" style="left:149.6px;top:152.66px;font-size:11.95px;color:#ffffff;text-shadow:0 0 1.5px #000,1px 1px 1px rgba(0,0,0,0.7);-webkit-text-stroke:0.3px #fff">tentacleBaseLink</div><div style="position:absolute;left:11px;top:138px;width:38px;height:68px;background:#282828;border-radius:5px;"></div><div style="position:absolute;left:11px;top:213px;width:38px;height:138px;background:#282828;border-radius:5px;"></div><div style="position:absolute;left:11px;top:246px;width:38px;height:35px;background:#4772b3;border-radius:0px;"></div><div style="position:absolute;left:11px;top:358px;width:38px;height:68px;background:#282828;border-radius:5px;"></div><div style="position:absolute;left:11px;top:433px;width:38px;height:33px;background:#282828;border-radius:5px;"></div><svg style="position:absolute;left:15px;top:140px;" width="30" height="30" viewBox="0 0 30 30"><rect x="6" y="6" width="18" height="18" stroke="#d6a84a" stroke-width="1.2" stroke-dasharray="3 2" fill="none"/><path d="M12 10 L20 15.5 L16 16.5 L13.5 20 Z" fill="#f0f0f0"/></svg><svg style="position:absolute;left:43px;top:166px;" width="5" height="5" viewBox="0 0 5 5"><path d="M5 0 V5 H0 Z" fill="#9a9a9a"/></svg><svg style="position:absolute;left:15px;top:173px;" width="30" height="30" viewBox="0 0 30 30"><circle cx="15" cy="15" r="9" stroke="#ddd" stroke-width="1.6" fill="none" stroke-dasharray="4 3"/><circle cx="15" cy="15" r="9" stroke="#c0394f" stroke-width="1.6" fill="none" stroke-dasharray="3 4" stroke-dashoffset="3.5"/><path d="M15 9 V13 M15 17 V21 M9 15 H13 M17 15 H21" stroke="#aaa" stroke-width="1"/></svg><svg style="position:absolute;left:15px;top:213px;" width="30" height="33" viewBox="0 0 30 33"><path d="M15 9 V24 M7 16.5 H23" stroke="#e8e8e8" stroke-width="1.6" stroke-dasharray="3 2"/><path d="M15 3.5 L11.2 8.5 H18.8 Z M15 29.5 L11.2 24.5 H18.8 Z M2 16.5 L7 12.7 V20.3 Z M28 16.5 L23 12.7 V20.3 Z" fill="#e8e8e8"/></svg><svg style="position:absolute;left:15px;top:247px;" width="30" height="33" viewBox="0 0 30 33"><path d="M7 14 A8.5 8.5 0 0 1 23 13 M23 19 A8.5 8.5 0 0 1 7 20" stroke="#f0f0f0" stroke-width="1.2" fill="none"/><path d="M20 18 L26 18 L23 13 Z M4 15 L10 15 L7 20 Z" fill="#f0f0f0"/><rect x="12.8" y="14.3" width="4.4" height="4.4" transform="rotate(45 15 16.5)" fill="#c8c8c8"/></svg><svg style="position:absolute;left:15px;top:282px;" width="30" height="33" viewBox="0 0 30 33"><rect x="6" y="17" width="9" height="9" fill="#e6e6e6"/><path d="M11 17 V8 H23 V20 H15 M14 17 L22 9 M18 9 H22 V13" stroke="#d8d8d8" stroke-width="1.1" fill="none"/></svg><svg style="position:absolute;left:43px;top:311px;" width="5" height="5" viewBox="0 0 5 5"><path d="M5 0 V5 H0 Z" fill="#9a9a9a"/></svg><svg style="position:absolute;left:15px;top:317px;" width="30" height="33" viewBox="0 0 30 33"><circle cx="15" cy="16.5" r="9.5" stroke="#e0e0e0" stroke-width="1.2" fill="none" stroke-dasharray="5 3"/><rect x="10.5" y="12" width="9" height="9" fill="#e8e8e8"/><path d="M15 4.5 L12.5 8 H17.5 Z M15 28.5 L12.5 25 H17.5 Z M3 16.5 L6.5 14 V19 Z M27 16.5 L23.5 14 V19 Z" fill="#e8e8e8"/></svg><svg style="position:absolute;left:15px;top:359px;" width="30" height="32" viewBox="0 0 30 32"><path d="M8 18 L18 8 L21 11 L11 21 L7 22 Z" stroke="#e8e8e8" stroke-width="1.2" fill="#e8e8e8"/><path d="M7 25 Q11 20 15 24 T24 23" stroke="#6fbf9a" stroke-width="1.2" fill="none"/></svg><svg style="position:absolute;left:43px;top:386px;" width="5" height="5" viewBox="0 0 5 5"><path d="M5 0 V5 H0 Z" fill="#9a9a9a"/></svg><svg style="position:absolute;left:15px;top:392px;" width="30" height="33" viewBox="0 0 30 33"><path d="M7 6 V27 H25" stroke="#e8e8e8" stroke-width="1.3" fill="none"/><path d="M9 12 A14 14 0 0 1 22 25 H9 Z" fill="#7fd0a8"/><path d="M7 10 H9 M7 14 H9 M7 18 H9 M7 22 H9 M11 27 V25 M15 27 V25 M19 27 V25" stroke="#e8e8e8" stroke-width="1"/></svg><svg style="position:absolute;left:15px;top:434px;" width="30" height="32" viewBox="0 0 30 32"><path d="M4 8 H10 M7 5 V11" stroke="#7fd0a8" stroke-width="1.4"/><path d="M10 13 L14 9 H24 V20 L20 24 H10 Z M10 13 H20 V24 M20 13 L24 9" stroke="#7fd0a8" stroke-width="1.1" fill="none"/></svg><svg style="position:absolute;left:43px;top:461px;" width="5" height="5" viewBox="0 0 5 5"><path d="M5 0 V5 H0 Z" fill="#9a9a9a"/></svg><svg style="position:absolute;left:1450px;top:135px;" width="100" height="85" viewBox="0 0 100 85"><line x1="49.3" y1="43.9" x2="49.8" y2="18.7" stroke="#3b86d6" stroke-width="2.2"/><line x1="49.3" y1="43.9" x2="19.2" y2="38.1" stroke="#d4405a" stroke-width="2.2"/><line x1="49.3" y1="43.9" x2="40.5" y2="62" stroke="#7cb82c" stroke-width="2.2"/><circle cx="59.9" cy="25.3" r="7.3" fill="none" stroke="#8aa028" stroke-width="1.3" opacity="0.9"/><circle cx="80.6" cy="49.8" r="7.3" fill="rgba(200,60,80,0.35)" stroke="#d4405a" stroke-width="1.4"/><circle cx="49.8" cy="69.2" r="7.3" fill="none" stroke="#3b70c0" stroke-width="1.3" opacity="0.9"/><circle cx="49.8" cy="18.7" r="8" fill="#3b8fe0"/><circle cx="19.2" cy="38.1" r="8" fill="#de3d5b"/><circle cx="40.5" cy="62" r="8" fill="#7ec52a"/><text x="49.8" y="22.8" text-anchor="middle" font-family="Liberation Sans" font-size="11" fill="#1a1a1a">Z</text><text x="19.2" y="42.2" text-anchor="middle" font-family="Liberation Sans" font-size="11" fill="#1a1a1a">X</text><text x="40.5" y="66.1" text-anchor="middle" font-family="Liberation Sans" font-size="11" fill="#1a1a1a">Y</text></svg><svg style="position:absolute;left:1514px;top:219.9px;" width="28" height="28" viewBox="0 0 28 28"><circle cx="14" cy="14" r="13.5" fill="rgba(40,40,40,0.55)"/></svg><svg style="position:absolute;left:1514px;top:250px;" width="28" height="28" viewBox="0 0 28 28"><circle cx="14" cy="14" r="13.5" fill="rgba(40,40,40,0.55)"/></svg><svg style="position:absolute;left:1514px;top:279.2px;" width="28" height="28" viewBox="0 0 28 28"><circle cx="14" cy="14" r="13.5" fill="rgba(40,40,40,0.55)"/></svg><svg style="position:absolute;left:1514px;top:309.7px;" width="28" height="28" viewBox="0 0 28 28"><circle cx="14" cy="14" r="13.5" fill="rgba(40,40,40,0.55)"/></svg><svg style="position:absolute;left:1514px;top:220px;" width="28" height="28" viewBox="0 0 28 28"><circle cx="12.5" cy="12.5" r="5.5" fill="#e6e6e6"/><path d="M12.5 10 V15 M10 12.5 H15" stroke="#333" stroke-width="1.2"/><path d="M16.5 16.5 L21 21" stroke="#e6e6e6" stroke-width="2.2"/></svg><svg style="position:absolute;left:1514px;top:250px;" width="28" height="28" viewBox="0 0 28 28"><path d="M9 21 Q7 17 7 13 V10 A1 1 0 0 1 9 10 V14 V7 A1 1 0 0 1 11 7 V13 V6 A1 1 0 0 1 13 6 V13 V7 A1 1 0 0 1 15 7 V14 V10 A1 1 0 0 1 17 10 V16 Q17 20 15 21 Z" fill="#e6e6e6"/></svg><svg style="position:absolute;left:1514px;top:279px;" width="28" height="28" viewBox="0 0 28 28"><circle cx="11" cy="10" r="3" stroke="#e6e6e6" stroke-width="1.3" fill="none"/><circle cx="17" cy="10" r="3" stroke="#e6e6e6" stroke-width="1.3" fill="none"/><rect x="9" y="14" width="9" height="7" stroke="#e6e6e6" stroke-width="1.3" fill="none"/><path d="M18 16 L22 14 V21 L18 19" fill="#e6e6e6"/></svg><svg style="position:absolute;left:1514px;top:310px;" width="28" height="28" viewBox="0 0 28 28"><path d="M8 8 H20 L22 20 H6 Z M12 8 L11 20 M16 8 L17 20 M7 12 H21 M6.5 16 H21.5" stroke="#e6e6e6" stroke-width="1.1" fill="none"/></svg><div style="position:absolute;left:1556px;top:134px;width:15px;height:41px;background:#262626;border-radius:4px"></div><div class="t" style="left:1556px;top:134px;width:41px;height:15px;line-height:15px;text-align:center;font-size:11.5px;color:#bdbdbd;transform-origin:0 0;transform:translate(15.5px,0) rotate(90deg)">Item</div><div style="position:absolute;left:1556px;top:179px;width:15px;height:40px;background:#262626;border-radius:4px"></div><div class="t" style="left:1556px;top:179px;width:40px;height:15px;line-height:15px;text-align:center;font-size:11.5px;color:#bdbdbd;transform-origin:0 0;transform:translate(15.5px,0) rotate(90deg)">Tool</div><div style="position:absolute;left:1556px;top:224px;width:15px;height:40px;background:#262626;border-radius:4px"></div><div class="t" style="left:1556px;top:224px;width:40px;height:15px;line-height:15px;text-align:center;font-size:11.5px;color:#bdbdbd;transform-origin:0 0;transform:translate(15.5px,0) rotate(90deg)">View</div><div style="position:absolute;left:1556px;top:270px;width:15px;height:68px;background:#262626;border-radius:4px"></div><div class="t" style="left:1556px;top:270px;width:68px;height:15px;line-height:15px;text-align:center;font-size:11.5px;color:#bdbdbd;transform-origin:0 0;transform:translate(15.5px,0) rotate(90deg)">Animation</div><svg style="position:absolute;left:815px;top:426px;" width="38" height="36" viewBox="0 0 38 36"><circle cx="17.3" cy="17" r="10.4" stroke="#f4f4f4" stroke-width="1.5" fill="none" stroke-dasharray="3.3 3.2"/><circle cx="17.3" cy="17" r="10.4" stroke="#e05a70" stroke-width="1.5" fill="none" stroke-dasharray="3.2 3.3" stroke-dashoffset="3.25"/><path d="M-0.4 14.5 L12.7 16.2 M22.6 18.5 L36.7 20 M17.5 3 V12.5 M17.3 20.3 V33.3 M20 11 L18 15 M15 19 L13 23" stroke="#1a1a1a" stroke-width="1.3"/><circle cx="17.5" cy="3" r="1.6" fill="#6a9ad8" opacity="0.8"/></svg><div style="position:absolute;left:1579px;top:77px;width:339px;height:320.5px;background:#282828;border-radius:6px;"></div><div style="position:absolute;left:1579px;top:77px;width:339px;height:25px;background:#2d2d2d;border-radius:0px;border-radius:6px 6px 0 0"></div><div style="position:absolute;left:1589px;top:80px;width:30px;height:18px;background:#262626;border-radius:4px;box-shadow:inset 0 0 0 1px #2f2f2f"></div><svg style="position:absolute;left:1589px;top:80px;" width="22" height="18" viewBox="0 0 22 18"><rect x="3" y="2" width="4.5" height="3" fill="#e0e0e0"/><path d="M4.5 5 V14 H7 M4.5 9.5 H7" stroke="#d8d8d8" stroke-width="1" fill="none"/><rect x="8" y="8" width="7.5" height="3" fill="#e8e8e8"/><rect x="8" y="12.5" width="7.5" height="3" fill="#e8e8e8"/></svg><svg style="position:absolute;left:1607px;top:85.5px;" width="10" height="8" viewBox="0 0 10 8"><path d="M1.5 2.2 L5 5.8 L8.5 2.2" stroke="#d0d0d0" stroke-width="1.2" fill="none"/></svg><div style="position:absolute;left:1626px;top:80px;width:31px;height:18px;background:#262626;border-radius:4px;box-shadow:inset 0 0 0 1px #2f2f2f"></div><svg style="position:absolute;left:1627px;top:80px;" width="20" height="18" viewBox="0 0 20 18"><path d="M2 6 V16 H11 M3.8 4.5 V14.2 H13" stroke="#d8d8d8" stroke-width="0.9" fill="none"/><rect x="5.5" y="2" width="9.5" height="10.5" stroke="#e0e0e0" stroke-width="1.1" fill="none"/><path d="M6.5 11.5 L9 6 L10.5 9 L11.5 8 L14 11.5 Z" fill="#e0e0e0"/><circle cx="12.5" cy="4.5" r="1" fill="#e0e0e0"/></svg><svg style="position:absolute;left:1645px;top:85.5px;" width="10" height="8" viewBox="0 0 10 8"><path d="M1.5 2.2 L5 5.8 L8.5 2.2" stroke="#d0d0d0" stroke-width="1.2" fill="none"/></svg><div style="position:absolute;left:1679px;top:80px;width:117px;height:18px;background:#1d1d1d;border-radius:4px;box-shadow:inset 0 0 0 1px #2f2f2f"></div><svg style="position:absolute;left:1682px;top:80px;" width="18" height="18" viewBox="0 0 18 18"><circle cx="7.5" cy="7.5" r="4.3" stroke="#d8d8d8" stroke-width="1.2" fill="none"/><path d="M10.5 10.5 L14.5 14.5" stroke="#d8d8d8" stroke-width="1.3"/></svg><div class="t" style="left:1704px;top:78.98px;font-size:11.6px;color:#6c6c6c;">Search</div><div style="position:absolute;left:1854px;top:80px;width:30px;height:18px;background:#262626;border-radius:4px;box-shadow:inset 0 0 0 1px #2f2f2f"></div><svg style="position:absolute;left:1856px;top:80px;" width="20" height="18" viewBox="0 0 20 18"><path d="M3 3 H15 L10.5 9 V15.5 L7.5 13 V9 Z" stroke="#d8d8d8" stroke-width="1.1" fill="none"/></svg><svg style="position:absolute;left:1872px;top:85.5px;" width="10" height="8" viewBox="0 0 10 8"><path d="M1.5 2.2 L5 5.8 L8.5 2.2" stroke="#d0d0d0" stroke-width="1.2" fill="none"/></svg><div style="position:absolute;left:1891px;top:80px;width:19px;height:18px;background:#3a3a3a;border-radius:4px;"></div><svg style="position:absolute;left:1891px;top:80px;" width="19" height="18" viewBox="0 0 19 18"><path d="M3 7 H11 V15 H3 Z M5 11 H8" stroke="#c8c8c8" stroke-width="1" fill="none"/><circle cx="13" cy="5.5" r="3.3" fill="#e0e0e0"/><path d="M13 3.8 V7.2 M11.3 5.5 H14.7" stroke="#3a3a3a" stroke-width="1"/></svg><svg style="position:absolute;left:1601px;top:106px;" width="16" height="16" viewBox="0 0 16 16"><rect x="2" y="2" width="12" height="2.5" fill="#e0e0e0"/><rect x="3" y="5.5" width="10" height="8" fill="#e0e0e0"/><rect x="6" y="7" width="4" height="1.5" fill="#282828"/></svg><div class="t" style="left:1624.2px;top:104.73px;font-size:11.6px;color:#e0e0e0;">Scene Collection</div><svg style="position:absolute;left:1605px;top:130.5px;" width="10" height="8" viewBox="0 0 10 8"><path d="M1.5 2.2 L5 5.8 L8.5 2.2" stroke="#d0d0d0" stroke-width="1.1" fill="none"/></svg><div style="position:absolute;left:1620px;top:125px;width:20px;height:19px;background:#3d3d3d;border-radius:4px;"></div><svg style="position:absolute;left:1622px;top:126px;" width="16" height="16" viewBox="0 0 16 16"><rect x="2" y="2" width="12" height="2.5" fill="#e0e0e0"/><rect x="3" y="5.5" width="10" height="8" fill="#e0e0e0"/><rect x="6" y="7" width="4" height="1.5" fill="#282828"/></svg><div class="t" style="left:1643.75px;top:124.73px;font-size:11.6px;color:#e8e8e8;">Collection</div><svg style="position:absolute;left:1851px;top:128px;" width="14" height="14" viewBox="0 0 14 14"><rect x="1" y="1" width="12" height="12" rx="1.5" fill="#e6e6e6"/><path d="M3.5 7 L6 9.5 L10.5 4" stroke="#222" stroke-width="1.6" fill="none"/></svg><svg style="position:absolute;left:1869px;top:126px;" width="18" height="16" viewBox="0 0 18 16"><path d="M2 8 Q9 1 16 8 Q9 15 2 8 Z" fill="#e6e6e6"/><circle cx="9" cy="8" r="2.5" fill="#282828"/><circle cx="9" cy="8" r="1.2" fill="#e6e6e6"/></svg><svg style="position:absolute;left:1889px;top:126px;" width="18" height="16" viewBox="0 0 18 16"><rect x="2" y="4" width="14" height="10" rx="1.5" fill="#e6e6e6"/><rect x="5.5" y="2.5" width="5" height="2" fill="#e6e6e6"/><circle cx="9" cy="9" r="3" fill="#282828"/><circle cx="9" cy="9" r="1.6" fill="#e6e6e6"/></svg><div style="position:absolute;left:1609px;top:149px;width:1px;height:90px;background:#4a4a4a;border-radius:0px;"></div><svg style="position:absolute;left:1626px;top:149.0px;" width="8" height="10" viewBox="0 0 8 10"><path d="M2.2 1.5 L5.8 5 L2.2 8.5" stroke="#b0b0b0" stroke-width="1.1" fill="none"/></svg><svg style="position:absolute;left:1642px;top:146.0px;" width="16" height="16" viewBox="0 0 16 16"><path fill-rule="evenodd" d="M1.5 1.5 H14.5 Q15.5 1.5 15 2.5 L8.8 14.5 Q8 15.8 7.2 14.5 L1 2.5 Q0.5 1.5 1.5 1.5 Z M5.3 4.3 H10.7 L8 9.8 Z" fill="#e8913a" opacity="1.0"/></svg><div class="t" style="left:1664.25px;top:144.73px;font-size:11.6px;color:#e6e6e6;">Plane</div><svg style="position:absolute;left:1714.75px;top:146.0px;" width="17" height="16" viewBox="0 0 17 16"><g opacity="1.0"><path d="M3.3 3 H13.4 L8.3 13 Z" stroke="#33b585" stroke-width="1" fill="none"/><rect x="1.8" y="1.5" width="3" height="3" fill="#282828" stroke="#33b585" stroke-width="1"/><rect x="11.9" y="1.5" width="3" height="3" fill="#282828" stroke="#33b585" stroke-width="1"/><rect x="6.8" y="11.5" width="3" height="3" fill="#282828" stroke="#33b585" stroke-width="1"/></g></svg><svg style="position:absolute;left:1869px;top:146.0px;" width="18" height="16" viewBox="0 0 18 16"><path d="M2 8 Q9 1 16 8 Q9 15 2 8 Z" fill="#e6e6e6"/><circle cx="9" cy="8" r="2.5" fill="#282828"/><circle cx="9" cy="8" r="1.2" fill="#e6e6e6"/></svg><svg style="position:absolute;left:1889px;top:146.0px;" width="18" height="16" viewBox="0 0 18 16"><rect x="2" y="4" width="14" height="10" rx="1.5" fill="#e6e6e6"/><rect x="5.5" y="2.5" width="5" height="2" fill="#e6e6e6"/><circle cx="9" cy="9" r="3" fill="#282828"/><circle cx="9" cy="9" r="1.6" fill="#e6e6e6"/></svg><svg style="position:absolute;left:1626px;top:169.0px;" width="8" height="10" viewBox="0 0 8 10"><path d="M2.2 1.5 L5.8 5 L2.2 8.5" stroke="#b0b0b0" stroke-width="1.1" fill="none"/></svg><div style="position:absolute;left:1640px;top:165.0px;width:20px;height:19px;background:#505050;border-radius:4px;box-shadow:inset 0 0 0 1px #666"></div><svg style="position:absolute;left:1642px;top:166.0px;" width="16" height="16" viewBox="0 0 16 16"><path fill-rule="evenodd" d="M1.5 1.5 H14.5 Q15.5 1.5 15 2.5 L8.8 14.5 Q8 15.8 7.2 14.5 L1 2.5 Q0.5 1.5 1.5 1.5 Z M5.3 4.3 H10.7 L8 9.8 Z" fill="#e8913a" opacity="0.55"/></svg><div class="t" style="left:1664.25px;top:164.73px;font-size:11.6px;color:#8e8e8e;">tentacleBaseLink</div><svg style="position:absolute;left:1774.5px;top:166.0px;" width="17" height="16" viewBox="0 0 17 16"><g opacity="0.65"><path d="M3.3 3 H13.4 L8.3 13 Z" stroke="#33b585" stroke-width="1" fill="none"/><rect x="1.8" y="1.5" width="3" height="3" fill="#282828" stroke="#33b585" stroke-width="1"/><rect x="11.9" y="1.5" width="3" height="3" fill="#282828" stroke="#33b585" stroke-width="1"/><rect x="6.8" y="11.5" width="3" height="3" fill="#282828" stroke="#33b585" stroke-width="1"/></g></svg><svg style="position:absolute;left:1869px;top:166.0px;" width="18" height="16" viewBox="0 0 18 16"><path d="M3 6 Q9 12 15 6" stroke="#bdbdbd" stroke-width="1.2" fill="none"/></svg><svg style="position:absolute;left:1889px;top:166.0px;" width="18" height="16" viewBox="0 0 18 16"><rect x="2" y="4" width="14" height="10" rx="1.5" fill="#e6e6e6"/><rect x="5.5" y="2.5" width="5" height="2" fill="#e6e6e6"/><circle cx="9" cy="9" r="3" fill="#282828"/><circle cx="9" cy="9" r="1.6" fill="#e6e6e6"/></svg><svg style="position:absolute;left:1626px;top:189.0px;" width="8" height="10" viewBox="0 0 8 10"><path d="M2.2 1.5 L5.8 5 L2.2 8.5" stroke="#b0b0b0" stroke-width="1.1" fill="none"/></svg><svg style="position:absolute;left:1642px;top:186.0px;" width="16" height="16" viewBox="0 0 16 16"><path fill-rule="evenodd" d="M1.5 1.5 H14.5 Q15.5 1.5 15 2.5 L8.8 14.5 Q8 15.8 7.2 14.5 L1 2.5 Q0.5 1.5 1.5 1.5 Z M5.3 4.3 H10.7 L8 9.8 Z" fill="#e8913a" opacity="0.55"/></svg><div class="t" style="left:1664.25px;top:184.73px;font-size:11.6px;color:#8e8e8e;">tentacleLinkJoint</div><svg style="position:absolute;left:1777px;top:186.0px;" width="17" height="16" viewBox="0 0 17 16"><g opacity="0.65"><path d="M3.3 3 H13.4 L8.3 13 Z" stroke="#33b585" stroke-width="1" fill="none"/><rect x="1.8" y="1.5" width="3" height="3" fill="#282828" stroke="#33b585" stroke-width="1"/><rect x="11.9" y="1.5" width="3" height="3" fill="#282828" stroke="#33b585" stroke-width="1"/><rect x="6.8" y="11.5" width="3" height="3" fill="#282828" stroke="#33b585" stroke-width="1"/></g></svg><svg style="position:absolute;left:1869px;top:186.0px;" width="18" height="16" viewBox="0 0 18 16"><path d="M3 6 Q9 12 15 6" stroke="#bdbdbd" stroke-width="1.2" fill="none"/></svg><svg style="position:absolute;left:1889px;top:186.0px;" width="18" height="16" viewBox="0 0 18 16"><rect x="2" y="4" width="14" height="10" rx="1.5" fill="#e6e6e6"/><rect x="5.5" y="2.5" width="5" height="2" fill="#e6e6e6"/><circle cx="9" cy="9" r="3" fill="#282828"/><circle cx="9" cy="9" r="1.6" fill="#e6e6e6"/></svg><svg style="position:absolute;left:1626px;top:209.0px;" width="8" height="10" viewBox="0 0 8 10"><path d="M2.2 1.5 L5.8 5 L2.2 8.5" stroke="#b0b0b0" stroke-width="1.1" fill="none"/></svg><svg style="position:absolute;left:1642px;top:206.0px;" width="16" height="16" viewBox="0 0 16 16"><path fill-rule="evenodd" d="M1.5 1.5 H14.5 Q15.5 1.5 15 2.5 L8.8 14.5 Q8 15.8 7.2 14.5 L1 2.5 Q0.5 1.5 1.5 1.5 Z M5.3 4.3 H10.7 L8 9.8 Z" fill="#e8913a" opacity="0.55"/></svg><div class="t" style="left:1664.25px;top:204.73px;font-size:11.6px;color:#8e8e8e;">tentacleLinkJoint.001</div><svg style="position:absolute;left:1800.75px;top:206.0px;" width="17" height="16" viewBox="0 0 17 16"><g opacity="0.65"><path d="M3.3 3 H13.4 L8.3 13 Z" stroke="#33b585" stroke-width="1" fill="none"/><rect x="1.8" y="1.5" width="3" height="3" fill="#282828" stroke="#33b585" stroke-width="1"/><rect x="11.9" y="1.5" width="3" height="3" fill="#282828" stroke="#33b585" stroke-width="1"/><rect x="6.8" y="11.5" width="3" height="3" fill="#282828" stroke="#33b585" stroke-width="1"/></g></svg><svg style="position:absolute;left:1869px;top:206.0px;" width="18" height="16" viewBox="0 0 18 16"><path d="M3 6 Q9 12 15 6" stroke="#bdbdbd" stroke-width="1.2" fill="none"/></svg><svg style="position:absolute;left:1889px;top:206.0px;" width="18" height="16" viewBox="0 0 18 16"><rect x="2" y="4" width="14" height="10" rx="1.5" fill="#e6e6e6"/><rect x="5.5" y="2.5" width="5" height="2" fill="#e6e6e6"/><circle cx="9" cy="9" r="3" fill="#282828"/><circle cx="9" cy="9" r="1.6" fill="#e6e6e6"/></svg><svg style="position:absolute;left:1626px;top:229.0px;" width="8" height="10" viewBox="0 0 8 10"><path d="M2.2 1.5 L5.8 5 L2.2 8.5" stroke="#b0b0b0" stroke-width="1.1" fill="none"/></svg><svg style="position:absolute;left:1642px;top:226.0px;" width="16" height="16" viewBox="0 0 16 16"><path fill-rule="evenodd" d="M1.5 1.5 H14.5 Q15.5 1.5 15 2.5 L8.8 14.5 Q8 15.8 7.2 14.5 L1 2.5 Q0.5 1.5 1.5 1.5 Z M5.3 4.3 H10.7 L8 9.8 Z" fill="#e8913a" opacity="0.55"/></svg><div class="t" style="left:1664.25px;top:224.73px;font-size:11.6px;color:#8e8e8e;">tentacleTipNode</div><svg style="position:absolute;left:1793px;top:226.0px;" width="17" height="16" viewBox="0 0 17 16"><g opacity="0.65"><path d="M3.3 3 H13.4 L8.3 13 Z" stroke="#33b585" stroke-width="1" fill="none"/><rect x="1.8" y="1.5" width="3" height="3" fill="#282828" stroke="#33b585" stroke-width="1"/><rect x="11.9" y="1.5" width="3" height="3" fill="#282828" stroke="#33b585" stroke-width="1"/><rect x="6.8" y="11.5" width="3" height="3" fill="#282828" stroke="#33b585" stroke-width="1"/></g></svg><svg style="position:absolute;left:1773px;top:226.0px;" width="16" height="16" viewBox="0 0 16 16"><path d="M3 3 H9 L6 10 L10 13 H14 M12 11 L14 13 L12 15" stroke="#a8a8a8" stroke-width="1.1" fill="none"/></svg><svg style="position:absolute;left:1869px;top:226.0px;" width="18" height="16" viewBox="0 0 18 16"><path d="M3 6 Q9 12 15 6" stroke="#bdbdbd" stroke-width="1.2" fill="none"/></svg><svg style="position:absolute;left:1889px;top:226.0px;" width="18" height="16" viewBox="0 0 18 16"><rect x="2" y="4" width="14" height="10" rx="1.5" fill="#e6e6e6"/><rect x="5.5" y="2.5" width="5" height="2" fill="#e6e6e6"/><circle cx="9" cy="9" r="3" fill="#282828"/><circle cx="9" cy="9" r="1.6" fill="#e6e6e6"/></svg><div style="position:absolute;left:1579px;top:401px;width:339px;height:629px;background:#2b2b2b;border-radius:6px;"></div><div style="position:absolute;left:1579px;top:401px;width:339px;height:26px;background:#2d2d2d;border-radius:0px;border-radius:6px 6px 0 0"></div><div style="position:absolute;left:1580px;top:427px;width:28px;height:603px;background:#171717;border-radius:0px;border-radius:0 0 0 6px"></div><div style="position:absolute;left:1580px;top:427px;width:28px;height:37px;background:#1c1c1c;border-radius:0px;"></div><div style="position:absolute;left:1580px;top:468px;width:28px;height:141px;background:#1c1c1c;border-radius:0px;"></div><div style="position:absolute;left:1580px;top:614px;width:28px;height:35px;background:#1c1c1c;border-radius:0px;"></div><div style="position:absolute;left:1580px;top:653px;width:28px;height:197px;background:#1c1c1c;border-radius:0px;"></div><div style="position:absolute;left:1590px;top:404px;width:29px;height:18px;background:#262626;border-radius:4px;box-shadow:inset 0 0 0 1px #2f2f2f"></div><svg style="position:absolute;left:1591px;top:404px;" width="20" height="18" viewBox="0 0 20 18"><rect x="2" y="2.5" width="13.5" height="5.5" rx="2.75" fill="#e6e6e6"/><rect x="7" y="3.6" width="7.4" height="3.3" rx="1.6" fill="#262626"/><rect x="2" y="10" width="13.5" height="5.5" rx="2.75" fill="#e6e6e6"/><rect x="9.5" y="11.1" width="4.9" height="3.3" rx="1.6" fill="#262626"/></svg><svg style="position:absolute;left:1608px;top:409px;" width="10" height="8" viewBox="0 0 10 8"><path d="M1.5 2.2 L5 5.8 L8.5 2.2" stroke="#d0d0d0" stroke-width="1.2" fill="none"/></svg><div style="position:absolute;left:1691px;top:404px;width:117px;height:18px;background:#1d1d1d;border-radius:4px;box-shadow:inset 0 0 0 1px #2f2f2f"></div><svg style="position:absolute;left:1694px;top:404px;" width="18" height="18" viewBox="0 0 18 18"><circle cx="7.5" cy="7.5" r="4.3" stroke="#d8d8d8" stroke-width="1.2" fill="none"/><path d="M10.5 10.5 L14.5 14.5" stroke="#d8d8d8" stroke-width="1.3"/></svg><div class="t" style="left:1716.4px;top:403.18px;font-size:11.6px;color:#6c6c6c;">Search</div><div style="position:absolute;left:1891px;top:404px;width:18px;height:18px;background:#262626;border-radius:4px;box-shadow:inset 0 0 0 1px #2f2f2f"></div><svg style="position:absolute;left:1895px;top:409px;" width="10" height="8" viewBox="0 0 10 8"><path d="M1.5 2.2 L5 5.8 L8.5 2.2" stroke="#d0d0d0" stroke-width="1.2" fill="none"/></svg><svg style="position:absolute;left:1587px;top:440.2px;" width="16" height="16" viewBox="0 0 16 16"><path d="M4 2 V8 M3 10 H5 V14 H3 Z" stroke="#d8d8d8" stroke-width="1.2" fill="#d8d8d8"/><path d="M10 2 V5 Q12 8 14 5 V2 M12 7 V14" stroke="#d8d8d8" stroke-width="1.6" fill="none"/></svg><svg style="position:absolute;left:1587px;top:476.8px;" width="16" height="16" viewBox="0 0 16 16"><rect x="2" y="5" width="12" height="9" rx="1" stroke="#d8d8d8" stroke-width="1.3" fill="none"/><rect x="4" y="3" width="5" height="2" fill="#d8d8d8"/><path d="M4 8 H10 M4 11 H10 M12 8 V11" stroke="#d8d8d8" stroke-width="1.2"/></svg><svg style="position:absolute;left:1587px;top:505.1px;" width="16" height="16" viewBox="0 0 16 16"><rect x="2" y="2" width="12" height="4" fill="#d8d8d8"/><path d="M4 6 V14 H12 V6" stroke="#d8d8d8" stroke-width="1.4" fill="none"/><path d="M5 13 L8 9 L11 13 Z" fill="#d8d8d8"/></svg><svg style="position:absolute;left:1587px;top:532.6px;" width="16" height="16" viewBox="0 0 16 16"><path d="M2 6 V16 H11 M3.8 4.5 V14.2 H13" stroke="#d8d8d8" stroke-width="0.9" fill="none"/><rect x="5.5" y="2" width="9.5" height="10.5" stroke="#e0e0e0" stroke-width="1.1" fill="none"/><path d="M6.5 11.5 L9 6 L10.5 9 L11.5 8 L14 11.5 Z" fill="#e0e0e0"/><circle cx="12.5" cy="4.5" r="1" fill="#e0e0e0"/></svg><svg style="position:absolute;left:1587px;top:560px;" width="16" height="16" viewBox="0 0 16 16"><path d="M2 13 L6 3 L8 13 Z" fill="#d8d8d8"/><circle cx="10" cy="11" r="3.3" fill="none" stroke="#d8d8d8" stroke-width="1.2"/><circle cx="12.5" cy="4" r="1.8" fill="#d8d8d8"/></svg><svg style="position:absolute;left:1587px;top:588.4px;" width="16" height="16" viewBox="0 0 16 16"><circle cx="8" cy="8.5" r="6" fill="#9c4460"/><path d="M4 6 Q7 5 7 8 Q5 10 6 13 M9 3.5 Q10 6 13 6.5 M10 11 Q12 10 13 12" stroke="#1c1c1c" stroke-width="1.3" fill="none"/><path d="M2 14 L14 2" stroke="#9c4460" stroke-width="1" opacity="0.7"/></svg><svg style="position:absolute;left:1587px;top:623.8px;" width="16" height="16" viewBox="0 0 16 16"><rect x="2" y="2" width="12" height="2.5" fill="#e0e0e0"/><rect x="3" y="5.5" width="10" height="8" fill="#e0e0e0"/><rect x="6" y="7" width="4" height="1.5" fill="#1f1f1f"/></svg><svg style="position:absolute;left:1587px;top:660.3px;" width="16" height="16" viewBox="0 0 16 16"><path d="M2 5 V2 H5 M11 2 H14 V5 M14 11 V14 H11 M5 14 H2 V11" stroke="#d8d8d8" stroke-width="1" fill="none"/><rect x="4" y="4" width="8" height="8" fill="#e8913a"/></svg><svg style="position:absolute;left:1587px;top:688.7px;" width="16" height="16" viewBox="0 0 16 16"><path d="M3 13 L9 7 M8 4 A3.5 3.5 0 1 0 12 8 L10 7.5 L8.5 6 Z" stroke="#7a98e0" stroke-width="2.2" fill="#7a98e0" stroke-linecap="round"/></svg><svg style="position:absolute;left:1587px;top:717px;" width="16" height="16" viewBox="0 0 16 16"><circle cx="4" cy="4" r="2" fill="#7a98e0"/><circle cx="4" cy="13" r="1.6" fill="#7a98e0"/><circle cx="13" cy="13" r="1.6" fill="#7a98e0"/><circle cx="13" cy="5" r="1.3" fill="#7a98e0"/><path d="M4 4 V13 M4 4 L13 13 M4 4 H13" stroke="#7a98e0" stroke-width="1"/></svg><div style="position:absolute;left:1583px;top:740px;width:25px;height:25px;background:#2c2c2c;border-radius:0px;border-radius:4px 0 0 4px"></div><svg style="position:absolute;left:1587px;top:744.4px;" width="16" height="16" viewBox="0 0 16 16"><circle cx="7.5" cy="9" r="5" stroke="#7a98e0" stroke-width="1.3" fill="none"/><circle cx="7.5" cy="9" r="2.5" fill="#9ab4f0"/><circle cx="13" cy="4" r="1.5" fill="#7a98e0"/></svg><svg style="position:absolute;left:1587px;top:772.8px;" width="16" height="16" viewBox="0 0 16 16"><ellipse cx="8" cy="9" rx="5.5" ry="4.5" transform="rotate(-40 8 9)" stroke="#7a98e0" stroke-width="1.4" fill="none"/><circle cx="7" cy="10" r="2" stroke="#7a98e0" stroke-width="1.3" fill="none"/></svg><svg style="position:absolute;left:1587px;top:800.2px;" width="16" height="16" viewBox="0 0 16 16"><path d="M3.5 4 H12.5 L8 13 Z" stroke="#27b07a" stroke-width="1.2" fill="none"/><rect x="1.5" y="2" width="4" height="4" fill="#1f1f1f" stroke="#27b07a" stroke-width="1"/><rect x="10.5" y="2" width="4" height="4" fill="#1f1f1f" stroke="#27b07a" stroke-width="1"/><rect x="6" y="11" width="4" height="4" fill="#1f1f1f" stroke="#27b07a" stroke-width="1"/></svg><svg style="position:absolute;left:1587px;top:828.7px;" width="16" height="16" viewBox="0 0 16 16"><circle cx="8" cy="8" r="6" fill="#a8486a"/><path d="M8 2 V8 H14" stroke="#f0f0f0" stroke-width="0" fill="none"/><path d="M8 8 V14 A6 6 0 0 1 2 8 Z M8 8 V2 A6 6 0 0 1 14 8 Z" fill="#f0e8ec"/></svg><svg style="position:absolute;left:1590px;top:864px;" width="10" height="8" viewBox="0 0 10 8"><path d="M1.5 2.2 L5 5.8 L8.5 2.2" stroke="#5a5a5a" stroke-width="1.2" fill="none"/></svg><svg style="position:absolute;left:1618px;top:436px;" width="16" height="16" viewBox="0 0 16 16"><path d="M2 5 V2 H5 M11 2 H14 V5 M14 11 V14 H11 M5 14 H2 V11" stroke="#d8d8d8" stroke-width="1" fill="none"/><rect x="4" y="4" width="8" height="8" fill="#e6e6e6"/></svg><div class="t" style="left:1642px;top:435.08px;font-size:11.6px;color:#e6e6e6;">tentacleBaseLink</div><svg style="position:absolute;left:1891px;top:436px;" width="16" height="16" viewBox="0 0 16 16"><path d="M2 14 L6 10 M5 6 L10 11 M7 4 L12 9 L13 5 Z" stroke="#9a9a9a" stroke-width="1.2" fill="none"/></svg><div style="position:absolute;left:1617px;top:472px;width:141px;height:18px;background:#4d4d4d;border-radius:4px;box-shadow:0 1px 1px rgba(0,0,0,0.25)"></div><div style="position:absolute;left:1768px;top:472px;width:141px;height:18px;background:#4d4d4d;border-radius:4px;box-shadow:0 1px 1px rgba(0,0,0,0.25)"></div><div class="t" style="left:1626.3px;width:140px;text-align:center;top:470.98px;font-size:11.6px;color:#e6e6e6;">Force Field</div><div class="t" style="left:1777.0px;width:140px;text-align:center;top:470.98px;font-size:11.6px;color:#e6e6e6;">Soft Body</div><div style="position:absolute;left:1617px;top:494px;width:141px;height:18px;background:#4d4d4d;border-radius:4px;box-shadow:0 1px 1px rgba(0,0,0,0.25)"></div><div style="position:absolute;left:1768px;top:494px;width:141px;height:18px;background:#4d4d4d;border-radius:4px;box-shadow:0 1px 1px rgba(0,0,0,0.25)"></div><div class="t" style="left:1626.3px;width:140px;text-align:center;top:492.98px;font-size:11.6px;color:#e6e6e6;">Collision</div><div class="t" style="left:1777.0px;width:140px;text-align:center;top:492.98px;font-size:11.6px;color:#e6e6e6;">Fluid</div><div style="position:absolute;left:1617px;top:516px;width:141px;height:18px;background:#4d4d4d;border-radius:4px;box-shadow:0 1px 1px rgba(0,0,0,0.25)"></div><div style="position:absolute;left:1768px;top:516px;width:141px;height:18px;background:#4d4d4d;border-radius:4px;box-shadow:0 1px 1px rgba(0,0,0,0.25)"></div><div class="t" style="left:1626.3px;width:140px;text-align:center;top:514.98px;font-size:11.6px;color:#e6e6e6;">Cloth</div><div class="t" style="left:1777.0px;width:140px;text-align:center;top:514.98px;font-size:11.6px;color:#e6e6e6;">Rigid Body</div><div style="position:absolute;left:1617px;top:538px;width:141px;height:18px;background:#4d4d4d;border-radius:4px;box-shadow:0 1px 1px rgba(0,0,0,0.25)"></div><div style="position:absolute;left:1768px;top:538px;width:141px;height:18px;background:#4d4d4d;border-radius:4px;box-shadow:0 1px 1px rgba(0,0,0,0.25)"></div><div class="t" style="left:1626.3px;width:140px;text-align:center;top:536.98px;font-size:11.6px;color:#e6e6e6;">Dynamic Paint</div><div class="t" style="left:1789.5px;top:536.98px;font-size:11.6px;color:#e6e6e6;">Rigid Body Constraint</div><svg style="position:absolute;left:1620px;top:473px;" width="16" height="16" viewBox="0 0 16 16"><path d="M3 2 L6 5 L3 8 L6 11 L3 14 M7 2 L10 5 L7 8 L10 11 L7 14 M11 2 L14 5 L11 8 L14 11 L11 14" stroke="#d8d8d8" stroke-width="1" fill="none"/></svg><svg style="position:absolute;left:1771px;top:473px;" width="16" height="16" viewBox="0 0 16 16"><path d="M3 13 Q2 6 8 3 Q14 2 12 8 M5 13 Q7 7 12 4" stroke="#d8d8d8" stroke-width="1.1" fill="none"/><circle cx="12" cy="12" r="2.5" stroke="#d8d8d8" stroke-width="1" fill="none"/></svg><svg style="position:absolute;left:1620px;top:495px;" width="16" height="16" viewBox="0 0 16 16"><rect x="2" y="8" width="6" height="6" stroke="#d8d8d8" stroke-width="1.1" fill="none"/><rect x="7" y="2" width="7" height="7" stroke="#d8d8d8" stroke-width="1.1" fill="none"/><path d="M3 3 L5 5 M11 12 L13 14" stroke="#d8d8d8" stroke-width="1"/></svg><svg style="position:absolute;left:1771px;top:495px;" width="16" height="16" viewBox="0 0 16 16"><path d="M8 2 Q3 9 4 11 A4 4 0 0 0 12 11 Q13 9 8 2 Z" stroke="#d8d8d8" stroke-width="1.2" fill="none"/></svg><svg style="position:absolute;left:1620px;top:517px;" width="16" height="16" viewBox="0 0 16 16"><path d="M2 4 L6 2 Q8 4 10 2 L14 4 L13 7 L11.5 6.5 V14 H4.5 V6.5 L3 7 Z" stroke="#d8d8d8" stroke-width="1.1" fill="none"/></svg><svg style="position:absolute;left:1771px;top:517px;" width="16" height="16" viewBox="0 0 16 16"><path d="M4 4 L12 12 M12 4 L4 12" stroke="#d8d8d8" stroke-width="1.2"/></svg><svg style="position:absolute;left:1620px;top:539px;" width="16" height="16" viewBox="0 0 16 16"><path d="M3 13 Q2 8 7 8 Q12 8 13 10 Q10 12 7 11 Q5 12 4 14 Z" stroke="#d8d8d8" stroke-width="1.1" fill="none"/><circle cx="7" cy="3" r="1" fill="#d8d8d8"/><circle cx="10" cy="3" r="1" fill="#d8d8d8"/><circle cx="12.5" cy="5" r="1" fill="#d8d8d8"/></svg><svg style="position:absolute;left:1771px;top:539px;" width="16" height="16" viewBox="0 0 16 16"><path d="M2 3 H14 M5 3 V7 M11 3 V7 M6.5 5 V13 A1.5 1.5 0 0 0 9.5 13 V5" stroke="#d8d8d8" stroke-width="1.1" fill="none"/></svg><div style="position:absolute;left:1617px;top:567px;width:293px;height:412px;background:#393939;border-radius:5px;"></div><div style="position:absolute;left:1617px;top:652px;width:293px;height:79px;background:#353535;border-radius:0px;"></div><div style="position:absolute;left:1617px;top:757px;width:293px;height:81px;background:#353535;border-radius:0px;"></div><div style="position:absolute;left:1617px;top:894px;width:293px;height:35px;background:#353535;border-radius:0px;"></div><svg style="position:absolute;left:1625px;top:576.5px;" width="10" height="8" viewBox="0 0 10 8"><path d="M1.1499999999999995 2.0199999999999996 L5 5.98 L8.850000000000001 2.0199999999999996" stroke="#c8c8c8" stroke-width="1.1" fill="none"/></svg><div class="t" style="left:1638.4px;top:569.68px;font-size:11.6px;color:#e6e6e6;">Rigid Body</div><svg style="position:absolute;left:1888px;top:577px;" width="14" height="8" viewBox="0 0 14 8"><circle cx="1.5" cy="1.5" r="0.8" fill="#6a6a6a"/><circle cx="1.5" cy="5.5" r="0.8" fill="#6a6a6a"/><circle cx="5.0" cy="1.5" r="0.8" fill="#6a6a6a"/><circle cx="5.0" cy="5.5" r="0.8" fill="#6a6a6a"/><circle cx="8.5" cy="1.5" r="0.8" fill="#6a6a6a"/><circle cx="8.5" cy="5.5" r="0.8" fill="#6a6a6a"/><circle cx="12.0" cy="1.5" r="0.8" fill="#6a6a6a"/><circle cx="12.0" cy="5.5" r="0.8" fill="#6a6a6a"/></svg><div class="t" style="left:1573px;width:150px;text-align:right;top:599.98px;font-size:11.6px;color:#d6d6d6;">Type</div><div style="position:absolute;left:1733px;top:601px;width:148px;height:18px;background:#282828;border-radius:4px;box-shadow:0 1px 1px rgba(0,0,0,0.3)"></div><div class="t" style="left:1740.3px;top:599.98px;font-size:11.6px;color:#e6e6e6;">Active</div><svg style="position:absolute;left:1869px;top:606.5px;" width="10" height="8" viewBox="0 0 10 8"><path d="M1.5 2.2 L5 5.8 L8.5 2.2" stroke="#d0d0d0" stroke-width="1.2" fill="none"/></svg><svg style="position:absolute;left:1638.5px;top:637px;" width="10" height="8" viewBox="0 0 10 8"><path d="M1.5 2.2 L5 5.8 L8.5 2.2" stroke="#c8c8c8" stroke-width="1.1" fill="none"/></svg><div class="t" style="left:1652.3px;top:630.98px;font-size:11.6px;color:#e6e6e6;">Settings</div><div class="t" style="left:1572.6px;width:150px;text-align:right;top:661.38px;font-size:11.6px;color:#d6d6d6;">Mass</div><div style="position:absolute;left:1733px;top:662px;width:148px;height:18px;background:#545454;border-radius:4px;box-shadow:0 1px 1px rgba(0,0,0,0.25)"></div><div class="t" style="left:1736.7px;width:140px;text-align:center;top:660.98px;font-size:11.6px;color:#e6e6e6;">1 kg</div><svg style="position:absolute;left:1889px;top:668px;" width="6" height="6" viewBox="0 0 6 6"><circle cx="3" cy="3" r="2.2" fill="#e0e0e0"/></svg><div style="position:absolute;left:1733px;top:687px;width:12px;height:12px;background:#4772b3;border-radius:3px;"></div><svg style="position:absolute;left:1733px;top:687px;" width="12" height="12" viewBox="0 0 12 12"><path d="M2.5 6 L5 8.5 L9.5 3" stroke="#fff" stroke-width="1.6" fill="none"/></svg><div class="t" style="left:1749.2px;top:682.98px;font-size:11.6px;color:#e6e6e6;">Dynamic</div><svg style="position:absolute;left:1889px;top:690px;" width="6" height="6" viewBox="0 0 6 6"><circle cx="3" cy="3" r="2.2" fill="#e0e0e0"/></svg><div style="position:absolute;left:1733px;top:709px;width:12px;height:12px;background:#4e4e4e;border-radius:3px;"></div><div class="t" style="left:1749.2px;top:704.98px;font-size:11.6px;color:#e6e6e6;">Animated</div><svg style="position:absolute;left:1889px;top:712px;" width="6" height="6" viewBox="0 0 6 6"><circle cx="3" cy="3" r="2.2" fill="#e0e0e0"/></svg><svg style="position:absolute;left:1638.5px;top:741.8px;" width="10" height="8" viewBox="0 0 10 8"><path d="M1.5 2.2 L5 5.8 L8.5 2.2" stroke="#c8c8c8" stroke-width="1.1" fill="none"/></svg><div class="t" style="left:1652.3px;top:735.78px;font-size:11.6px;color:#e6e6e6;">Collisions</div><div class="t" style="left:1573px;width:150px;text-align:right;top:765.88px;font-size:11.6px;color:#d6d6d6;">Shape</div><div style="position:absolute;left:1733px;top:767px;width:148px;height:18px;background:#282828;border-radius:4px;box-shadow:0 1px 1px rgba(0,0,0,0.3)"></div><div class="t" style="left:1758px;top:765.98px;font-size:11.6px;color:#e6e6e6;">Mesh</div><svg style="position:absolute;left:1869px;top:772.5px;" width="10" height="8" viewBox="0 0 10 8"><path d="M1.5 2.2 L5 5.8 L8.5 2.2" stroke="#d0d0d0" stroke-width="1.2" fill="none"/></svg><svg style="position:absolute;left:1735px;top:768px;" width="17" height="17" viewBox="0 0 17 17"><path d="M5 4 Q8 1 11 4 Q15 4 14 8 Q12 10 12 12 L10 15 L9 12 L7 12 L6 15 L4 12 Q4 10 2 8 Q1 4 5 4 Z" stroke="#e0e0e0" stroke-width="1" fill="none"/></svg><div class="t" style="left:1573px;width:150px;text-align:right;top:790.68px;font-size:11.6px;color:#d6d6d6;">Source</div><div style="position:absolute;left:1733px;top:792px;width:148px;height:18px;background:#282828;border-radius:4px;box-shadow:0 1px 1px rgba(0,0,0,0.3)"></div><div class="t" style="left:1740.3px;top:790.98px;font-size:11.6px;color:#e6e6e6;">Deform</div><svg style="position:absolute;left:1869px;top:797.5px;" width="10" height="8" viewBox="0 0 10 8"><path d="M1.5 2.2 L5 5.8 L8.5 2.2" stroke="#d0d0d0" stroke-width="1.2" fill="none"/></svg><div style="position:absolute;left:1733px;top:820px;width:12px;height:12px;background:#4e4e4e;border-radius:3px;"></div><div class="t" style="left:1749.2px;top:815.98px;font-size:11.6px;color:#e6e6e6;">Deforming</div><svg style="position:absolute;left:1889px;top:823px;" width="6" height="6" viewBox="0 0 6 6"><circle cx="3" cy="3" r="2.2" fill="#e0e0e0"/></svg><svg style="position:absolute;left:1639.5px;top:852.1px;" width="8" height="10" viewBox="0 0 8 10"><path d="M2.2 1.5 L5.8 5 L2.2 8.5" stroke="#c8c8c8" stroke-width="1.1" fill="none"/></svg><div class="t" style="left:1652.3px;top:847.08px;font-size:11.6px;color:#e6e6e6;">Surface Response</div><svg style="position:absolute;left:1638.5px;top:878.2px;" width="10" height="8" viewBox="0 0 10 8"><path d="M1.5 2.2 L5 5.8 L8.5 2.2" stroke="#c8c8c8" stroke-width="1.1" fill="none"/></svg><div class="t" style="left:1652.3px;top:872.18px;font-size:11.6px;color:#e6e6e6;">Sensitivity</div><div class="t" style="left:1572.2px;width:150px;text-align:right;top:901.98px;font-size:11.6px;color:#d6d6d6;">Margin</div><div style="position:absolute;left:1733px;top:903px;width:148px;height:18px;background:#545454;border-radius:4px;box-shadow:0 1px 1px rgba(0,0,0,0.25)"></div><div class="t" style="left:1736.7px;width:140px;text-align:center;top:901.98px;font-size:11.6px;color:#e6e6e6;">0.04 m</div><svg style="position:absolute;left:1889px;top:909px;" width="6" height="6" viewBox="0 0 6 6"><circle cx="3" cy="3" r="2.2" fill="#e0e0e0"/></svg><svg style="position:absolute;left:1639.5px;top:938.1px;" width="8" height="10" viewBox="0 0 8 10"><path d="M2.2 1.5 L5.8 5 L2.2 8.5" stroke="#c8c8c8" stroke-width="1.1" fill="none"/></svg><div class="t" style="left:1652.3px;top:933.08px;font-size:11.6px;color:#e6e6e6;">Collections</div><svg style="position:absolute;left:1639.5px;top:963.2px;" width="8" height="10" viewBox="0 0 8 10"><path d="M2.2 1.5 L5.8 5 L2.2 8.5" stroke="#c8c8c8" stroke-width="1.1" fill="none"/></svg><div class="t" style="left:1652.3px;top:958.18px;font-size:11.6px;color:#e6e6e6;">Dynamics</div><div style="position:absolute;left:2px;top:963px;width:1574px;height:67px;background:#1d1d1d;border-radius:6px;"></div><div style="position:absolute;left:2px;top:963px;width:1574px;height:25px;background:#2e2e2e;border-radius:0px;border-radius:6px 6px 0 0"></div><div style="position:absolute;left:11px;top:967px;width:31px;height:18px;background:#262626;border-radius:4px;"></div><svg style="position:absolute;left:13px;top:967px;" width="22" height="18" viewBox="0 0 22 18"><circle cx="9" cy="9" r="6.5" fill="#e6e6e6"/><path d="M10.5 5 L7.5 9 L10.5 13" stroke="#262626" stroke-width="1.6" fill="none"/></svg><svg style="position:absolute;left:30px;top:972.5px;" width="10" height="8" viewBox="0 0 10 8"><path d="M1.5 2.2 L5 5.8 L8.5 2.2" stroke="#d0d0d0" stroke-width="1.2" fill="none"/></svg><div class="t" style="left:53.75px;top:965.98px;font-size:11.6px;color:#e0e0e0;">View</div><div class="t" style="left:95.4px;top:965.98px;font-size:11.6px;color:#e0e0e0;">Marker</div><div style="position:absolute;left:146px;top:967px;width:69px;height:18px;background:#262626;border-radius:4px;"></div><div class="t" style="left:152.25px;top:965.98px;font-size:11.6px;color:#e6e6e6;">Playback</div><svg style="position:absolute;left:203px;top:972.5px;" width="10" height="8" viewBox="0 0 10 8"><path d="M1.5 2.2 L5 5.8 L8.5 2.2" stroke="#d0d0d0" stroke-width="1.2" fill="none"/></svg><div style="position:absolute;left:642px;top:967px;width:35px;height:18px;background:#262626;border-radius:4px;"></div><div style="position:absolute;left:642px;top:967px;width:18px;height:18px;background:#4a4a4a;border-radius:0px;border-radius:4px 0 0 4px"></div><svg style="position:absolute;left:642px;top:967px;" width="18" height="18" viewBox="0 0 18 18"><circle cx="9" cy="9" r="4.8" stroke="#d8d8d8" stroke-width="1.1" fill="none"/></svg><svg style="position:absolute;left:664px;top:972.5px;" width="10" height="8" viewBox="0 0 10 8"><path d="M1.5 2.2 L5 5.8 L8.5 2.2" stroke="#5a5a5a" stroke-width="1.2" fill="none"/></svg><div style="position:absolute;left:687px;top:967px;width:118px;height:18px;background:#4a4a4a;border-radius:4px;"></div><div style="position:absolute;left:706.6px;top:967px;width:1px;height:18px;background:#3e3e3e;border-radius:0px;"></div><div style="position:absolute;left:726.2px;top:967px;width:1px;height:18px;background:#3e3e3e;border-radius:0px;"></div><div style="position:absolute;left:745.8px;top:967px;width:1px;height:18px;background:#3e3e3e;border-radius:0px;"></div><div style="position:absolute;left:765.4px;top:967px;width:1px;height:18px;background:#3e3e3e;border-radius:0px;"></div><div style="position:absolute;left:785.0px;top:967px;width:1px;height:18px;background:#3e3e3e;border-radius:0px;"></div><svg style="position:absolute;left:687.0px;top:967px;" width="19" height="18" viewBox="0 0 19 18"><path d="M5 4 V14" stroke="#e8e8e8" stroke-width="2"/><path d="M14 4 V14 L7 9 Z" fill="#e8e8e8"/></svg><svg style="position:absolute;left:706.6px;top:967px;" width="19" height="18" viewBox="0 0 19 18"><path d="M5.5 5 L9.5 9 L5.5 13 L1.5 9 Z M17 4.5 V13.5 L11 9 Z" fill="#e8e8e8"/></svg><svg style="position:absolute;left:726.2px;top:967px;" width="19" height="18" viewBox="0 0 19 18"><path d="M14 3.5 V14.5 L5 9 Z" fill="#e8e8e8"/></svg><svg style="position:absolute;left:745.8px;top:967px;" width="19" height="18" viewBox="0 0 19 18"><path d="M5.5 3.5 V14.5 L14.5 9 Z" fill="#e8e8e8"/></svg><svg style="position:absolute;left:765.4px;top:967px;" width="19" height="18" viewBox="0 0 19 18"><path d="M2 4.5 V13.5 L8 9 Z M13.5 5 L17.5 9 L13.5 13 L9.5 9 Z" fill="#e8e8e8"/></svg><svg style="position:absolute;left:785.0px;top:967px;" width="19" height="18" viewBox="0 0 19 18"><path d="M4 4 V14 L11 9 Z" fill="#e8e8e8"/><path d="M13.5 4 V14" stroke="#e8e8e8" stroke-width="2"/></svg><div style="position:absolute;left:812px;top:967px;width:58px;height:18px;background:#262626;border-radius:4px;"></div><div style="position:absolute;left:812px;top:967px;width:38px;height:18px;background:#4a4a4a;border-radius:0px;border-radius:4px 0 0 4px"></div><div style="position:absolute;left:831px;top:967px;width:1px;height:18px;background:#3e3e3e;border-radius:0px;"></div><svg style="position:absolute;left:812px;top:967px;" width="19" height="18" viewBox="0 0 19 18"><path d="M12 4 V14 L5 9 Z" fill="#e8e8e8"/><path d="M14.5 4.5 V13.5" stroke="#e8e8e8" stroke-width="2"/></svg><svg style="position:absolute;left:831px;top:967px;" width="19" height="18" viewBox="0 0 19 18"><path d="M4.5 4.5 V13.5" stroke="#e8e8e8" stroke-width="2"/><path d="M7 4 V14 L14 9 Z" fill="#e8e8e8"/></svg><svg style="position:absolute;left:855px;top:972.5px;" width="10" height="8" viewBox="0 0 10 8"><path d="M1.5 2.2 L5 5.8 L8.5 2.2" stroke="#d0d0d0" stroke-width="1.2" fill="none"/></svg><div style="position:absolute;left:877px;top:967px;width:37px;height:18px;background:#262626;border-radius:4px;"></div><div style="position:absolute;left:877px;top:967px;width:18px;height:18px;background:#4a4a4a;border-radius:0px;border-radius:4px 0 0 4px"></div><svg style="position:absolute;left:877px;top:967px;" width="18" height="18" viewBox="0 0 18 18"><path d="M4 13 V9 A5 5 0 0 1 14 9 V13 M6.5 13 V9 A2.5 2.5 0 0 1 11.5 9 V13" stroke="#d8d8d8" stroke-width="1" fill="none"/><path d="M3 15 H15" stroke="#d8d8d8" stroke-width="1"/></svg><svg style="position:absolute;left:900px;top:972.5px;" width="10" height="8" viewBox="0 0 10 8"><path d="M1.5 2.2 L5 5.8 L8.5 2.2" stroke="#d0d0d0" stroke-width="1.2" fill="none"/></svg><div style="position:absolute;left:1238px;top:967px;width:74px;height:18px;background:#4e4e4e;border-radius:4px;"></div><div class="t" style="left:1243.3px;width:60px;text-align:center;top:965.98px;font-size:11.6px;color:#e6e6e6;">1</div><div style="position:absolute;left:1318px;top:967px;width:192px;height:18px;background:#4e4e4e;border-radius:4px;"></div><div style="position:absolute;left:1318px;top:967px;width:19px;height:18px;background:#383838;border-radius:0px;border-radius:4px 0 0 4px"></div><div style="position:absolute;left:1425px;top:967px;width:1px;height:18px;background:#3a3a3a;border-radius:0px;"></div><svg style="position:absolute;left:1318px;top:967px;" width="19" height="18" viewBox="0 0 19 18"><circle cx="9.5" cy="10" r="5.3" stroke="#d8d8d8" stroke-width="1.1" fill="none"/><path d="M9.5 10 V7 M8 3 H11 M14 5 L15 4" stroke="#d8d8d8" stroke-width="1.1"/></svg><div class="t" style="left:1352.3px;top:965.98px;font-size:11.6px;color:#e6e6e6;">Start</div><div class="t" style="left:1372.5px;width:40px;text-align:right;top:965.98px;font-size:11.6px;color:#e6e6e6;">1</div><div class="t" style="left:1441px;top:965.98px;font-size:11.6px;color:#e6e6e6;">End</div><div class="t" style="left:1457.5px;width:40px;text-align:right;top:965.98px;font-size:11.6px;color:#e6e6e6;">130</div><div style="position:absolute;left:1528px;top:967px;width:39px;height:18px;background:#262626;border-radius:4px;"></div><div style="position:absolute;left:1528px;top:967px;width:19px;height:18px;background:#4772b3;border-radius:0px;border-radius:4px 0 0 4px"></div><svg style="position:absolute;left:1528px;top:967px;" width="19" height="18" viewBox="0 0 19 18"><circle cx="7.5" cy="11" r="4.3" stroke="#f0f0f0" stroke-width="1.2" fill="none"/><circle cx="11" cy="7" r="4.6" fill="#f0f0f0"/></svg><svg style="position:absolute;left:1552px;top:972.5px;" width="10" height="8" viewBox="0 0 10 8"><path d="M1.5 2.2 L5 5.8 L8.5 2.2" stroke="#d0d0d0" stroke-width="1.2" fill="none"/></svg><div style="position:absolute;left:2px;top:1011px;width:1574px;height:19px;background:#1d1d1d;border-radius:0px;border-radius:0 0 6px 6px"></div><div style="position:absolute;left:62px;top:1019px;width:1508px;height:11px;background:#262626;border-radius:0px;"></div><div style="position:absolute;left:61px;top:1019px;width:755px;height:11px;background:#2c2c2c;border-radius:0px;"></div><div style="position:absolute;left:62px;top:1024px;width:1508px;height:5px;background:rgba(255,255,255,0.025);border-radius:0px;"></div><svg style="position:absolute;left:0px;top:0px;pointer-events:none" width="1580" height="1054" viewBox="0 0 1580 1054"><line x1="125.0" y1="1011" x2="125.0" y2="1030" stroke="#181818" stroke-width="1"/><line x1="195.2" y1="1011" x2="195.2" y2="1030" stroke="#181818" stroke-width="1"/><line x1="265.4" y1="1011" x2="265.4" y2="1030" stroke="#181818" stroke-width="1"/><line x1="335.6" y1="1011" x2="335.6" y2="1030" stroke="#181818" stroke-width="1"/><line x1="405.8" y1="1011" x2="405.8" y2="1030" stroke="#181818" stroke-width="1"/><line x1="476.0" y1="1011" x2="476.0" y2="1030" stroke="#181818" stroke-width="1"/><line x1="546.2" y1="1011" x2="546.2" y2="1030" stroke="#181818" stroke-width="1"/><line x1="616.4" y1="1011" x2="616.4" y2="1030" stroke="#181818" stroke-width="1"/><line x1="686.6" y1="1011" x2="686.6" y2="1030" stroke="#181818" stroke-width="1"/><line x1="756.8" y1="1011" x2="756.8" y2="1030" stroke="#181818" stroke-width="1"/><line x1="827.0" y1="1011" x2="827.0" y2="1030" stroke="#181818" stroke-width="1"/><line x1="897.3" y1="1011" x2="897.3" y2="1030" stroke="#181818" stroke-width="1"/><line x1="967.5" y1="1011" x2="967.5" y2="1030" stroke="#181818" stroke-width="1"/><line x1="1037.7" y1="1011" x2="1037.7" y2="1030" stroke="#181818" stroke-width="1"/><line x1="1107.9" y1="1011" x2="1107.9" y2="1030" stroke="#181818" stroke-width="1"/><line x1="1178.1" y1="1011" x2="1178.1" y2="1030" stroke="#181818" stroke-width="1"/><line x1="1248.3" y1="1011" x2="1248.3" y2="1030" stroke="#181818" stroke-width="1"/><line x1="1318.5" y1="1011" x2="1318.5" y2="1030" stroke="#181818" stroke-width="1"/><line x1="1388.7" y1="1011" x2="1388.7" y2="1030" stroke="#181818" stroke-width="1"/><line x1="1458.9" y1="1011" x2="1458.9" y2="1030" stroke="#181818" stroke-width="1"/><line x1="1529.1" y1="1011" x2="1529.1" y2="1030" stroke="#181818" stroke-width="1"/><line x1="89.9" y1="1019" x2="89.9" y2="1030" stroke="#242424" stroke-width="1"/><line x1="160.1" y1="1019" x2="160.1" y2="1030" stroke="#242424" stroke-width="1"/><line x1="230.3" y1="1019" x2="230.3" y2="1030" stroke="#242424" stroke-width="1"/><line x1="300.5" y1="1019" x2="300.5" y2="1030" stroke="#242424" stroke-width="1"/><line x1="370.7" y1="1019" x2="370.7" y2="1030" stroke="#242424" stroke-width="1"/><line x1="440.9" y1="1019" x2="440.9" y2="1030" stroke="#242424" stroke-width="1"/><line x1="511.1" y1="1019" x2="511.1" y2="1030" stroke="#242424" stroke-width="1"/><line x1="581.3" y1="1019" x2="581.3" y2="1030" stroke="#242424" stroke-width="1"/><line x1="651.5" y1="1019" x2="651.5" y2="1030" stroke="#242424" stroke-width="1"/><line x1="721.7" y1="1019" x2="721.7" y2="1030" stroke="#242424" stroke-width="1"/><line x1="791.9" y1="1019" x2="791.9" y2="1030" stroke="#242424" stroke-width="1"/><line x1="862.1" y1="1019" x2="862.1" y2="1030" stroke="#242424" stroke-width="1"/><line x1="932.4" y1="1019" x2="932.4" y2="1030" stroke="#242424" stroke-width="1"/><line x1="1002.6" y1="1019" x2="1002.6" y2="1030" stroke="#242424" stroke-width="1"/><line x1="1072.8" y1="1019" x2="1072.8" y2="1030" stroke="#242424" stroke-width="1"/><line x1="1143.0" y1="1019" x2="1143.0" y2="1030" stroke="#242424" stroke-width="1"/><line x1="1213.2" y1="1019" x2="1213.2" y2="1030" stroke="#242424" stroke-width="1"/><line x1="1283.4" y1="1019" x2="1283.4" y2="1030" stroke="#242424" stroke-width="1"/><line x1="1353.6" y1="1019" x2="1353.6" y2="1030" stroke="#242424" stroke-width="1"/><line x1="1423.8" y1="1019" x2="1423.8" y2="1030" stroke="#242424" stroke-width="1"/><line x1="1494.0" y1="1019" x2="1494.0" y2="1030" stroke="#242424" stroke-width="1"/><line x1="1564.2" y1="1019" x2="1564.2" y2="1030" stroke="#242424" stroke-width="1"/></svg><div class="t" style="left:104.95769999999999px;width:40px;text-align:center;top:991.02px;font-size:11.5px;color:#a6a6a6;">12</div><div class="t" style="left:175.1661px;width:40px;text-align:center;top:991.02px;font-size:11.5px;color:#a6a6a6;">24</div><div class="t" style="left:245.3745px;width:40px;text-align:center;top:991.02px;font-size:11.5px;color:#a6a6a6;">36</div><div class="t" style="left:315.5829px;width:40px;text-align:center;top:991.02px;font-size:11.5px;color:#a6a6a6;">48</div><div class="t" style="left:385.79130000000004px;width:40px;text-align:center;top:991.02px;font-size:11.5px;color:#a6a6a6;">60</div><div class="t" style="left:455.9997px;width:40px;text-align:center;top:991.02px;font-size:11.5px;color:#a6a6a6;">72</div><div class="t" style="left:526.2081px;width:40px;text-align:center;top:991.02px;font-size:11.5px;color:#a6a6a6;">84</div><div class="t" style="left:596.4165px;width:40px;text-align:center;top:991.02px;font-size:11.5px;color:#a6a6a6;">96</div><div class="t" style="left:666.6249px;width:40px;text-align:center;top:991.02px;font-size:11.5px;color:#a6a6a6;">108</div><div class="t" style="left:736.8333px;width:40px;text-align:center;top:991.02px;font-size:11.5px;color:#a6a6a6;">120</div><div class="t" style="left:807.0417px;width:40px;text-align:center;top:991.02px;font-size:11.5px;color:#a6a6a6;">132</div><div class="t" style="left:877.2501px;width:40px;text-align:center;top:991.02px;font-size:11.5px;color:#a6a6a6;">144</div><div class="t" style="left:947.4585px;width:40px;text-align:center;top:991.02px;font-size:11.5px;color:#a6a6a6;">156</div><div class="t" style="left:1017.6668999999999px;width:40px;text-align:center;top:991.02px;font-size:11.5px;color:#a6a6a6;">168</div><div class="t" style="left:1087.8753px;width:40px;text-align:center;top:991.02px;font-size:11.5px;color:#a6a6a6;">180</div><div class="t" style="left:1158.0837px;width:40px;text-align:center;top:991.02px;font-size:11.5px;color:#a6a6a6;">192</div><div class="t" style="left:1228.2921px;width:40px;text-align:center;top:991.02px;font-size:11.5px;color:#a6a6a6;">204</div><div class="t" style="left:1298.5004999999999px;width:40px;text-align:center;top:991.02px;font-size:11.5px;color:#a6a6a6;">216</div><div class="t" style="left:1368.7088999999999px;width:40px;text-align:center;top:991.02px;font-size:11.5px;color:#a6a6a6;">228</div><div class="t" style="left:1438.9172999999998px;width:40px;text-align:center;top:991.02px;font-size:11.5px;color:#a6a6a6;">240</div><div class="t" style="left:1509.1256999999998px;width:40px;text-align:center;top:991.02px;font-size:11.5px;color:#a6a6a6;">252</div><svg style="position:absolute;left:62px;top:1014px;overflow:hidden" width="508.5" height="4.5" viewBox="0 0 508.5 4.5"><rect width="508.5" height="4.5" fill="#3a2d12"/><path d="M-8 0 H0 L4 4.5 H-4 Z" fill="#7f6c2f"/><path d="M4 0 H12 L16 4.5 H8 Z" fill="#7f6c2f"/><path d="M16 0 H24 L28 4.5 H20 Z" fill="#7f6c2f"/><path d="M28 0 H36 L40 4.5 H32 Z" fill="#7f6c2f"/><path d="M40 0 H48 L52 4.5 H44 Z" fill="#7f6c2f"/><path d="M52 0 H60 L64 4.5 H56 Z" fill="#7f6c2f"/><path d="M64 0 H72 L76 4.5 H68 Z" fill="#7f6c2f"/><path d="M76 0 H84 L88 4.5 H80 Z" fill="#7f6c2f"/><path d="M88 0 H96 L100 4.5 H92 Z" fill="#7f6c2f"/><path d="M100 0 H108 L112 4.5 H104 Z" fill="#7f6c2f"/><path d="M112 0 H120 L124 4.5 H116 Z" fill="#7f6c2f"/><path d="M124 0 H132 L136 4.5 H128 Z" fill="#7f6c2f"/><path d="M136 0 H144 L148 4.5 H140 Z" fill="#7f6c2f"/><path d="M148 0 H156 L160 4.5 H152 Z" fill="#7f6c2f"/><path d="M160 0 H168 L172 4.5 H164 Z" fill="#7f6c2f"/><path d="M172 0 H180 L184 4.5 H176 Z" fill="#7f6c2f"/><path d="M184 0 H192 L196 4.5 H188 Z" fill="#7f6c2f"/><path d="M196 0 H204 L208 4.5 H200 Z" fill="#7f6c2f"/><path d="M208 0 H216 L220 4.5 H212 Z" fill="#7f6c2f"/><path d="M220 0 H228 L232 4.5 H224 Z" fill="#7f6c2f"/><path d="M232 0 H240 L244 4.5 H236 Z" fill="#7f6c2f"/><path d="M244 0 H252 L256 4.5 H248 Z" fill="#7f6c2f"/><path d="M256 0 H264 L268 4.5 H260 Z" fill="#7f6c2f"/><path d="M268 0 H276 L280 4.5 H272 Z" fill="#7f6c2f"/><path d="M280 0 H288 L292 4.5 H284 Z" fill="#7f6c2f"/><path d="M292 0 H300 L304 4.5 H296 Z" fill="#7f6c2f"/><path d="M304 0 H312 L316 4.5 H308 Z" fill="#7f6c2f"/><path d="M316 0 H324 L328 4.5 H320 Z" fill="#7f6c2f"/><path d="M328 0 H336 L340 4.5 H332 Z" fill="#7f6c2f"/><path d="M340 0 H348 L352 4.5 H344 Z" fill="#7f6c2f"/><path d="M352 0 H360 L364 4.5 H356 Z" fill="#7f6c2f"/><path d="M364 0 H372 L376 4.5 H368 Z" fill="#7f6c2f"/><path d="M376 0 H384 L388 4.5 H380 Z" fill="#7f6c2f"/><path d="M388 0 H396 L400 4.5 H392 Z" fill="#7f6c2f"/><path d="M400 0 H408 L412 4.5 H404 Z" fill="#7f6c2f"/><path d="M412 0 H420 L424 4.5 H416 Z" fill="#7f6c2f"/><path d="M424 0 H432 L436 4.5 H428 Z" fill="#7f6c2f"/><path d="M436 0 H444 L448 4.5 H440 Z" fill="#7f6c2f"/><path d="M448 0 H456 L460 4.5 H452 Z" fill="#7f6c2f"/><path d="M460 0 H468 L472 4.5 H464 Z" fill="#7f6c2f"/><path d="M472 0 H480 L484 4.5 H476 Z" fill="#7f6c2f"/><path d="M484 0 H492 L496 4.5 H488 Z" fill="#7f6c2f"/><path d="M496 0 H504 L508 4.5 H500 Z" fill="#7f6c2f"/></svg><div style="position:absolute;left:15px;top:1025px;width:43px;height:3px;background:#363636;border-radius:1.5px;"></div><svg style="position:absolute;left:1.5999999999999996px;top:1015px;" width="8" height="10" viewBox="0 0 8 10"><path d="M2.2 1.5 L5.8 5 L2.2 8.5" stroke="#8a8a8a" stroke-width="1.2" fill="none"/></svg><svg style="position:absolute;left:47px;top:990px;" width="26" height="41" viewBox="0 0 26 41"><path d="M4 1 H21 Q25 1 25 5 V16 Q25 19.5 22 19.5 L15.5 24.5 V40.5 H11.5 V24.5 L5 19.5 Q1 19.5 1 16 V5 Q1 1 4 1 Z" fill="#4772b3" stroke="#10161f" stroke-width="1"/></svg><div class="t" style="left:50.6px;width:20px;text-align:center;top:990.98px;font-size:11.6px;color:#f4f4f4;">1</div><svg style="position:absolute;left:6px;top:1035px;" width="12" height="16" viewBox="0 0 12 16"><rect x="1" y="1" width="10" height="14" rx="3.5" stroke="#bdbdbd" stroke-width="1.1" fill="none"/><path d="M1.5 6 V3 Q1.5 1 4 1 H5.5 V6 Z" fill="#bdbdbd"/></svg><div class="t" style="left:20.6px;top:1032.88px;font-size:11.6px;color:#bdbdbd;">Select</div><svg style="position:absolute;left:61px;top:1035px;" width="12" height="16" viewBox="0 0 12 16"><rect x="1" y="1" width="10" height="14" rx="3.5" stroke="#bdbdbd" stroke-width="1.1" fill="none"/><rect x="4.5" y="2.5" width="2.5" height="5" fill="#bdbdbd"/></svg><div class="t" style="left:75.6px;top:1032.88px;font-size:11.6px;color:#bdbdbd;">Rotate View</div><svg style="position:absolute;left:147px;top:1035px;" width="12" height="16" viewBox="0 0 12 16"><rect x="1" y="1" width="10" height="14" rx="3.5" stroke="#bdbdbd" stroke-width="1.1" fill="none"/><path d="M6 6 V1 H8 Q10.5 1 10.5 3 V6 Z" fill="#bdbdbd"/></svg><div class="t" style="left:161.25px;top:1032.88px;font-size:11.6px;color:#bdbdbd;">Options</div><svg style="position:absolute;left:1853px;top:1035px;" width="17" height="16" viewBox="0 0 17 16"><circle cx="8" cy="8" r="6" stroke="#8a8a8a" stroke-width="1" fill="none"/><ellipse cx="8" cy="8" rx="2.5" ry="6" stroke="#8a8a8a" stroke-width="1" fill="none"/><path d="M2 8 H14 M2 2 L15 15" stroke="#8a8a8a" stroke-width="1"/></svg><div style="position:absolute;left:1876px;top:1036px;width:1px;height:14px;background:#6a6a6a;border-radius:0px;"></div><div class="t" style="left:1881.8px;top:1032.68px;font-size:11.6px;color:#9a9a9a;">5.0.1</div><div style="position:absolute;left:2px;top:77px;width:1574px;height:883px;border-radius:6px;box-shadow:inset 0 0 0 1px rgba(255,255,255,0.055);pointer-events:none"></div><div style="position:absolute;left:1579px;top:77px;width:339px;height:320.5px;border-radius:6px;box-shadow:inset 0 0 0 1px rgba(255,255,255,0.055);pointer-events:none"></div><div style="position:absolute;left:1579px;top:401px;width:339px;height:629px;border-radius:6px;box-shadow:inset 0 0 0 1px rgba(255,255,255,0.055);pointer-events:none"></div><div style="position:absolute;left:2px;top:963px;width:1574px;height:67px;border-radius:6px;box-shadow:inset 0 0 0 1px rgba(255,255,255,0.055);pointer-events:none"></div>
</body></html>
